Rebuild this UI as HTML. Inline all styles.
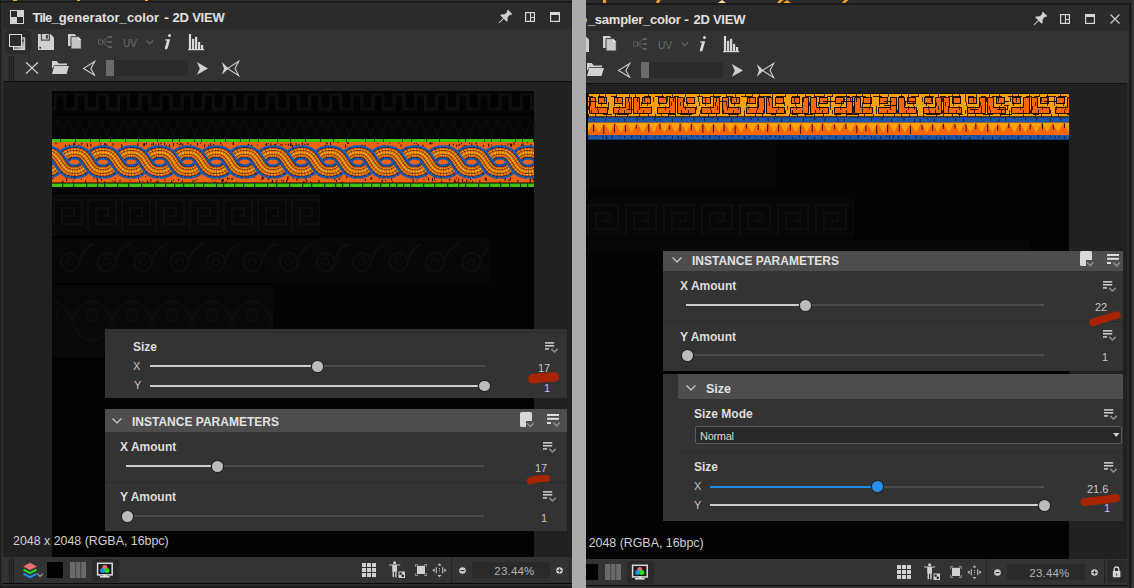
<!DOCTYPE html>
<html><head><meta charset="utf-8">
<style>
*{margin:0;padding:0;box-sizing:border-box}
html,body{width:1134px;height:588px;overflow:hidden;background:#2b2b2b;font-family:"Liberation Sans",sans-serif;color:#d2d2d2}
.a{position:absolute}
.t{position:absolute;white-space:nowrap;line-height:1}
svg{position:absolute;overflow:hidden}
</style></head><body>

<!-- ================= LEFT PANEL ================= -->
<div class="a" style="left:0;top:0;width:572px;height:588px;background:#2b2b2b"></div>
<div class="a" style="left:0;top:0;width:572px;height:1px;background:#2f2f2f"></div>
<div class="a" style="left:0;top:1px;width:572px;height:1px;background:#171717"></div>
<div class="a" style="left:0;top:2px;width:572px;height:1px;background:#1f1f1f"></div>
<div class="a" style="left:1px;top:3px;width:571px;height:1px;background:#2f2f2f"></div>
<div class="a" style="left:13px;top:0;width:4px;height:1.4px;background:#f0a83a"></div>
<div class="a" style="left:77px;top:0;width:3px;height:1.4px;background:#f0a83a"></div>
<div class="a" style="left:145px;top:0;width:3px;height:1.4px;background:#f0a83a"></div>
<div class="a" style="left:0;top:0;width:1px;height:588px;background:#1c1c1c"></div>
<div class="a" style="left:1px;top:3px;width:2px;height:583px;background:#2e2e2e"></div>
<!-- title bar -->
<div class="a" style="left:3px;top:4px;width:569px;height:25px;background:#2b2b2b"></div>
<!-- toolbar -->
<div class="a" style="left:3px;top:29px;width:569px;height:52px;background:#333333"></div>
<div class="a" style="left:3px;top:81px;width:569px;height:1px;background:#0e0e0e"></div>
<!-- viewport -->
<div class="a" style="left:3px;top:82px;width:569px;height:475px;background:#212121"></div>
<!-- image -->
<div class="a" style="left:52px;top:91px;width:482px;height:466px;background:#030303"></div>
<!-- bottom bar -->
<div class="a" style="left:3px;top:557px;width:569px;height:26px;background:#333333"></div>
<div class="a" style="left:3px;top:583px;width:569px;height:1px;background:#0a0a0a"></div>
<div class="a" style="left:1px;top:584px;width:571px;height:2px;background:#2e2e2e"></div>
<div class="a" style="left:0;top:586px;width:572px;height:2px;background:#1c1c1c"></div>

<!-- ================= SPLITTER ================= -->
<div class="a" style="left:572px;top:0;width:14px;height:588px;background:#ababab"></div>

<!-- ================= RIGHT PANEL ================= -->
<div class="a" style="left:586px;top:0;width:548px;height:588px;background:#2b2b2b"></div>
<div class="a" style="left:586px;top:3px;width:545px;height:2px;background:#1a1a1a"></div>
<div class="a" style="left:1129px;top:3px;width:2px;height:585px;background:#1a1a1a"></div>
<div class="a" style="left:1131px;top:0;width:3px;height:588px;background:#333333"></div><div class="a" style="left:1131px;top:0;width:1px;height:588px;background:#2a2a2a"></div>
<svg style="left:586px;top:0" width="548" height="3" viewBox="0 0 548 3"><path d="M17,0 h3 v3 h-3 z M71,0 h3.5 l-1.5,3 h-3 z M197,3 l4,-3 l4,3 z M194,3 h-3 l2.5,-3 h4 z M259,3 h-3 l2.5,-3 h4 z" fill="#f5a020"/><path d="M132,3 l4,-3 l4,3 z" fill="#ffdca8"/></svg>
<!-- title bar -->
<div class="a" style="left:586px;top:5px;width:543px;height:26px;background:#2b2b2b"></div>
<!-- toolbar -->
<div class="a" style="left:586px;top:31px;width:543px;height:52px;background:#333333"></div>
<div class="a" style="left:586px;top:83px;width:541px;height:1px;background:#0e0e0e"></div>
<!-- viewport -->
<div class="a" style="left:586px;top:84px;width:541px;height:475px;background:#212121"></div>
<div class="a" style="left:1127px;top:84px;width:2px;height:504px;background:#2a2a2a"></div>
<!-- image -->
<div class="a" style="left:586px;top:93px;width:483px;height:466px;background:#030303"></div>
<!-- bottom bar -->
<div class="a" style="left:586px;top:559px;width:541px;height:26px;background:#333333"></div>
<div class="a" style="left:586px;top:585px;width:541px;height:1px;background:#0a0a0a"></div>
<div class="a" style="left:586px;top:586px;width:543px;height:2px;background:#2e2e2e"></div>

<svg style="left:52px;top:93px" width="482" height="20" viewBox="0 0 482 20"><path d="M0,16 H3.0 V2 H13.0 V16 H21.2 H24.2 V2 H34.2 V16 H42.4 H45.4 V2 H55.4 V16 H63.6 H66.6 V2 H76.6 V16 H84.8 H87.8 V2 H97.8 V16 H106.0 H109.0 V2 H119.0 V16 H127.2 H130.2 V2 H140.2 V16 H148.4 H151.4 V2 H161.4 V16 H169.6 H172.6 V2 H182.6 V16 H190.8 H193.8 V2 H203.8 V16 H212.0 H215.0 V2 H225.0 V16 H233.2 H236.2 V2 H246.2 V16 H254.4 H257.4 V2 H267.4 V16 H275.6 H278.6 V2 H288.6 V16 H296.8 H299.8 V2 H309.8 V16 H318.0 H321.0 V2 H331.0 V16 H339.2 H342.2 V2 H352.2 V16 H360.4 H363.4 V2 H373.4 V16 H381.6 H384.6 V2 H394.6 V16 H402.8 H405.8 V2 H415.8 V16 H424.0 H427.0 V2 H437.0 V16 H445.2 H448.2 V2 H458.2 V16 H466.4 H469.4 V2 H479.4 V16 H487.6 H490.6 V2 H500.6 V16 H508.8" fill="none" stroke="#0e0e0e" stroke-width="3.2"/><path d="M0,19 H482" stroke="#0a0a0a" stroke-width="1"/></svg>
<svg style="left:52px;top:116px" width="482" height="22" viewBox="0 0 482 22"><rect width="482" height="22" fill="#060606"/><path d="M0.0,20 L5.5,3 L11.0,20 M11.0,20 L16.5,3 L22.0,20 M22.0,20 L27.5,3 L33.0,20 M33.0,20 L38.5,3 L44.0,20 M44.0,20 L49.5,3 L55.0,20 M55.0,20 L60.5,3 L66.0,20 M66.0,20 L71.5,3 L77.0,20 M77.0,20 L82.5,3 L88.0,20 M88.0,20 L93.5,3 L99.0,20 M99.0,20 L104.5,3 L110.0,20 M110.0,20 L115.5,3 L121.0,20 M121.0,20 L126.5,3 L132.0,20 M132.0,20 L137.5,3 L143.0,20 M143.0,20 L148.5,3 L154.0,20 M154.0,20 L159.5,3 L165.0,20 M165.0,20 L170.5,3 L176.0,20 M176.0,20 L181.5,3 L187.0,20 M187.0,20 L192.5,3 L198.0,20 M198.0,20 L203.5,3 L209.0,20 M209.0,20 L214.5,3 L220.0,20 M220.0,20 L225.5,3 L231.0,20 M231.0,20 L236.5,3 L242.0,20 M242.0,20 L247.5,3 L253.0,20 M253.0,20 L258.5,3 L264.0,20 M264.0,20 L269.5,3 L275.0,20 M275.0,20 L280.5,3 L286.0,20 M286.0,20 L291.5,3 L297.0,20 M297.0,20 L302.5,3 L308.0,20 M308.0,20 L313.5,3 L319.0,20 M319.0,20 L324.5,3 L330.0,20 M330.0,20 L335.5,3 L341.0,20 M341.0,20 L346.5,3 L352.0,20 M352.0,20 L357.5,3 L363.0,20 M363.0,20 L368.5,3 L374.0,20 M374.0,20 L379.5,3 L385.0,20 M385.0,20 L390.5,3 L396.0,20 M396.0,20 L401.5,3 L407.0,20 M407.0,20 L412.5,3 L418.0,20 M418.0,20 L423.5,3 L429.0,20 M429.0,20 L434.5,3 L440.0,20 M440.0,20 L445.5,3 L451.0,20 M451.0,20 L456.5,3 L462.0,20 M462.0,20 L467.5,3 L473.0,20 M473.0,20 L478.5,3 L484.0,20 " fill="none" stroke="#0b0b0b" stroke-width="1.6"/></svg>
<svg style="left:52px;top:194px" width="268" height="42" viewBox="0 0 268 42"><rect width="268" height="42" fill="#070707"/><path d="M2.0,36 V6 H30.0 V30 H10.0 V14 H22.0 V22 H16.0 M36.0,36 V6 H64.0 V30 H44.0 V14 H56.0 V22 H50.0 M70.0,36 V6 H98.0 V30 H78.0 V14 H90.0 V22 H84.0 M104.0,36 V6 H132.0 V30 H112.0 V14 H124.0 V22 H118.0 M138.0,36 V6 H166.0 V30 H146.0 V14 H158.0 V22 H152.0 M172.0,36 V6 H200.0 V30 H180.0 V14 H192.0 V22 H186.0 M206.0,36 V6 H234.0 V30 H214.0 V14 H226.0 V22 H220.0 M240.0,36 V6 H268.0 V30 H248.0 V14 H260.0 V22 H254.0 " fill="none" stroke="#0e0e0e" stroke-width="2.2"/><path d="M0,40 H268 M0,2 H268" stroke="#0e0e0e" stroke-width="1.5"/></svg>
<svg style="left:52px;top:238px" width="438" height="45" viewBox="0 0 438 45"><rect width="438" height="45" fill="#070707"/><circle cx="18.0" cy="24" r="9" fill="none" stroke="#0e0e0e" stroke-width="2.4"/><circle cx="18.0" cy="24" r="3.5" fill="none" stroke="#0d0d0d" stroke-width="2"/><path d="M27.0,24 Q32.0,8 42.0,6" fill="none" stroke="#0e0e0e" stroke-width="2.4"/><circle cx="54.5" cy="24" r="9" fill="none" stroke="#0e0e0e" stroke-width="2.4"/><circle cx="54.5" cy="24" r="3.5" fill="none" stroke="#0d0d0d" stroke-width="2"/><path d="M63.5,24 Q68.5,8 78.5,6" fill="none" stroke="#0e0e0e" stroke-width="2.4"/><circle cx="91.0" cy="24" r="9" fill="none" stroke="#0e0e0e" stroke-width="2.4"/><circle cx="91.0" cy="24" r="3.5" fill="none" stroke="#0d0d0d" stroke-width="2"/><path d="M100.0,24 Q105.0,8 115.0,6" fill="none" stroke="#0e0e0e" stroke-width="2.4"/><circle cx="127.5" cy="24" r="9" fill="none" stroke="#0e0e0e" stroke-width="2.4"/><circle cx="127.5" cy="24" r="3.5" fill="none" stroke="#0d0d0d" stroke-width="2"/><path d="M136.5,24 Q141.5,8 151.5,6" fill="none" stroke="#0e0e0e" stroke-width="2.4"/><circle cx="164.0" cy="24" r="9" fill="none" stroke="#0e0e0e" stroke-width="2.4"/><circle cx="164.0" cy="24" r="3.5" fill="none" stroke="#0d0d0d" stroke-width="2"/><path d="M173.0,24 Q178.0,8 188.0,6" fill="none" stroke="#0e0e0e" stroke-width="2.4"/><circle cx="200.5" cy="24" r="9" fill="none" stroke="#0e0e0e" stroke-width="2.4"/><circle cx="200.5" cy="24" r="3.5" fill="none" stroke="#0d0d0d" stroke-width="2"/><path d="M209.5,24 Q214.5,8 224.5,6" fill="none" stroke="#0e0e0e" stroke-width="2.4"/><circle cx="237.0" cy="24" r="9" fill="none" stroke="#0e0e0e" stroke-width="2.4"/><circle cx="237.0" cy="24" r="3.5" fill="none" stroke="#0d0d0d" stroke-width="2"/><path d="M246.0,24 Q251.0,8 261.0,6" fill="none" stroke="#0e0e0e" stroke-width="2.4"/><circle cx="273.5" cy="24" r="9" fill="none" stroke="#0e0e0e" stroke-width="2.4"/><circle cx="273.5" cy="24" r="3.5" fill="none" stroke="#0d0d0d" stroke-width="2"/><path d="M282.5,24 Q287.5,8 297.5,6" fill="none" stroke="#0e0e0e" stroke-width="2.4"/><circle cx="310.0" cy="24" r="9" fill="none" stroke="#0e0e0e" stroke-width="2.4"/><circle cx="310.0" cy="24" r="3.5" fill="none" stroke="#0d0d0d" stroke-width="2"/><path d="M319.0,24 Q324.0,8 334.0,6" fill="none" stroke="#0e0e0e" stroke-width="2.4"/><circle cx="346.5" cy="24" r="9" fill="none" stroke="#0e0e0e" stroke-width="2.4"/><circle cx="346.5" cy="24" r="3.5" fill="none" stroke="#0d0d0d" stroke-width="2"/><path d="M355.5,24 Q360.5,8 370.5,6" fill="none" stroke="#0e0e0e" stroke-width="2.4"/><circle cx="383.0" cy="24" r="9" fill="none" stroke="#0e0e0e" stroke-width="2.4"/><circle cx="383.0" cy="24" r="3.5" fill="none" stroke="#0d0d0d" stroke-width="2"/><path d="M392.0,24 Q397.0,8 407.0,6" fill="none" stroke="#0e0e0e" stroke-width="2.4"/><circle cx="419.5" cy="24" r="9" fill="none" stroke="#0e0e0e" stroke-width="2.4"/><circle cx="419.5" cy="24" r="3.5" fill="none" stroke="#0d0d0d" stroke-width="2"/><path d="M428.5,24 Q433.5,8 443.5,6" fill="none" stroke="#0e0e0e" stroke-width="2.4"/></svg>
<svg style="left:52px;top:285px" width="221" height="72" viewBox="0 0 221 72"><rect width="221" height="72" fill="#080808"/><path d="M-20.0,36 C-10.0,10 10.0,10 20.0,36 C30.0,62 50.0,62 60.0,36" fill="none" stroke="#0d0d0d" stroke-width="3"/><circle cx="0.0" cy="30" r="6" fill="none" stroke="#0e0e0e" stroke-width="2.2"/><path d="M20.0,36 C30.0,10 50.0,10 60.0,36 C70.0,62 90.0,62 100.0,36" fill="none" stroke="#0d0d0d" stroke-width="3"/><circle cx="40.0" cy="30" r="6" fill="none" stroke="#0e0e0e" stroke-width="2.2"/><path d="M60.0,36 C70.0,10 90.0,10 100.0,36 C110.0,62 130.0,62 140.0,36" fill="none" stroke="#0d0d0d" stroke-width="3"/><circle cx="80.0" cy="30" r="6" fill="none" stroke="#0e0e0e" stroke-width="2.2"/><path d="M100.0,36 C110.0,10 130.0,10 140.0,36 C150.0,62 170.0,62 180.0,36" fill="none" stroke="#0d0d0d" stroke-width="3"/><circle cx="120.0" cy="30" r="6" fill="none" stroke="#0e0e0e" stroke-width="2.2"/><path d="M140.0,36 C150.0,10 170.0,10 180.0,36 C190.0,62 210.0,62 220.0,36" fill="none" stroke="#0d0d0d" stroke-width="3"/><circle cx="160.0" cy="30" r="6" fill="none" stroke="#0e0e0e" stroke-width="2.2"/><path d="M180.0,36 C190.0,10 210.0,10 220.0,36 C230.0,62 250.0,62 260.0,36" fill="none" stroke="#0d0d0d" stroke-width="3"/><circle cx="200.0" cy="30" r="6" fill="none" stroke="#0e0e0e" stroke-width="2.2"/><path d="M220.0,36 C230.0,10 250.0,10 260.0,36 C270.0,62 290.0,62 300.0,36" fill="none" stroke="#0d0d0d" stroke-width="3"/><circle cx="240.0" cy="30" r="6" fill="none" stroke="#0e0e0e" stroke-width="2.2"/></svg>
<svg style="left:586px;top:140px" width="190" height="48" viewBox="0 0 190 48"><rect width="190" height="48" fill="#060606"/></svg>
<svg style="left:586px;top:199px" width="268" height="40" viewBox="0 0 268 40"><rect width="268" height="40" fill="#070707"/><path d="M2.0,36 V6 H32.0 V30 H10.0 V14 H24.0 V22 H17.0 M40.0,36 V6 H70.0 V30 H48.0 V14 H62.0 V22 H55.0 M78.0,36 V6 H108.0 V30 H86.0 V14 H100.0 V22 H93.0 M116.0,36 V6 H146.0 V30 H124.0 V14 H138.0 V22 H131.0 M154.0,36 V6 H184.0 V30 H162.0 V14 H176.0 V22 H169.0 M192.0,36 V6 H222.0 V30 H200.0 V14 H214.0 V22 H207.0 M230.0,36 V6 H260.0 V30 H238.0 V14 H252.0 V22 H245.0 M268.0,36 V6 H298.0 V30 H276.0 V14 H290.0 V22 H283.0 " fill="none" stroke="#0e0e0e" stroke-width="2.2"/></svg>
<svg style="left:586px;top:240px" width="444" height="11" viewBox="0 0 444 11"><rect width="444" height="11" fill="#070707"/></svg><svg class="a" style="left:52px;top:138px" width="482" height="50" viewBox="0 0 482 50">
<defs><clipPath id="cb"><rect x="0" y="0" width="482" height="50"/></clipPath></defs><g clip-path="url(#cb)">
<rect x="0" y="1" width="482" height="3" fill="#3fc410"/>
<rect x="8" y="1" width="1" height="3" fill="#1a3a08"/>
<rect x="23" y="1" width="1" height="3" fill="#1a3a08"/>
<rect x="38" y="1" width="1" height="3" fill="#1a3a08"/>
<rect x="47" y="1" width="1" height="3" fill="#1a3a08"/>
<rect x="58" y="1" width="1" height="3" fill="#1a3a08"/>
<rect x="73" y="1" width="1" height="3" fill="#1a3a08"/>
<rect x="86" y="1" width="1" height="3" fill="#1a3a08"/>
<rect x="105" y="1" width="1" height="3" fill="#1a3a08"/>
<rect x="120" y="1" width="1" height="3" fill="#1a3a08"/>
<rect x="127" y="1" width="1" height="3" fill="#1a3a08"/>
<rect x="142" y="1" width="1" height="3" fill="#1a3a08"/>
<rect x="149" y="1" width="1" height="3" fill="#1a3a08"/>
<rect x="162" y="1" width="1" height="3" fill="#1a3a08"/>
<rect x="173" y="1" width="1" height="3" fill="#1a3a08"/>
<rect x="188" y="1" width="1" height="3" fill="#1a3a08"/>
<rect x="197" y="1" width="1" height="3" fill="#1a3a08"/>
<rect x="206" y="1" width="1" height="3" fill="#1a3a08"/>
<rect x="225" y="1" width="1" height="3" fill="#1a3a08"/>
<rect x="238" y="1" width="1" height="3" fill="#1a3a08"/>
<rect x="253" y="1" width="1" height="3" fill="#1a3a08"/>
<rect x="268" y="1" width="1" height="3" fill="#1a3a08"/>
<rect x="281" y="1" width="1" height="3" fill="#1a3a08"/>
<rect x="294" y="1" width="1" height="3" fill="#1a3a08"/>
<rect x="313" y="1" width="1" height="3" fill="#1a3a08"/>
<rect x="322" y="1" width="1" height="3" fill="#1a3a08"/>
<rect x="331" y="1" width="1" height="3" fill="#1a3a08"/>
<rect x="350" y="1" width="1" height="3" fill="#1a3a08"/>
<rect x="359" y="1" width="1" height="3" fill="#1a3a08"/>
<rect x="374" y="1" width="1" height="3" fill="#1a3a08"/>
<rect x="387" y="1" width="1" height="3" fill="#1a3a08"/>
<rect x="406" y="1" width="1" height="3" fill="#1a3a08"/>
<rect x="413" y="1" width="1" height="3" fill="#1a3a08"/>
<rect x="432" y="1" width="1" height="3" fill="#1a3a08"/>
<rect x="439" y="1" width="1" height="3" fill="#1a3a08"/>
<rect x="448" y="1" width="1" height="3" fill="#1a3a08"/>
<rect x="463" y="1" width="1" height="3" fill="#1a3a08"/>
<rect x="470" y="1" width="1" height="3" fill="#1a3a08"/>
<rect x="481" y="1" width="1" height="3" fill="#1a3a08"/>
<rect x="0" y="4" width="482" height="40.5" fill="#f0640f"/>
<rect x="376.0" y="39.6" width="1" height="3" fill="#200800"/>
<rect x="379.9" y="42.4" width="1" height="1" fill="#200800"/>
<rect x="423.6" y="4.3" width="1" height="2" fill="#200800"/>
<rect x="465.4" y="41.8" width="1" height="2" fill="#200800"/>
<rect x="244.5" y="40.1" width="1" height="3" fill="#200800"/>
<rect x="112.0" y="5.0" width="1" height="2" fill="#200800"/>
<rect x="477.7" y="39.0" width="1" height="3" fill="#200800"/>
<rect x="436.1" y="5.7" width="1" height="3" fill="#200800"/>
<rect x="400.8" y="5.7" width="1" height="2" fill="#200800"/>
<rect x="411.6" y="7.0" width="1" height="2" fill="#200800"/>
<rect x="432.4" y="40.6" width="1" height="1" fill="#200800"/>
<rect x="21.3" y="38.3" width="1" height="3" fill="#200800"/>
<rect x="424.6" y="6.9" width="1" height="2" fill="#200800"/>
<rect x="3.5" y="4.3" width="1" height="2" fill="#200800"/>
<rect x="140.6" y="42.1" width="1" height="2" fill="#200800"/>
<rect x="173.6" y="43.2" width="1" height="2" fill="#200800"/>
<rect x="419.3" y="5.2" width="1" height="3" fill="#200800"/>
<rect x="468.9" y="6.4" width="1" height="2" fill="#200800"/>
<rect x="210.8" y="39.8" width="1" height="1" fill="#200800"/>
<rect x="380.0" y="39.9" width="1" height="3" fill="#200800"/>
<rect x="284.0" y="41.8" width="1" height="2" fill="#200800"/>
<rect x="170.1" y="41.7" width="1" height="3" fill="#200800"/>
<rect x="235.9" y="5.8" width="1" height="2" fill="#200800"/>
<rect x="121.0" y="41.6" width="1" height="1" fill="#200800"/>
<rect x="175.4" y="40.2" width="1" height="2" fill="#200800"/>
<rect x="379.5" y="4.3" width="1" height="2" fill="#200800"/>
<rect x="241.0" y="39.6" width="1" height="1" fill="#200800"/>
<rect x="326.8" y="38.6" width="1" height="2" fill="#200800"/>
<rect x="325.3" y="4.7" width="1" height="1" fill="#200800"/>
<rect x="162.3" y="43.3" width="1" height="2" fill="#200800"/>
<rect x="108.5" y="4.4" width="1" height="2" fill="#200800"/>
<rect x="388.9" y="39.1" width="1" height="2" fill="#200800"/>
<rect x="389.1" y="42.8" width="1" height="3" fill="#200800"/>
<rect x="62.5" y="42.8" width="1" height="2" fill="#200800"/>
<rect x="166.9" y="40.5" width="1" height="1" fill="#200800"/>
<rect x="443.7" y="38.0" width="1" height="3" fill="#200800"/>
<rect x="458.0" y="39.3" width="1" height="3" fill="#200800"/>
<rect x="360.5" y="6.9" width="1" height="1" fill="#200800"/>
<rect x="413.5" y="6.9" width="1" height="1" fill="#200800"/>
<rect x="16.9" y="6.4" width="1" height="2" fill="#200800"/>
<rect x="278.1" y="4.0" width="1" height="3" fill="#200800"/>
<rect x="144.5" y="41.1" width="1" height="1" fill="#200800"/>
<rect x="452.6" y="40.0" width="1" height="3" fill="#200800"/>
<rect x="230.0" y="6.3" width="1" height="1" fill="#200800"/>
<rect x="257.7" y="39.0" width="1" height="1" fill="#200800"/>
<rect x="396.9" y="41.8" width="1" height="1" fill="#200800"/>
<rect x="364.6" y="41.7" width="1" height="1" fill="#200800"/>
<rect x="227.9" y="6.3" width="1" height="1" fill="#200800"/>
<rect x="22.3" y="4.1" width="1" height="3" fill="#200800"/>
<rect x="41.5" y="39.9" width="1" height="1" fill="#200800"/>
<rect x="169.3" y="41.5" width="1" height="2" fill="#200800"/>
<rect x="92.1" y="5.0" width="1" height="3" fill="#200800"/>
<rect x="348.5" y="6.4" width="1" height="2" fill="#200800"/>
<rect x="222.1" y="6.0" width="1" height="3" fill="#200800"/>
<rect x="427.3" y="41.8" width="1" height="2" fill="#200800"/>
<rect x="458.0" y="5.3" width="1" height="3" fill="#200800"/>
<rect x="130.2" y="5.8" width="1" height="2" fill="#200800"/>
<rect x="62.8" y="40.0" width="1" height="1" fill="#200800"/>
<rect x="223.7" y="42.9" width="1" height="3" fill="#200800"/>
<rect x="52.4" y="5.0" width="1" height="2" fill="#200800"/>
<rect x="69.2" y="6.3" width="1" height="3" fill="#200800"/>
<rect x="47.9" y="6.6" width="1" height="2" fill="#200800"/>
<rect x="405.6" y="43.1" width="1" height="3" fill="#200800"/>
<rect x="459.1" y="5.7" width="1" height="3" fill="#200800"/>
<rect x="246.5" y="6.1" width="1" height="3" fill="#200800"/>
<rect x="29.5" y="5.0" width="1" height="1" fill="#200800"/>
<rect x="481.2" y="40.7" width="1" height="2" fill="#200800"/>
<rect x="177.1" y="40.1" width="1" height="1" fill="#200800"/>
<rect x="180.9" y="4.7" width="1" height="2" fill="#200800"/>
<rect x="333.0" y="42.0" width="1" height="1" fill="#200800"/>
<rect x="309.9" y="6.7" width="1" height="2" fill="#200800"/>
<rect x="360.6" y="41.1" width="1" height="3" fill="#200800"/>
<rect x="346.5" y="4.6" width="1" height="1" fill="#200800"/>
<rect x="282.3" y="39.4" width="1" height="3" fill="#200800"/>
<rect x="340.0" y="43.1" width="1" height="1" fill="#200800"/>
<rect x="148.1" y="4.8" width="1" height="1" fill="#200800"/>
<rect x="274.7" y="4.7" width="1" height="2" fill="#200800"/>
<rect x="477.8" y="41.6" width="1" height="3" fill="#200800"/>
<rect x="402.3" y="41.3" width="1" height="3" fill="#200800"/>
<rect x="34.9" y="6.8" width="1" height="2" fill="#200800"/>
<rect x="439.1" y="6.7" width="1" height="1" fill="#200800"/>
<rect x="411.6" y="39.1" width="1" height="1" fill="#200800"/>
<rect x="90.2" y="43.2" width="1" height="1" fill="#200800"/>
<rect x="417.0" y="4.9" width="1" height="1" fill="#200800"/>
<rect x="44.7" y="39.8" width="1" height="2" fill="#200800"/>
<rect x="279.7" y="38.0" width="1" height="2" fill="#200800"/>
<rect x="210.3" y="39.3" width="1" height="2" fill="#200800"/>
<rect x="60.5" y="5.0" width="1" height="3" fill="#200800"/>
<rect x="208.5" y="41.2" width="1" height="1" fill="#200800"/>
<rect x="254.3" y="42.1" width="1" height="2" fill="#200800"/>
<rect x="142.4" y="41.9" width="1" height="1" fill="#200800"/>
<rect x="363.5" y="6.9" width="1" height="3" fill="#200800"/>
<rect x="238.1" y="5.1" width="1" height="3" fill="#200800"/>
<rect x="311.2" y="39.1" width="1" height="1" fill="#200800"/>
<rect x="52.2" y="43.5" width="1" height="3" fill="#200800"/>
<rect x="144.9" y="4.6" width="1" height="3" fill="#200800"/>
<rect x="33.1" y="42.5" width="1" height="2" fill="#200800"/>
<rect x="48.1" y="4.8" width="1" height="1" fill="#200800"/>
<rect x="230.7" y="42.2" width="1" height="2" fill="#200800"/>
<rect x="455.5" y="5.3" width="1" height="2" fill="#200800"/>
<rect x="240.0" y="7.0" width="1" height="3" fill="#200800"/>
<rect x="54.3" y="6.3" width="1" height="3" fill="#200800"/>
<rect x="91.2" y="5.2" width="1" height="3" fill="#200800"/>
<rect x="293.0" y="6.6" width="1" height="3" fill="#200800"/>
<rect x="86.2" y="40.2" width="1" height="1" fill="#200800"/>
<rect x="406.0" y="40.4" width="1" height="2" fill="#200800"/>
<rect x="266.4" y="41.8" width="1" height="3" fill="#200800"/>
<rect x="233.3" y="5.8" width="1" height="1" fill="#200800"/>
<rect x="371.4" y="41.0" width="1" height="1" fill="#200800"/>
<rect x="93.2" y="38.2" width="1" height="1" fill="#200800"/>
<rect x="272.8" y="6.9" width="1" height="2" fill="#200800"/>
<rect x="381.9" y="38.3" width="1" height="3" fill="#200800"/>
<rect x="112.5" y="41.2" width="1" height="2" fill="#200800"/>
<rect x="158.3" y="5.0" width="1" height="3" fill="#200800"/>
<rect x="373.7" y="38.5" width="1" height="1" fill="#200800"/>
<rect x="449.1" y="6.6" width="1" height="2" fill="#200800"/>
<rect x="152.2" y="6.4" width="1" height="3" fill="#200800"/>
<rect x="77.5" y="42.2" width="1" height="1" fill="#200800"/>
<rect x="312.9" y="40.8" width="1" height="2" fill="#200800"/>
<rect x="87.0" y="42.3" width="1" height="2" fill="#200800"/>
<rect x="215.8" y="5.1" width="1" height="1" fill="#200800"/>
<rect x="124.7" y="5.1" width="1" height="1" fill="#200800"/>
<rect x="100.9" y="4.5" width="1" height="3" fill="#200800"/>
<rect x="13.2" y="39.0" width="1" height="1" fill="#200800"/>
<rect x="28.8" y="40.7" width="1" height="1" fill="#200800"/>
<rect x="339.1" y="40.4" width="1" height="2" fill="#200800"/>
<rect x="12.9" y="6.9" width="1" height="2" fill="#200800"/>
<rect x="228.8" y="41.7" width="1" height="1" fill="#200800"/>
<rect x="286.5" y="39.7" width="1" height="2" fill="#200800"/>
<rect x="235.5" y="38.2" width="1" height="3" fill="#200800"/>
<rect x="478.5" y="38.3" width="1" height="1" fill="#200800"/>
<rect x="285.5" y="4.0" width="1" height="1" fill="#200800"/>
<rect x="82.1" y="38.3" width="1" height="1" fill="#200800"/>
<rect x="433.7" y="40.0" width="1" height="2" fill="#200800"/>
<rect x="453.1" y="39.8" width="1" height="1" fill="#200800"/>
<rect x="456.6" y="40.5" width="1" height="3" fill="#200800"/>
<rect x="161.1" y="6.0" width="1" height="3" fill="#200800"/>
<rect x="416.7" y="43.6" width="1" height="1" fill="#200800"/>
<rect x="174.9" y="39.4" width="1" height="2" fill="#200800"/>
<rect x="129.9" y="42.3" width="1" height="2" fill="#200800"/>
<rect x="20.6" y="42.5" width="1" height="1" fill="#200800"/>
<rect x="365.6" y="6.0" width="1" height="3" fill="#200800"/>
<rect x="406.6" y="5.9" width="1" height="2" fill="#200800"/>
<rect x="224.8" y="41.9" width="1" height="1" fill="#200800"/>
<rect x="34.7" y="5.2" width="1" height="2" fill="#200800"/>
<rect x="274.2" y="4.3" width="1" height="1" fill="#200800"/>
<rect x="331.7" y="6.9" width="1" height="3" fill="#200800"/>
<rect x="474.9" y="4.3" width="1" height="1" fill="#200800"/>
<rect x="410.1" y="41.0" width="1" height="3" fill="#200800"/>
<rect x="377.0" y="5.4" width="1" height="1" fill="#200800"/>
<rect x="288.3" y="38.6" width="1" height="1" fill="#200800"/>
<rect x="52.6" y="5.2" width="1" height="3" fill="#200800"/>
<rect x="234.1" y="42.2" width="1" height="3" fill="#200800"/>
<rect x="318.6" y="39.8" width="1" height="2" fill="#200800"/>
<rect x="99.3" y="5.6" width="1" height="2" fill="#200800"/>
<rect x="166.8" y="38.4" width="1" height="2" fill="#200800"/>
<rect x="377.9" y="4.2" width="1" height="2" fill="#200800"/>
<rect x="403.9" y="39.4" width="1" height="1" fill="#200800"/>
<rect x="121.0" y="5.0" width="1" height="3" fill="#200800"/>
<rect x="105.4" y="42.4" width="1" height="3" fill="#200800"/>
<rect x="258.2" y="43.7" width="1" height="2" fill="#200800"/>
<rect x="430.8" y="6.9" width="1" height="2" fill="#200800"/>
<rect x="461.5" y="4.1" width="1" height="3" fill="#200800"/>
<rect x="72.6" y="38.4" width="1" height="1" fill="#200800"/>
<rect x="93.9" y="4.6" width="1" height="2" fill="#200800"/>
<rect x="225.7" y="4.6" width="1" height="1" fill="#200800"/>
<rect x="214.0" y="6.7" width="1" height="1" fill="#200800"/>
<rect x="234.9" y="39.7" width="1" height="3" fill="#200800"/>
<rect x="179.6" y="39.9" width="1" height="2" fill="#200800"/>
<rect x="253.5" y="40.2" width="1" height="2" fill="#200800"/>
<rect x="14.2" y="40.2" width="1" height="3" fill="#200800"/>
<rect x="116.9" y="6.4" width="1" height="3" fill="#200800"/>
<rect x="255.9" y="5.6" width="1" height="1" fill="#200800"/>
<rect x="98.3" y="40.8" width="1" height="3" fill="#200800"/>
<rect x="16.9" y="38.1" width="1" height="2" fill="#200800"/>
<rect x="402.7" y="42.9" width="1" height="2" fill="#200800"/>
<rect x="126.1" y="41.0" width="1" height="2" fill="#200800"/>
<rect x="21.2" y="5.3" width="1" height="3" fill="#200800"/>
<rect x="119.2" y="42.5" width="1" height="3" fill="#200800"/>
<rect x="361.8" y="5.0" width="1" height="1" fill="#200800"/>
<rect x="21.9" y="38.4" width="1" height="2" fill="#200800"/>
<rect x="251.2" y="43.2" width="1" height="2" fill="#200800"/>
<rect x="249.9" y="4.5" width="1" height="3" fill="#200800"/>
<rect x="49.0" y="40.7" width="1" height="2" fill="#200800"/>
<rect x="218.1" y="38.9" width="1" height="1" fill="#200800"/>
<rect x="251.6" y="43.1" width="1" height="3" fill="#200800"/>
<rect x="295.2" y="4.1" width="1" height="2" fill="#200800"/>
<rect x="60.4" y="42.5" width="1" height="1" fill="#200800"/>
<rect x="209.8" y="38.2" width="1" height="3" fill="#200800"/>
<rect x="215.9" y="40.1" width="1" height="2" fill="#200800"/>
<rect x="152.4" y="43.7" width="1" height="2" fill="#200800"/>
<rect x="294.3" y="38.2" width="1" height="2" fill="#200800"/>
<rect x="199.2" y="6.7" width="1" height="3" fill="#200800"/>
<rect x="38.3" y="5.6" width="1" height="3" fill="#200800"/>
<rect x="404.2" y="6.6" width="1" height="2" fill="#200800"/>
<rect x="129.0" y="5.4" width="1" height="1" fill="#200800"/>
<rect x="113.7" y="6.9" width="1" height="3" fill="#200800"/>
<rect x="478.5" y="6.0" width="1" height="2" fill="#200800"/>
<rect x="26.3" y="6.3" width="1" height="3" fill="#200800"/>
<rect x="396.5" y="6.6" width="1" height="3" fill="#200800"/>
<rect x="103.3" y="6.3" width="1" height="1" fill="#200800"/>
<rect x="135.3" y="4.4" width="1" height="2" fill="#200800"/>
<rect x="169.9" y="6.7" width="1" height="1" fill="#200800"/>
<rect x="452.7" y="7.0" width="1" height="1" fill="#200800"/>
<rect x="170.8" y="40.9" width="1" height="2" fill="#200800"/>
<rect x="10.3" y="42.5" width="1" height="3" fill="#200800"/>
<rect x="196.4" y="5.6" width="1" height="3" fill="#200800"/>
<rect x="219.9" y="42.5" width="1" height="3" fill="#200800"/>
<rect x="408.9" y="4.5" width="1" height="2" fill="#200800"/>
<rect x="128.2" y="4.6" width="1" height="2" fill="#200800"/>
<rect x="296.1" y="4.5" width="1" height="1" fill="#200800"/>
<rect x="382.7" y="42.1" width="1" height="1" fill="#200800"/>
<rect x="223.4" y="5.7" width="1" height="2" fill="#200800"/>
<rect x="219.9" y="41.8" width="1" height="3" fill="#200800"/>
<rect x="289.7" y="43.6" width="1" height="2" fill="#200800"/>
<rect x="470.5" y="4.9" width="1" height="3" fill="#200800"/>
<rect x="479.8" y="39.5" width="1" height="2" fill="#200800"/>
<rect x="218.3" y="5.4" width="1" height="3" fill="#200800"/>
<rect x="254.7" y="5.3" width="1" height="2" fill="#200800"/>
<rect x="205.1" y="6.5" width="1" height="1" fill="#200800"/>
<rect x="411.9" y="43.9" width="1" height="3" fill="#200800"/>
<rect x="103.5" y="43.3" width="1" height="3" fill="#200800"/>
<rect x="418.1" y="40.2" width="1" height="2" fill="#200800"/>
<rect x="243.6" y="5.2" width="1" height="3" fill="#200800"/>
<rect x="238.6" y="5.0" width="1" height="3" fill="#200800"/>
<rect x="0.1" y="39.3" width="1" height="2" fill="#200800"/>
<rect x="94.9" y="42.4" width="1" height="3" fill="#200800"/>
<rect x="214.2" y="5.1" width="1" height="2" fill="#200800"/>
<rect x="163.5" y="41.1" width="1" height="1" fill="#200800"/>
<rect x="229.1" y="6.7" width="1" height="1" fill="#200800"/>
<rect x="397.0" y="5.8" width="1" height="2" fill="#200800"/>
<rect x="184.5" y="43.9" width="1" height="2" fill="#200800"/>
<rect x="67.5" y="41.8" width="1" height="2" fill="#200800"/>
<rect x="138.3" y="5.9" width="1" height="1" fill="#200800"/>
<rect x="212.9" y="6.3" width="1" height="1" fill="#200800"/>
<rect x="156.4" y="6.7" width="1" height="3" fill="#200800"/>
<rect x="159.8" y="41.5" width="1" height="1" fill="#200800"/>
<rect x="312.5" y="6.9" width="1" height="3" fill="#200800"/>
<rect x="252.4" y="5.7" width="1" height="2" fill="#200800"/>
<rect x="397.3" y="40.4" width="1" height="2" fill="#200800"/>
<rect x="318.8" y="39.2" width="1" height="2" fill="#200800"/>
<rect x="433.7" y="41.2" width="1" height="2" fill="#200800"/>
<rect x="370.5" y="6.7" width="1" height="2" fill="#200800"/>
<rect x="28.9" y="5.3" width="1" height="2" fill="#200800"/>
<rect x="420.0" y="42.9" width="1" height="1" fill="#200800"/>
<rect x="447.4" y="43.1" width="1" height="1" fill="#200800"/>
<rect x="363.8" y="5.0" width="1" height="1" fill="#200800"/>
<rect x="193.4" y="39.1" width="1" height="2" fill="#200800"/>
<rect x="126.9" y="6.1" width="1" height="1" fill="#200800"/>
<rect x="106.2" y="5.3" width="1" height="2" fill="#200800"/>
<rect x="337.2" y="4.6" width="1" height="1" fill="#200800"/>
<rect x="329.7" y="41.6" width="1" height="3" fill="#200800"/>
<rect x="85.4" y="4.9" width="1" height="3" fill="#200800"/>
<rect x="414.3" y="41.5" width="1" height="3" fill="#200800"/>
<rect x="433.2" y="39.3" width="1" height="2" fill="#200800"/>
<rect x="195.8" y="5.9" width="1" height="3" fill="#200800"/>
<rect x="202.0" y="38.9" width="1" height="1" fill="#200800"/>
<rect x="168.2" y="4.4" width="1" height="2" fill="#200800"/>
<rect x="180.7" y="4.1" width="1" height="3" fill="#200800"/>
<rect x="45.1" y="41.3" width="1" height="3" fill="#200800"/>
<rect x="0" y="45.5" width="482" height="3.5" fill="#3fc410"/>
<rect x="10" y="45.5" width="1.2" height="3.5" fill="#102a04"/>
<rect x="21" y="45.5" width="1.2" height="3.5" fill="#102a04"/>
<rect x="34" y="45.5" width="1.2" height="3.5" fill="#102a04"/>
<rect x="45" y="45.5" width="1.2" height="3.5" fill="#102a04"/>
<rect x="52" y="45.5" width="1.2" height="3.5" fill="#102a04"/>
<rect x="65" y="45.5" width="1.2" height="3.5" fill="#102a04"/>
<rect x="76" y="45.5" width="1.2" height="3.5" fill="#102a04"/>
<rect x="89" y="45.5" width="1.2" height="3.5" fill="#102a04"/>
<rect x="102" y="45.5" width="1.2" height="3.5" fill="#102a04"/>
<rect x="113" y="45.5" width="1.2" height="3.5" fill="#102a04"/>
<rect x="122" y="45.5" width="1.2" height="3.5" fill="#102a04"/>
<rect x="131" y="45.5" width="1.2" height="3.5" fill="#102a04"/>
<rect x="142" y="45.5" width="1.2" height="3.5" fill="#102a04"/>
<rect x="151" y="45.5" width="1.2" height="3.5" fill="#102a04"/>
<rect x="164" y="45.5" width="1.2" height="3.5" fill="#102a04"/>
<rect x="171" y="45.5" width="1.2" height="3.5" fill="#102a04"/>
<rect x="182" y="45.5" width="1.2" height="3.5" fill="#102a04"/>
<rect x="191" y="45.5" width="1.2" height="3.5" fill="#102a04"/>
<rect x="202" y="45.5" width="1.2" height="3.5" fill="#102a04"/>
<rect x="215" y="45.5" width="1.2" height="3.5" fill="#102a04"/>
<rect x="224" y="45.5" width="1.2" height="3.5" fill="#102a04"/>
<rect x="237" y="45.5" width="1.2" height="3.5" fill="#102a04"/>
<rect x="250" y="45.5" width="1.2" height="3.5" fill="#102a04"/>
<rect x="259" y="45.5" width="1.2" height="3.5" fill="#102a04"/>
<rect x="272" y="45.5" width="1.2" height="3.5" fill="#102a04"/>
<rect x="283" y="45.5" width="1.2" height="3.5" fill="#102a04"/>
<rect x="290" y="45.5" width="1.2" height="3.5" fill="#102a04"/>
<rect x="297" y="45.5" width="1.2" height="3.5" fill="#102a04"/>
<rect x="310" y="45.5" width="1.2" height="3.5" fill="#102a04"/>
<rect x="319" y="45.5" width="1.2" height="3.5" fill="#102a04"/>
<rect x="328" y="45.5" width="1.2" height="3.5" fill="#102a04"/>
<rect x="337" y="45.5" width="1.2" height="3.5" fill="#102a04"/>
<rect x="344" y="45.5" width="1.2" height="3.5" fill="#102a04"/>
<rect x="351" y="45.5" width="1.2" height="3.5" fill="#102a04"/>
<rect x="358" y="45.5" width="1.2" height="3.5" fill="#102a04"/>
<rect x="371" y="45.5" width="1.2" height="3.5" fill="#102a04"/>
<rect x="382" y="45.5" width="1.2" height="3.5" fill="#102a04"/>
<rect x="395" y="45.5" width="1.2" height="3.5" fill="#102a04"/>
<rect x="406" y="45.5" width="1.2" height="3.5" fill="#102a04"/>
<rect x="413" y="45.5" width="1.2" height="3.5" fill="#102a04"/>
<rect x="426" y="45.5" width="1.2" height="3.5" fill="#102a04"/>
<rect x="437" y="45.5" width="1.2" height="3.5" fill="#102a04"/>
<rect x="448" y="45.5" width="1.2" height="3.5" fill="#102a04"/>
<rect x="457" y="45.5" width="1.2" height="3.5" fill="#102a04"/>
<rect x="468" y="45.5" width="1.2" height="3.5" fill="#102a04"/>
<rect x="475" y="45.5" width="1.2" height="3.5" fill="#102a04"/>
<rect x="484" y="45.5" width="1.2" height="3.5" fill="#102a04"/>
<path d="M561.21,33.60 L563.23,33.50 L565.26,33.19 L567.28,32.56 L569.31,31.46 L571.33,29.69 L573.36,27.14 L575.38,24.00 L577.41,20.86 L579.43,18.31 L581.46,16.54 L583.48,15.44 L585.51,14.81 L587.53,14.50 L589.56,14.40 L591.58,14.50 L593.61,14.81 L595.63,15.44 L597.66,16.54 L599.68,18.31 L601.71,20.86 L603.74,24.00 L605.76,27.14 L607.79,29.69 L609.81,31.46 L611.84,32.56 L613.86,33.19 L615.89,33.50 L617.91,33.60" fill="none" stroke="#1f5cb4" stroke-width="14.5"/>
<path d="M561.21,33.60 L563.23,33.50 L565.26,33.19 L567.28,32.56 L569.31,31.46 L571.33,29.69 L573.36,27.14 L575.38,24.00 L577.41,20.86 L579.43,18.31 L581.46,16.54 L583.48,15.44 L585.51,14.81 L587.53,14.50 L589.56,14.40 L591.58,14.50 L593.61,14.81 L595.63,15.44 L597.66,16.54 L599.68,18.31 L601.71,20.86 L603.74,24.00 L605.76,27.14 L607.79,29.69 L609.81,31.46 L611.84,32.56 L613.86,33.19 L615.89,33.50 L617.91,33.60" fill="none" stroke="#1a0c04" stroke-width="9.6"/>
<path d="M561.21,33.60 L563.23,33.50 L565.26,33.19 L567.28,32.56 L569.31,31.46 L571.33,29.69 L573.36,27.14 L575.38,24.00 L577.41,20.86 L579.43,18.31 L581.46,16.54 L583.48,15.44 L585.51,14.81 L587.53,14.50 L589.56,14.40 L591.58,14.50 L593.61,14.81 L595.63,15.44 L597.66,16.54 L599.68,18.31 L601.71,20.86 L603.74,24.00 L605.76,27.14 L607.79,29.69 L609.81,31.46 L611.84,32.56 L613.86,33.19 L615.89,33.50 L617.91,33.60" fill="none" stroke="#ee640f" stroke-width="9.0"/>
<path d="M561.21,33.60 L563.23,33.50 L565.26,33.19 L567.28,32.56 L569.31,31.46 L571.33,29.69 L573.36,27.14 L575.38,24.00 L577.41,20.86 L579.43,18.31 L581.46,16.54 L583.48,15.44 L585.51,14.81 L587.53,14.50 L589.56,14.40 L591.58,14.50 L593.61,14.81 L595.63,15.44 L597.66,16.54 L599.68,18.31 L601.71,20.86 L603.74,24.00 L605.76,27.14 L607.79,29.69 L609.81,31.46 L611.84,32.56 L613.86,33.19 L615.89,33.50 L617.91,33.60" fill="none" stroke="#f7ac12" stroke-width="6.6"/>
<path d="M561.21,33.60 L563.23,33.50 L565.26,33.19 L567.28,32.56 L569.31,31.46 L571.33,29.69 L573.36,27.14 L575.38,24.00 L577.41,20.86 L579.43,18.31 L581.46,16.54 L583.48,15.44 L585.51,14.81 L587.53,14.50 L589.56,14.40 L591.58,14.50 L593.61,14.81 L595.63,15.44 L597.66,16.54 L599.68,18.31 L601.71,20.86 L603.74,24.00 L605.76,27.14 L607.79,29.69 L609.81,31.46 L611.84,32.56 L613.86,33.19 L615.89,33.50 L617.91,33.60" fill="none" stroke="#2a1004" stroke-width="4.6"/>
<path d="M561.21,33.60 L563.23,33.50 L565.26,33.19 L567.28,32.56 L569.31,31.46 L571.33,29.69 L573.36,27.14 L575.38,24.00 L577.41,20.86 L579.43,18.31 L581.46,16.54 L583.48,15.44 L585.51,14.81 L587.53,14.50 L589.56,14.40 L591.58,14.50 L593.61,14.81 L595.63,15.44 L597.66,16.54 L599.68,18.31 L601.71,20.86 L603.74,24.00 L605.76,27.14 L607.79,29.69 L609.81,31.46 L611.84,32.56 L613.86,33.19 L615.89,33.50 L617.91,33.60" fill="none" stroke="#ee640f" stroke-width="4.0"/>
<path d="M561.21,33.60 L563.23,33.50 L565.26,33.19 L567.28,32.56 L569.31,31.46 L571.33,29.69 L573.36,27.14 L575.38,24.00 L577.41,20.86 L579.43,18.31 L581.46,16.54 L583.48,15.44 L585.51,14.81 L587.53,14.50 L589.56,14.40 L591.58,14.50 L593.61,14.81 L595.63,15.44 L597.66,16.54 L599.68,18.31 L601.71,20.86 L603.74,24.00 L605.76,27.14 L607.79,29.69 L609.81,31.46 L611.84,32.56 L613.86,33.19 L615.89,33.50 L617.91,33.60" fill="none" stroke="#f7ac12" stroke-width="1.8"/>
<path d="M561.21,33.60 L563.23,33.50 L565.26,33.19 L567.28,32.56 L569.31,31.46 L571.33,29.69 L573.36,27.14 L575.38,24.00 L577.41,20.86 L579.43,18.31 L581.46,16.54 L583.48,15.44 L585.51,14.81 L587.53,14.50 L589.56,14.40 L591.58,14.50 L593.61,14.81 L595.63,15.44 L597.66,16.54 L599.68,18.31 L601.71,20.86 L603.74,24.00 L605.76,27.14 L607.79,29.69 L609.81,31.46 L611.84,32.56 L613.86,33.19 L615.89,33.50 L617.91,33.60" fill="none" stroke="#120804" stroke-width="13" stroke-dasharray="0.7 2.0" opacity="0.35"/>
<path d="M532.85,33.60 L534.88,33.50 L536.90,33.19 L538.93,32.56 L540.95,31.46 L542.98,29.69 L545.00,27.14 L547.03,24.00 L549.05,20.86 L551.08,18.31 L553.11,16.54 L555.13,15.44 L557.16,14.81 L559.18,14.50 L561.21,14.40 L563.23,14.50 L565.26,14.81 L567.28,15.44 L569.31,16.54 L571.33,18.31 L573.36,20.86 L575.38,24.00 L577.41,27.14 L579.43,29.69 L581.46,31.46 L583.48,32.56 L585.51,33.19 L587.53,33.50 L589.56,33.60" fill="none" stroke="#1f5cb4" stroke-width="14.5"/>
<path d="M532.85,33.60 L534.88,33.50 L536.90,33.19 L538.93,32.56 L540.95,31.46 L542.98,29.69 L545.00,27.14 L547.03,24.00 L549.05,20.86 L551.08,18.31 L553.11,16.54 L555.13,15.44 L557.16,14.81 L559.18,14.50 L561.21,14.40 L563.23,14.50 L565.26,14.81 L567.28,15.44 L569.31,16.54 L571.33,18.31 L573.36,20.86 L575.38,24.00 L577.41,27.14 L579.43,29.69 L581.46,31.46 L583.48,32.56 L585.51,33.19 L587.53,33.50 L589.56,33.60" fill="none" stroke="#1a0c04" stroke-width="9.6"/>
<path d="M532.85,33.60 L534.88,33.50 L536.90,33.19 L538.93,32.56 L540.95,31.46 L542.98,29.69 L545.00,27.14 L547.03,24.00 L549.05,20.86 L551.08,18.31 L553.11,16.54 L555.13,15.44 L557.16,14.81 L559.18,14.50 L561.21,14.40 L563.23,14.50 L565.26,14.81 L567.28,15.44 L569.31,16.54 L571.33,18.31 L573.36,20.86 L575.38,24.00 L577.41,27.14 L579.43,29.69 L581.46,31.46 L583.48,32.56 L585.51,33.19 L587.53,33.50 L589.56,33.60" fill="none" stroke="#ee640f" stroke-width="9.0"/>
<path d="M532.85,33.60 L534.88,33.50 L536.90,33.19 L538.93,32.56 L540.95,31.46 L542.98,29.69 L545.00,27.14 L547.03,24.00 L549.05,20.86 L551.08,18.31 L553.11,16.54 L555.13,15.44 L557.16,14.81 L559.18,14.50 L561.21,14.40 L563.23,14.50 L565.26,14.81 L567.28,15.44 L569.31,16.54 L571.33,18.31 L573.36,20.86 L575.38,24.00 L577.41,27.14 L579.43,29.69 L581.46,31.46 L583.48,32.56 L585.51,33.19 L587.53,33.50 L589.56,33.60" fill="none" stroke="#f7ac12" stroke-width="6.6"/>
<path d="M532.85,33.60 L534.88,33.50 L536.90,33.19 L538.93,32.56 L540.95,31.46 L542.98,29.69 L545.00,27.14 L547.03,24.00 L549.05,20.86 L551.08,18.31 L553.11,16.54 L555.13,15.44 L557.16,14.81 L559.18,14.50 L561.21,14.40 L563.23,14.50 L565.26,14.81 L567.28,15.44 L569.31,16.54 L571.33,18.31 L573.36,20.86 L575.38,24.00 L577.41,27.14 L579.43,29.69 L581.46,31.46 L583.48,32.56 L585.51,33.19 L587.53,33.50 L589.56,33.60" fill="none" stroke="#2a1004" stroke-width="4.6"/>
<path d="M532.85,33.60 L534.88,33.50 L536.90,33.19 L538.93,32.56 L540.95,31.46 L542.98,29.69 L545.00,27.14 L547.03,24.00 L549.05,20.86 L551.08,18.31 L553.11,16.54 L555.13,15.44 L557.16,14.81 L559.18,14.50 L561.21,14.40 L563.23,14.50 L565.26,14.81 L567.28,15.44 L569.31,16.54 L571.33,18.31 L573.36,20.86 L575.38,24.00 L577.41,27.14 L579.43,29.69 L581.46,31.46 L583.48,32.56 L585.51,33.19 L587.53,33.50 L589.56,33.60" fill="none" stroke="#ee640f" stroke-width="4.0"/>
<path d="M532.85,33.60 L534.88,33.50 L536.90,33.19 L538.93,32.56 L540.95,31.46 L542.98,29.69 L545.00,27.14 L547.03,24.00 L549.05,20.86 L551.08,18.31 L553.11,16.54 L555.13,15.44 L557.16,14.81 L559.18,14.50 L561.21,14.40 L563.23,14.50 L565.26,14.81 L567.28,15.44 L569.31,16.54 L571.33,18.31 L573.36,20.86 L575.38,24.00 L577.41,27.14 L579.43,29.69 L581.46,31.46 L583.48,32.56 L585.51,33.19 L587.53,33.50 L589.56,33.60" fill="none" stroke="#f7ac12" stroke-width="1.8"/>
<path d="M532.85,33.60 L534.88,33.50 L536.90,33.19 L538.93,32.56 L540.95,31.46 L542.98,29.69 L545.00,27.14 L547.03,24.00 L549.05,20.86 L551.08,18.31 L553.11,16.54 L555.13,15.44 L557.16,14.81 L559.18,14.50 L561.21,14.40 L563.23,14.50 L565.26,14.81 L567.28,15.44 L569.31,16.54 L571.33,18.31 L573.36,20.86 L575.38,24.00 L577.41,27.14 L579.43,29.69 L581.46,31.46 L583.48,32.56 L585.51,33.19 L587.53,33.50 L589.56,33.60" fill="none" stroke="#120804" stroke-width="13" stroke-dasharray="0.7 2.0" opacity="0.35"/>
<path d="M504.50,33.60 L506.53,33.50 L508.55,33.19 L510.58,32.56 L512.60,31.46 L514.63,29.69 L516.65,27.14 L518.68,24.00 L520.70,20.86 L522.73,18.31 L524.75,16.54 L526.78,15.44 L528.80,14.81 L530.83,14.50 L532.85,14.40 L534.88,14.50 L536.90,14.81 L538.93,15.44 L540.95,16.54 L542.98,18.31 L545.00,20.86 L547.03,24.00 L549.05,27.14 L551.08,29.69 L553.11,31.46 L555.13,32.56 L557.16,33.19 L559.18,33.50 L561.21,33.60" fill="none" stroke="#1f5cb4" stroke-width="14.5"/>
<path d="M504.50,33.60 L506.53,33.50 L508.55,33.19 L510.58,32.56 L512.60,31.46 L514.63,29.69 L516.65,27.14 L518.68,24.00 L520.70,20.86 L522.73,18.31 L524.75,16.54 L526.78,15.44 L528.80,14.81 L530.83,14.50 L532.85,14.40 L534.88,14.50 L536.90,14.81 L538.93,15.44 L540.95,16.54 L542.98,18.31 L545.00,20.86 L547.03,24.00 L549.05,27.14 L551.08,29.69 L553.11,31.46 L555.13,32.56 L557.16,33.19 L559.18,33.50 L561.21,33.60" fill="none" stroke="#1a0c04" stroke-width="9.6"/>
<path d="M504.50,33.60 L506.53,33.50 L508.55,33.19 L510.58,32.56 L512.60,31.46 L514.63,29.69 L516.65,27.14 L518.68,24.00 L520.70,20.86 L522.73,18.31 L524.75,16.54 L526.78,15.44 L528.80,14.81 L530.83,14.50 L532.85,14.40 L534.88,14.50 L536.90,14.81 L538.93,15.44 L540.95,16.54 L542.98,18.31 L545.00,20.86 L547.03,24.00 L549.05,27.14 L551.08,29.69 L553.11,31.46 L555.13,32.56 L557.16,33.19 L559.18,33.50 L561.21,33.60" fill="none" stroke="#ee640f" stroke-width="9.0"/>
<path d="M504.50,33.60 L506.53,33.50 L508.55,33.19 L510.58,32.56 L512.60,31.46 L514.63,29.69 L516.65,27.14 L518.68,24.00 L520.70,20.86 L522.73,18.31 L524.75,16.54 L526.78,15.44 L528.80,14.81 L530.83,14.50 L532.85,14.40 L534.88,14.50 L536.90,14.81 L538.93,15.44 L540.95,16.54 L542.98,18.31 L545.00,20.86 L547.03,24.00 L549.05,27.14 L551.08,29.69 L553.11,31.46 L555.13,32.56 L557.16,33.19 L559.18,33.50 L561.21,33.60" fill="none" stroke="#f7ac12" stroke-width="6.6"/>
<path d="M504.50,33.60 L506.53,33.50 L508.55,33.19 L510.58,32.56 L512.60,31.46 L514.63,29.69 L516.65,27.14 L518.68,24.00 L520.70,20.86 L522.73,18.31 L524.75,16.54 L526.78,15.44 L528.80,14.81 L530.83,14.50 L532.85,14.40 L534.88,14.50 L536.90,14.81 L538.93,15.44 L540.95,16.54 L542.98,18.31 L545.00,20.86 L547.03,24.00 L549.05,27.14 L551.08,29.69 L553.11,31.46 L555.13,32.56 L557.16,33.19 L559.18,33.50 L561.21,33.60" fill="none" stroke="#2a1004" stroke-width="4.6"/>
<path d="M504.50,33.60 L506.53,33.50 L508.55,33.19 L510.58,32.56 L512.60,31.46 L514.63,29.69 L516.65,27.14 L518.68,24.00 L520.70,20.86 L522.73,18.31 L524.75,16.54 L526.78,15.44 L528.80,14.81 L530.83,14.50 L532.85,14.40 L534.88,14.50 L536.90,14.81 L538.93,15.44 L540.95,16.54 L542.98,18.31 L545.00,20.86 L547.03,24.00 L549.05,27.14 L551.08,29.69 L553.11,31.46 L555.13,32.56 L557.16,33.19 L559.18,33.50 L561.21,33.60" fill="none" stroke="#ee640f" stroke-width="4.0"/>
<path d="M504.50,33.60 L506.53,33.50 L508.55,33.19 L510.58,32.56 L512.60,31.46 L514.63,29.69 L516.65,27.14 L518.68,24.00 L520.70,20.86 L522.73,18.31 L524.75,16.54 L526.78,15.44 L528.80,14.81 L530.83,14.50 L532.85,14.40 L534.88,14.50 L536.90,14.81 L538.93,15.44 L540.95,16.54 L542.98,18.31 L545.00,20.86 L547.03,24.00 L549.05,27.14 L551.08,29.69 L553.11,31.46 L555.13,32.56 L557.16,33.19 L559.18,33.50 L561.21,33.60" fill="none" stroke="#f7ac12" stroke-width="1.8"/>
<path d="M504.50,33.60 L506.53,33.50 L508.55,33.19 L510.58,32.56 L512.60,31.46 L514.63,29.69 L516.65,27.14 L518.68,24.00 L520.70,20.86 L522.73,18.31 L524.75,16.54 L526.78,15.44 L528.80,14.81 L530.83,14.50 L532.85,14.40 L534.88,14.50 L536.90,14.81 L538.93,15.44 L540.95,16.54 L542.98,18.31 L545.00,20.86 L547.03,24.00 L549.05,27.14 L551.08,29.69 L553.11,31.46 L555.13,32.56 L557.16,33.19 L559.18,33.50 L561.21,33.60" fill="none" stroke="#120804" stroke-width="13" stroke-dasharray="0.7 2.0" opacity="0.35"/>
<path d="M476.15,33.60 L478.17,33.50 L480.20,33.19 L482.22,32.56 L484.25,31.46 L486.27,29.69 L488.30,27.14 L490.32,24.00 L492.35,20.86 L494.37,18.31 L496.40,16.54 L498.42,15.44 L500.45,14.81 L502.47,14.50 L504.50,14.40 L506.53,14.50 L508.55,14.81 L510.58,15.44 L512.60,16.54 L514.63,18.31 L516.65,20.86 L518.68,24.00 L520.70,27.14 L522.73,29.69 L524.75,31.46 L526.78,32.56 L528.80,33.19 L530.83,33.50 L532.85,33.60" fill="none" stroke="#1f5cb4" stroke-width="14.5"/>
<path d="M476.15,33.60 L478.17,33.50 L480.20,33.19 L482.22,32.56 L484.25,31.46 L486.27,29.69 L488.30,27.14 L490.32,24.00 L492.35,20.86 L494.37,18.31 L496.40,16.54 L498.42,15.44 L500.45,14.81 L502.47,14.50 L504.50,14.40 L506.53,14.50 L508.55,14.81 L510.58,15.44 L512.60,16.54 L514.63,18.31 L516.65,20.86 L518.68,24.00 L520.70,27.14 L522.73,29.69 L524.75,31.46 L526.78,32.56 L528.80,33.19 L530.83,33.50 L532.85,33.60" fill="none" stroke="#1a0c04" stroke-width="9.6"/>
<path d="M476.15,33.60 L478.17,33.50 L480.20,33.19 L482.22,32.56 L484.25,31.46 L486.27,29.69 L488.30,27.14 L490.32,24.00 L492.35,20.86 L494.37,18.31 L496.40,16.54 L498.42,15.44 L500.45,14.81 L502.47,14.50 L504.50,14.40 L506.53,14.50 L508.55,14.81 L510.58,15.44 L512.60,16.54 L514.63,18.31 L516.65,20.86 L518.68,24.00 L520.70,27.14 L522.73,29.69 L524.75,31.46 L526.78,32.56 L528.80,33.19 L530.83,33.50 L532.85,33.60" fill="none" stroke="#ee640f" stroke-width="9.0"/>
<path d="M476.15,33.60 L478.17,33.50 L480.20,33.19 L482.22,32.56 L484.25,31.46 L486.27,29.69 L488.30,27.14 L490.32,24.00 L492.35,20.86 L494.37,18.31 L496.40,16.54 L498.42,15.44 L500.45,14.81 L502.47,14.50 L504.50,14.40 L506.53,14.50 L508.55,14.81 L510.58,15.44 L512.60,16.54 L514.63,18.31 L516.65,20.86 L518.68,24.00 L520.70,27.14 L522.73,29.69 L524.75,31.46 L526.78,32.56 L528.80,33.19 L530.83,33.50 L532.85,33.60" fill="none" stroke="#f7ac12" stroke-width="6.6"/>
<path d="M476.15,33.60 L478.17,33.50 L480.20,33.19 L482.22,32.56 L484.25,31.46 L486.27,29.69 L488.30,27.14 L490.32,24.00 L492.35,20.86 L494.37,18.31 L496.40,16.54 L498.42,15.44 L500.45,14.81 L502.47,14.50 L504.50,14.40 L506.53,14.50 L508.55,14.81 L510.58,15.44 L512.60,16.54 L514.63,18.31 L516.65,20.86 L518.68,24.00 L520.70,27.14 L522.73,29.69 L524.75,31.46 L526.78,32.56 L528.80,33.19 L530.83,33.50 L532.85,33.60" fill="none" stroke="#2a1004" stroke-width="4.6"/>
<path d="M476.15,33.60 L478.17,33.50 L480.20,33.19 L482.22,32.56 L484.25,31.46 L486.27,29.69 L488.30,27.14 L490.32,24.00 L492.35,20.86 L494.37,18.31 L496.40,16.54 L498.42,15.44 L500.45,14.81 L502.47,14.50 L504.50,14.40 L506.53,14.50 L508.55,14.81 L510.58,15.44 L512.60,16.54 L514.63,18.31 L516.65,20.86 L518.68,24.00 L520.70,27.14 L522.73,29.69 L524.75,31.46 L526.78,32.56 L528.80,33.19 L530.83,33.50 L532.85,33.60" fill="none" stroke="#ee640f" stroke-width="4.0"/>
<path d="M476.15,33.60 L478.17,33.50 L480.20,33.19 L482.22,32.56 L484.25,31.46 L486.27,29.69 L488.30,27.14 L490.32,24.00 L492.35,20.86 L494.37,18.31 L496.40,16.54 L498.42,15.44 L500.45,14.81 L502.47,14.50 L504.50,14.40 L506.53,14.50 L508.55,14.81 L510.58,15.44 L512.60,16.54 L514.63,18.31 L516.65,20.86 L518.68,24.00 L520.70,27.14 L522.73,29.69 L524.75,31.46 L526.78,32.56 L528.80,33.19 L530.83,33.50 L532.85,33.60" fill="none" stroke="#f7ac12" stroke-width="1.8"/>
<path d="M476.15,33.60 L478.17,33.50 L480.20,33.19 L482.22,32.56 L484.25,31.46 L486.27,29.69 L488.30,27.14 L490.32,24.00 L492.35,20.86 L494.37,18.31 L496.40,16.54 L498.42,15.44 L500.45,14.81 L502.47,14.50 L504.50,14.40 L506.53,14.50 L508.55,14.81 L510.58,15.44 L512.60,16.54 L514.63,18.31 L516.65,20.86 L518.68,24.00 L520.70,27.14 L522.73,29.69 L524.75,31.46 L526.78,32.56 L528.80,33.19 L530.83,33.50 L532.85,33.60" fill="none" stroke="#120804" stroke-width="13" stroke-dasharray="0.7 2.0" opacity="0.35"/>
<path d="M447.79,33.60 L449.82,33.50 L451.84,33.19 L453.87,32.56 L455.89,31.46 L457.92,29.69 L459.95,27.14 L461.97,24.00 L464.00,20.86 L466.02,18.31 L468.05,16.54 L470.07,15.44 L472.10,14.81 L474.12,14.50 L476.15,14.40 L478.17,14.50 L480.20,14.81 L482.22,15.44 L484.25,16.54 L486.27,18.31 L488.30,20.86 L490.32,24.00 L492.35,27.14 L494.37,29.69 L496.40,31.46 L498.42,32.56 L500.45,33.19 L502.47,33.50 L504.50,33.60" fill="none" stroke="#1f5cb4" stroke-width="14.5"/>
<path d="M447.79,33.60 L449.82,33.50 L451.84,33.19 L453.87,32.56 L455.89,31.46 L457.92,29.69 L459.95,27.14 L461.97,24.00 L464.00,20.86 L466.02,18.31 L468.05,16.54 L470.07,15.44 L472.10,14.81 L474.12,14.50 L476.15,14.40 L478.17,14.50 L480.20,14.81 L482.22,15.44 L484.25,16.54 L486.27,18.31 L488.30,20.86 L490.32,24.00 L492.35,27.14 L494.37,29.69 L496.40,31.46 L498.42,32.56 L500.45,33.19 L502.47,33.50 L504.50,33.60" fill="none" stroke="#1a0c04" stroke-width="9.6"/>
<path d="M447.79,33.60 L449.82,33.50 L451.84,33.19 L453.87,32.56 L455.89,31.46 L457.92,29.69 L459.95,27.14 L461.97,24.00 L464.00,20.86 L466.02,18.31 L468.05,16.54 L470.07,15.44 L472.10,14.81 L474.12,14.50 L476.15,14.40 L478.17,14.50 L480.20,14.81 L482.22,15.44 L484.25,16.54 L486.27,18.31 L488.30,20.86 L490.32,24.00 L492.35,27.14 L494.37,29.69 L496.40,31.46 L498.42,32.56 L500.45,33.19 L502.47,33.50 L504.50,33.60" fill="none" stroke="#ee640f" stroke-width="9.0"/>
<path d="M447.79,33.60 L449.82,33.50 L451.84,33.19 L453.87,32.56 L455.89,31.46 L457.92,29.69 L459.95,27.14 L461.97,24.00 L464.00,20.86 L466.02,18.31 L468.05,16.54 L470.07,15.44 L472.10,14.81 L474.12,14.50 L476.15,14.40 L478.17,14.50 L480.20,14.81 L482.22,15.44 L484.25,16.54 L486.27,18.31 L488.30,20.86 L490.32,24.00 L492.35,27.14 L494.37,29.69 L496.40,31.46 L498.42,32.56 L500.45,33.19 L502.47,33.50 L504.50,33.60" fill="none" stroke="#f7ac12" stroke-width="6.6"/>
<path d="M447.79,33.60 L449.82,33.50 L451.84,33.19 L453.87,32.56 L455.89,31.46 L457.92,29.69 L459.95,27.14 L461.97,24.00 L464.00,20.86 L466.02,18.31 L468.05,16.54 L470.07,15.44 L472.10,14.81 L474.12,14.50 L476.15,14.40 L478.17,14.50 L480.20,14.81 L482.22,15.44 L484.25,16.54 L486.27,18.31 L488.30,20.86 L490.32,24.00 L492.35,27.14 L494.37,29.69 L496.40,31.46 L498.42,32.56 L500.45,33.19 L502.47,33.50 L504.50,33.60" fill="none" stroke="#2a1004" stroke-width="4.6"/>
<path d="M447.79,33.60 L449.82,33.50 L451.84,33.19 L453.87,32.56 L455.89,31.46 L457.92,29.69 L459.95,27.14 L461.97,24.00 L464.00,20.86 L466.02,18.31 L468.05,16.54 L470.07,15.44 L472.10,14.81 L474.12,14.50 L476.15,14.40 L478.17,14.50 L480.20,14.81 L482.22,15.44 L484.25,16.54 L486.27,18.31 L488.30,20.86 L490.32,24.00 L492.35,27.14 L494.37,29.69 L496.40,31.46 L498.42,32.56 L500.45,33.19 L502.47,33.50 L504.50,33.60" fill="none" stroke="#ee640f" stroke-width="4.0"/>
<path d="M447.79,33.60 L449.82,33.50 L451.84,33.19 L453.87,32.56 L455.89,31.46 L457.92,29.69 L459.95,27.14 L461.97,24.00 L464.00,20.86 L466.02,18.31 L468.05,16.54 L470.07,15.44 L472.10,14.81 L474.12,14.50 L476.15,14.40 L478.17,14.50 L480.20,14.81 L482.22,15.44 L484.25,16.54 L486.27,18.31 L488.30,20.86 L490.32,24.00 L492.35,27.14 L494.37,29.69 L496.40,31.46 L498.42,32.56 L500.45,33.19 L502.47,33.50 L504.50,33.60" fill="none" stroke="#f7ac12" stroke-width="1.8"/>
<path d="M447.79,33.60 L449.82,33.50 L451.84,33.19 L453.87,32.56 L455.89,31.46 L457.92,29.69 L459.95,27.14 L461.97,24.00 L464.00,20.86 L466.02,18.31 L468.05,16.54 L470.07,15.44 L472.10,14.81 L474.12,14.50 L476.15,14.40 L478.17,14.50 L480.20,14.81 L482.22,15.44 L484.25,16.54 L486.27,18.31 L488.30,20.86 L490.32,24.00 L492.35,27.14 L494.37,29.69 L496.40,31.46 L498.42,32.56 L500.45,33.19 L502.47,33.50 L504.50,33.60" fill="none" stroke="#120804" stroke-width="13" stroke-dasharray="0.7 2.0" opacity="0.35"/>
<path d="M419.44,33.60 L421.47,33.50 L423.49,33.19 L425.52,32.56 L427.54,31.46 L429.57,29.69 L431.59,27.14 L433.62,24.00 L435.64,20.86 L437.67,18.31 L439.69,16.54 L441.72,15.44 L443.74,14.81 L445.77,14.50 L447.79,14.40 L449.82,14.50 L451.84,14.81 L453.87,15.44 L455.89,16.54 L457.92,18.31 L459.95,20.86 L461.97,24.00 L464.00,27.14 L466.02,29.69 L468.05,31.46 L470.07,32.56 L472.10,33.19 L474.12,33.50 L476.15,33.60" fill="none" stroke="#1f5cb4" stroke-width="14.5"/>
<path d="M419.44,33.60 L421.47,33.50 L423.49,33.19 L425.52,32.56 L427.54,31.46 L429.57,29.69 L431.59,27.14 L433.62,24.00 L435.64,20.86 L437.67,18.31 L439.69,16.54 L441.72,15.44 L443.74,14.81 L445.77,14.50 L447.79,14.40 L449.82,14.50 L451.84,14.81 L453.87,15.44 L455.89,16.54 L457.92,18.31 L459.95,20.86 L461.97,24.00 L464.00,27.14 L466.02,29.69 L468.05,31.46 L470.07,32.56 L472.10,33.19 L474.12,33.50 L476.15,33.60" fill="none" stroke="#1a0c04" stroke-width="9.6"/>
<path d="M419.44,33.60 L421.47,33.50 L423.49,33.19 L425.52,32.56 L427.54,31.46 L429.57,29.69 L431.59,27.14 L433.62,24.00 L435.64,20.86 L437.67,18.31 L439.69,16.54 L441.72,15.44 L443.74,14.81 L445.77,14.50 L447.79,14.40 L449.82,14.50 L451.84,14.81 L453.87,15.44 L455.89,16.54 L457.92,18.31 L459.95,20.86 L461.97,24.00 L464.00,27.14 L466.02,29.69 L468.05,31.46 L470.07,32.56 L472.10,33.19 L474.12,33.50 L476.15,33.60" fill="none" stroke="#ee640f" stroke-width="9.0"/>
<path d="M419.44,33.60 L421.47,33.50 L423.49,33.19 L425.52,32.56 L427.54,31.46 L429.57,29.69 L431.59,27.14 L433.62,24.00 L435.64,20.86 L437.67,18.31 L439.69,16.54 L441.72,15.44 L443.74,14.81 L445.77,14.50 L447.79,14.40 L449.82,14.50 L451.84,14.81 L453.87,15.44 L455.89,16.54 L457.92,18.31 L459.95,20.86 L461.97,24.00 L464.00,27.14 L466.02,29.69 L468.05,31.46 L470.07,32.56 L472.10,33.19 L474.12,33.50 L476.15,33.60" fill="none" stroke="#f7ac12" stroke-width="6.6"/>
<path d="M419.44,33.60 L421.47,33.50 L423.49,33.19 L425.52,32.56 L427.54,31.46 L429.57,29.69 L431.59,27.14 L433.62,24.00 L435.64,20.86 L437.67,18.31 L439.69,16.54 L441.72,15.44 L443.74,14.81 L445.77,14.50 L447.79,14.40 L449.82,14.50 L451.84,14.81 L453.87,15.44 L455.89,16.54 L457.92,18.31 L459.95,20.86 L461.97,24.00 L464.00,27.14 L466.02,29.69 L468.05,31.46 L470.07,32.56 L472.10,33.19 L474.12,33.50 L476.15,33.60" fill="none" stroke="#2a1004" stroke-width="4.6"/>
<path d="M419.44,33.60 L421.47,33.50 L423.49,33.19 L425.52,32.56 L427.54,31.46 L429.57,29.69 L431.59,27.14 L433.62,24.00 L435.64,20.86 L437.67,18.31 L439.69,16.54 L441.72,15.44 L443.74,14.81 L445.77,14.50 L447.79,14.40 L449.82,14.50 L451.84,14.81 L453.87,15.44 L455.89,16.54 L457.92,18.31 L459.95,20.86 L461.97,24.00 L464.00,27.14 L466.02,29.69 L468.05,31.46 L470.07,32.56 L472.10,33.19 L474.12,33.50 L476.15,33.60" fill="none" stroke="#ee640f" stroke-width="4.0"/>
<path d="M419.44,33.60 L421.47,33.50 L423.49,33.19 L425.52,32.56 L427.54,31.46 L429.57,29.69 L431.59,27.14 L433.62,24.00 L435.64,20.86 L437.67,18.31 L439.69,16.54 L441.72,15.44 L443.74,14.81 L445.77,14.50 L447.79,14.40 L449.82,14.50 L451.84,14.81 L453.87,15.44 L455.89,16.54 L457.92,18.31 L459.95,20.86 L461.97,24.00 L464.00,27.14 L466.02,29.69 L468.05,31.46 L470.07,32.56 L472.10,33.19 L474.12,33.50 L476.15,33.60" fill="none" stroke="#f7ac12" stroke-width="1.8"/>
<path d="M419.44,33.60 L421.47,33.50 L423.49,33.19 L425.52,32.56 L427.54,31.46 L429.57,29.69 L431.59,27.14 L433.62,24.00 L435.64,20.86 L437.67,18.31 L439.69,16.54 L441.72,15.44 L443.74,14.81 L445.77,14.50 L447.79,14.40 L449.82,14.50 L451.84,14.81 L453.87,15.44 L455.89,16.54 L457.92,18.31 L459.95,20.86 L461.97,24.00 L464.00,27.14 L466.02,29.69 L468.05,31.46 L470.07,32.56 L472.10,33.19 L474.12,33.50 L476.15,33.60" fill="none" stroke="#120804" stroke-width="13" stroke-dasharray="0.7 2.0" opacity="0.35"/>
<path d="M391.09,33.60 L393.11,33.50 L395.14,33.19 L397.16,32.56 L399.19,31.46 L401.21,29.69 L403.24,27.14 L405.26,24.00 L407.29,20.86 L409.32,18.31 L411.34,16.54 L413.37,15.44 L415.39,14.81 L417.42,14.50 L419.44,14.40 L421.47,14.50 L423.49,14.81 L425.52,15.44 L427.54,16.54 L429.57,18.31 L431.59,20.86 L433.62,24.00 L435.64,27.14 L437.67,29.69 L439.69,31.46 L441.72,32.56 L443.74,33.19 L445.77,33.50 L447.79,33.60" fill="none" stroke="#1f5cb4" stroke-width="14.5"/>
<path d="M391.09,33.60 L393.11,33.50 L395.14,33.19 L397.16,32.56 L399.19,31.46 L401.21,29.69 L403.24,27.14 L405.26,24.00 L407.29,20.86 L409.32,18.31 L411.34,16.54 L413.37,15.44 L415.39,14.81 L417.42,14.50 L419.44,14.40 L421.47,14.50 L423.49,14.81 L425.52,15.44 L427.54,16.54 L429.57,18.31 L431.59,20.86 L433.62,24.00 L435.64,27.14 L437.67,29.69 L439.69,31.46 L441.72,32.56 L443.74,33.19 L445.77,33.50 L447.79,33.60" fill="none" stroke="#1a0c04" stroke-width="9.6"/>
<path d="M391.09,33.60 L393.11,33.50 L395.14,33.19 L397.16,32.56 L399.19,31.46 L401.21,29.69 L403.24,27.14 L405.26,24.00 L407.29,20.86 L409.32,18.31 L411.34,16.54 L413.37,15.44 L415.39,14.81 L417.42,14.50 L419.44,14.40 L421.47,14.50 L423.49,14.81 L425.52,15.44 L427.54,16.54 L429.57,18.31 L431.59,20.86 L433.62,24.00 L435.64,27.14 L437.67,29.69 L439.69,31.46 L441.72,32.56 L443.74,33.19 L445.77,33.50 L447.79,33.60" fill="none" stroke="#ee640f" stroke-width="9.0"/>
<path d="M391.09,33.60 L393.11,33.50 L395.14,33.19 L397.16,32.56 L399.19,31.46 L401.21,29.69 L403.24,27.14 L405.26,24.00 L407.29,20.86 L409.32,18.31 L411.34,16.54 L413.37,15.44 L415.39,14.81 L417.42,14.50 L419.44,14.40 L421.47,14.50 L423.49,14.81 L425.52,15.44 L427.54,16.54 L429.57,18.31 L431.59,20.86 L433.62,24.00 L435.64,27.14 L437.67,29.69 L439.69,31.46 L441.72,32.56 L443.74,33.19 L445.77,33.50 L447.79,33.60" fill="none" stroke="#f7ac12" stroke-width="6.6"/>
<path d="M391.09,33.60 L393.11,33.50 L395.14,33.19 L397.16,32.56 L399.19,31.46 L401.21,29.69 L403.24,27.14 L405.26,24.00 L407.29,20.86 L409.32,18.31 L411.34,16.54 L413.37,15.44 L415.39,14.81 L417.42,14.50 L419.44,14.40 L421.47,14.50 L423.49,14.81 L425.52,15.44 L427.54,16.54 L429.57,18.31 L431.59,20.86 L433.62,24.00 L435.64,27.14 L437.67,29.69 L439.69,31.46 L441.72,32.56 L443.74,33.19 L445.77,33.50 L447.79,33.60" fill="none" stroke="#2a1004" stroke-width="4.6"/>
<path d="M391.09,33.60 L393.11,33.50 L395.14,33.19 L397.16,32.56 L399.19,31.46 L401.21,29.69 L403.24,27.14 L405.26,24.00 L407.29,20.86 L409.32,18.31 L411.34,16.54 L413.37,15.44 L415.39,14.81 L417.42,14.50 L419.44,14.40 L421.47,14.50 L423.49,14.81 L425.52,15.44 L427.54,16.54 L429.57,18.31 L431.59,20.86 L433.62,24.00 L435.64,27.14 L437.67,29.69 L439.69,31.46 L441.72,32.56 L443.74,33.19 L445.77,33.50 L447.79,33.60" fill="none" stroke="#ee640f" stroke-width="4.0"/>
<path d="M391.09,33.60 L393.11,33.50 L395.14,33.19 L397.16,32.56 L399.19,31.46 L401.21,29.69 L403.24,27.14 L405.26,24.00 L407.29,20.86 L409.32,18.31 L411.34,16.54 L413.37,15.44 L415.39,14.81 L417.42,14.50 L419.44,14.40 L421.47,14.50 L423.49,14.81 L425.52,15.44 L427.54,16.54 L429.57,18.31 L431.59,20.86 L433.62,24.00 L435.64,27.14 L437.67,29.69 L439.69,31.46 L441.72,32.56 L443.74,33.19 L445.77,33.50 L447.79,33.60" fill="none" stroke="#f7ac12" stroke-width="1.8"/>
<path d="M391.09,33.60 L393.11,33.50 L395.14,33.19 L397.16,32.56 L399.19,31.46 L401.21,29.69 L403.24,27.14 L405.26,24.00 L407.29,20.86 L409.32,18.31 L411.34,16.54 L413.37,15.44 L415.39,14.81 L417.42,14.50 L419.44,14.40 L421.47,14.50 L423.49,14.81 L425.52,15.44 L427.54,16.54 L429.57,18.31 L431.59,20.86 L433.62,24.00 L435.64,27.14 L437.67,29.69 L439.69,31.46 L441.72,32.56 L443.74,33.19 L445.77,33.50 L447.79,33.60" fill="none" stroke="#120804" stroke-width="13" stroke-dasharray="0.7 2.0" opacity="0.35"/>
<path d="M362.74,33.60 L364.76,33.50 L366.79,33.19 L368.81,32.56 L370.84,31.46 L372.86,29.69 L374.89,27.14 L376.91,24.00 L378.94,20.86 L380.96,18.31 L382.99,16.54 L385.01,15.44 L387.04,14.81 L389.06,14.50 L391.09,14.40 L393.11,14.50 L395.14,14.81 L397.16,15.44 L399.19,16.54 L401.21,18.31 L403.24,20.86 L405.26,24.00 L407.29,27.14 L409.32,29.69 L411.34,31.46 L413.37,32.56 L415.39,33.19 L417.42,33.50 L419.44,33.60" fill="none" stroke="#1f5cb4" stroke-width="14.5"/>
<path d="M362.74,33.60 L364.76,33.50 L366.79,33.19 L368.81,32.56 L370.84,31.46 L372.86,29.69 L374.89,27.14 L376.91,24.00 L378.94,20.86 L380.96,18.31 L382.99,16.54 L385.01,15.44 L387.04,14.81 L389.06,14.50 L391.09,14.40 L393.11,14.50 L395.14,14.81 L397.16,15.44 L399.19,16.54 L401.21,18.31 L403.24,20.86 L405.26,24.00 L407.29,27.14 L409.32,29.69 L411.34,31.46 L413.37,32.56 L415.39,33.19 L417.42,33.50 L419.44,33.60" fill="none" stroke="#1a0c04" stroke-width="9.6"/>
<path d="M362.74,33.60 L364.76,33.50 L366.79,33.19 L368.81,32.56 L370.84,31.46 L372.86,29.69 L374.89,27.14 L376.91,24.00 L378.94,20.86 L380.96,18.31 L382.99,16.54 L385.01,15.44 L387.04,14.81 L389.06,14.50 L391.09,14.40 L393.11,14.50 L395.14,14.81 L397.16,15.44 L399.19,16.54 L401.21,18.31 L403.24,20.86 L405.26,24.00 L407.29,27.14 L409.32,29.69 L411.34,31.46 L413.37,32.56 L415.39,33.19 L417.42,33.50 L419.44,33.60" fill="none" stroke="#ee640f" stroke-width="9.0"/>
<path d="M362.74,33.60 L364.76,33.50 L366.79,33.19 L368.81,32.56 L370.84,31.46 L372.86,29.69 L374.89,27.14 L376.91,24.00 L378.94,20.86 L380.96,18.31 L382.99,16.54 L385.01,15.44 L387.04,14.81 L389.06,14.50 L391.09,14.40 L393.11,14.50 L395.14,14.81 L397.16,15.44 L399.19,16.54 L401.21,18.31 L403.24,20.86 L405.26,24.00 L407.29,27.14 L409.32,29.69 L411.34,31.46 L413.37,32.56 L415.39,33.19 L417.42,33.50 L419.44,33.60" fill="none" stroke="#f7ac12" stroke-width="6.6"/>
<path d="M362.74,33.60 L364.76,33.50 L366.79,33.19 L368.81,32.56 L370.84,31.46 L372.86,29.69 L374.89,27.14 L376.91,24.00 L378.94,20.86 L380.96,18.31 L382.99,16.54 L385.01,15.44 L387.04,14.81 L389.06,14.50 L391.09,14.40 L393.11,14.50 L395.14,14.81 L397.16,15.44 L399.19,16.54 L401.21,18.31 L403.24,20.86 L405.26,24.00 L407.29,27.14 L409.32,29.69 L411.34,31.46 L413.37,32.56 L415.39,33.19 L417.42,33.50 L419.44,33.60" fill="none" stroke="#2a1004" stroke-width="4.6"/>
<path d="M362.74,33.60 L364.76,33.50 L366.79,33.19 L368.81,32.56 L370.84,31.46 L372.86,29.69 L374.89,27.14 L376.91,24.00 L378.94,20.86 L380.96,18.31 L382.99,16.54 L385.01,15.44 L387.04,14.81 L389.06,14.50 L391.09,14.40 L393.11,14.50 L395.14,14.81 L397.16,15.44 L399.19,16.54 L401.21,18.31 L403.24,20.86 L405.26,24.00 L407.29,27.14 L409.32,29.69 L411.34,31.46 L413.37,32.56 L415.39,33.19 L417.42,33.50 L419.44,33.60" fill="none" stroke="#ee640f" stroke-width="4.0"/>
<path d="M362.74,33.60 L364.76,33.50 L366.79,33.19 L368.81,32.56 L370.84,31.46 L372.86,29.69 L374.89,27.14 L376.91,24.00 L378.94,20.86 L380.96,18.31 L382.99,16.54 L385.01,15.44 L387.04,14.81 L389.06,14.50 L391.09,14.40 L393.11,14.50 L395.14,14.81 L397.16,15.44 L399.19,16.54 L401.21,18.31 L403.24,20.86 L405.26,24.00 L407.29,27.14 L409.32,29.69 L411.34,31.46 L413.37,32.56 L415.39,33.19 L417.42,33.50 L419.44,33.60" fill="none" stroke="#f7ac12" stroke-width="1.8"/>
<path d="M362.74,33.60 L364.76,33.50 L366.79,33.19 L368.81,32.56 L370.84,31.46 L372.86,29.69 L374.89,27.14 L376.91,24.00 L378.94,20.86 L380.96,18.31 L382.99,16.54 L385.01,15.44 L387.04,14.81 L389.06,14.50 L391.09,14.40 L393.11,14.50 L395.14,14.81 L397.16,15.44 L399.19,16.54 L401.21,18.31 L403.24,20.86 L405.26,24.00 L407.29,27.14 L409.32,29.69 L411.34,31.46 L413.37,32.56 L415.39,33.19 L417.42,33.50 L419.44,33.60" fill="none" stroke="#120804" stroke-width="13" stroke-dasharray="0.7 2.0" opacity="0.35"/>
<path d="M334.38,33.60 L336.41,33.50 L338.43,33.19 L340.46,32.56 L342.48,31.46 L344.51,29.69 L346.53,27.14 L348.56,24.00 L350.58,20.86 L352.61,18.31 L354.63,16.54 L356.66,15.44 L358.68,14.81 L360.71,14.50 L362.74,14.40 L364.76,14.50 L366.79,14.81 L368.81,15.44 L370.84,16.54 L372.86,18.31 L374.89,20.86 L376.91,24.00 L378.94,27.14 L380.96,29.69 L382.99,31.46 L385.01,32.56 L387.04,33.19 L389.06,33.50 L391.09,33.60" fill="none" stroke="#1f5cb4" stroke-width="14.5"/>
<path d="M334.38,33.60 L336.41,33.50 L338.43,33.19 L340.46,32.56 L342.48,31.46 L344.51,29.69 L346.53,27.14 L348.56,24.00 L350.58,20.86 L352.61,18.31 L354.63,16.54 L356.66,15.44 L358.68,14.81 L360.71,14.50 L362.74,14.40 L364.76,14.50 L366.79,14.81 L368.81,15.44 L370.84,16.54 L372.86,18.31 L374.89,20.86 L376.91,24.00 L378.94,27.14 L380.96,29.69 L382.99,31.46 L385.01,32.56 L387.04,33.19 L389.06,33.50 L391.09,33.60" fill="none" stroke="#1a0c04" stroke-width="9.6"/>
<path d="M334.38,33.60 L336.41,33.50 L338.43,33.19 L340.46,32.56 L342.48,31.46 L344.51,29.69 L346.53,27.14 L348.56,24.00 L350.58,20.86 L352.61,18.31 L354.63,16.54 L356.66,15.44 L358.68,14.81 L360.71,14.50 L362.74,14.40 L364.76,14.50 L366.79,14.81 L368.81,15.44 L370.84,16.54 L372.86,18.31 L374.89,20.86 L376.91,24.00 L378.94,27.14 L380.96,29.69 L382.99,31.46 L385.01,32.56 L387.04,33.19 L389.06,33.50 L391.09,33.60" fill="none" stroke="#ee640f" stroke-width="9.0"/>
<path d="M334.38,33.60 L336.41,33.50 L338.43,33.19 L340.46,32.56 L342.48,31.46 L344.51,29.69 L346.53,27.14 L348.56,24.00 L350.58,20.86 L352.61,18.31 L354.63,16.54 L356.66,15.44 L358.68,14.81 L360.71,14.50 L362.74,14.40 L364.76,14.50 L366.79,14.81 L368.81,15.44 L370.84,16.54 L372.86,18.31 L374.89,20.86 L376.91,24.00 L378.94,27.14 L380.96,29.69 L382.99,31.46 L385.01,32.56 L387.04,33.19 L389.06,33.50 L391.09,33.60" fill="none" stroke="#f7ac12" stroke-width="6.6"/>
<path d="M334.38,33.60 L336.41,33.50 L338.43,33.19 L340.46,32.56 L342.48,31.46 L344.51,29.69 L346.53,27.14 L348.56,24.00 L350.58,20.86 L352.61,18.31 L354.63,16.54 L356.66,15.44 L358.68,14.81 L360.71,14.50 L362.74,14.40 L364.76,14.50 L366.79,14.81 L368.81,15.44 L370.84,16.54 L372.86,18.31 L374.89,20.86 L376.91,24.00 L378.94,27.14 L380.96,29.69 L382.99,31.46 L385.01,32.56 L387.04,33.19 L389.06,33.50 L391.09,33.60" fill="none" stroke="#2a1004" stroke-width="4.6"/>
<path d="M334.38,33.60 L336.41,33.50 L338.43,33.19 L340.46,32.56 L342.48,31.46 L344.51,29.69 L346.53,27.14 L348.56,24.00 L350.58,20.86 L352.61,18.31 L354.63,16.54 L356.66,15.44 L358.68,14.81 L360.71,14.50 L362.74,14.40 L364.76,14.50 L366.79,14.81 L368.81,15.44 L370.84,16.54 L372.86,18.31 L374.89,20.86 L376.91,24.00 L378.94,27.14 L380.96,29.69 L382.99,31.46 L385.01,32.56 L387.04,33.19 L389.06,33.50 L391.09,33.60" fill="none" stroke="#ee640f" stroke-width="4.0"/>
<path d="M334.38,33.60 L336.41,33.50 L338.43,33.19 L340.46,32.56 L342.48,31.46 L344.51,29.69 L346.53,27.14 L348.56,24.00 L350.58,20.86 L352.61,18.31 L354.63,16.54 L356.66,15.44 L358.68,14.81 L360.71,14.50 L362.74,14.40 L364.76,14.50 L366.79,14.81 L368.81,15.44 L370.84,16.54 L372.86,18.31 L374.89,20.86 L376.91,24.00 L378.94,27.14 L380.96,29.69 L382.99,31.46 L385.01,32.56 L387.04,33.19 L389.06,33.50 L391.09,33.60" fill="none" stroke="#f7ac12" stroke-width="1.8"/>
<path d="M334.38,33.60 L336.41,33.50 L338.43,33.19 L340.46,32.56 L342.48,31.46 L344.51,29.69 L346.53,27.14 L348.56,24.00 L350.58,20.86 L352.61,18.31 L354.63,16.54 L356.66,15.44 L358.68,14.81 L360.71,14.50 L362.74,14.40 L364.76,14.50 L366.79,14.81 L368.81,15.44 L370.84,16.54 L372.86,18.31 L374.89,20.86 L376.91,24.00 L378.94,27.14 L380.96,29.69 L382.99,31.46 L385.01,32.56 L387.04,33.19 L389.06,33.50 L391.09,33.60" fill="none" stroke="#120804" stroke-width="13" stroke-dasharray="0.7 2.0" opacity="0.35"/>
<path d="M306.03,33.60 L308.05,33.50 L310.08,33.19 L312.11,32.56 L314.13,31.46 L316.16,29.69 L318.18,27.14 L320.21,24.00 L322.23,20.86 L324.26,18.31 L326.28,16.54 L328.31,15.44 L330.33,14.81 L332.36,14.50 L334.38,14.40 L336.41,14.50 L338.43,14.81 L340.46,15.44 L342.48,16.54 L344.51,18.31 L346.53,20.86 L348.56,24.00 L350.58,27.14 L352.61,29.69 L354.63,31.46 L356.66,32.56 L358.68,33.19 L360.71,33.50 L362.74,33.60" fill="none" stroke="#1f5cb4" stroke-width="14.5"/>
<path d="M306.03,33.60 L308.05,33.50 L310.08,33.19 L312.11,32.56 L314.13,31.46 L316.16,29.69 L318.18,27.14 L320.21,24.00 L322.23,20.86 L324.26,18.31 L326.28,16.54 L328.31,15.44 L330.33,14.81 L332.36,14.50 L334.38,14.40 L336.41,14.50 L338.43,14.81 L340.46,15.44 L342.48,16.54 L344.51,18.31 L346.53,20.86 L348.56,24.00 L350.58,27.14 L352.61,29.69 L354.63,31.46 L356.66,32.56 L358.68,33.19 L360.71,33.50 L362.74,33.60" fill="none" stroke="#1a0c04" stroke-width="9.6"/>
<path d="M306.03,33.60 L308.05,33.50 L310.08,33.19 L312.11,32.56 L314.13,31.46 L316.16,29.69 L318.18,27.14 L320.21,24.00 L322.23,20.86 L324.26,18.31 L326.28,16.54 L328.31,15.44 L330.33,14.81 L332.36,14.50 L334.38,14.40 L336.41,14.50 L338.43,14.81 L340.46,15.44 L342.48,16.54 L344.51,18.31 L346.53,20.86 L348.56,24.00 L350.58,27.14 L352.61,29.69 L354.63,31.46 L356.66,32.56 L358.68,33.19 L360.71,33.50 L362.74,33.60" fill="none" stroke="#ee640f" stroke-width="9.0"/>
<path d="M306.03,33.60 L308.05,33.50 L310.08,33.19 L312.11,32.56 L314.13,31.46 L316.16,29.69 L318.18,27.14 L320.21,24.00 L322.23,20.86 L324.26,18.31 L326.28,16.54 L328.31,15.44 L330.33,14.81 L332.36,14.50 L334.38,14.40 L336.41,14.50 L338.43,14.81 L340.46,15.44 L342.48,16.54 L344.51,18.31 L346.53,20.86 L348.56,24.00 L350.58,27.14 L352.61,29.69 L354.63,31.46 L356.66,32.56 L358.68,33.19 L360.71,33.50 L362.74,33.60" fill="none" stroke="#f7ac12" stroke-width="6.6"/>
<path d="M306.03,33.60 L308.05,33.50 L310.08,33.19 L312.11,32.56 L314.13,31.46 L316.16,29.69 L318.18,27.14 L320.21,24.00 L322.23,20.86 L324.26,18.31 L326.28,16.54 L328.31,15.44 L330.33,14.81 L332.36,14.50 L334.38,14.40 L336.41,14.50 L338.43,14.81 L340.46,15.44 L342.48,16.54 L344.51,18.31 L346.53,20.86 L348.56,24.00 L350.58,27.14 L352.61,29.69 L354.63,31.46 L356.66,32.56 L358.68,33.19 L360.71,33.50 L362.74,33.60" fill="none" stroke="#2a1004" stroke-width="4.6"/>
<path d="M306.03,33.60 L308.05,33.50 L310.08,33.19 L312.11,32.56 L314.13,31.46 L316.16,29.69 L318.18,27.14 L320.21,24.00 L322.23,20.86 L324.26,18.31 L326.28,16.54 L328.31,15.44 L330.33,14.81 L332.36,14.50 L334.38,14.40 L336.41,14.50 L338.43,14.81 L340.46,15.44 L342.48,16.54 L344.51,18.31 L346.53,20.86 L348.56,24.00 L350.58,27.14 L352.61,29.69 L354.63,31.46 L356.66,32.56 L358.68,33.19 L360.71,33.50 L362.74,33.60" fill="none" stroke="#ee640f" stroke-width="4.0"/>
<path d="M306.03,33.60 L308.05,33.50 L310.08,33.19 L312.11,32.56 L314.13,31.46 L316.16,29.69 L318.18,27.14 L320.21,24.00 L322.23,20.86 L324.26,18.31 L326.28,16.54 L328.31,15.44 L330.33,14.81 L332.36,14.50 L334.38,14.40 L336.41,14.50 L338.43,14.81 L340.46,15.44 L342.48,16.54 L344.51,18.31 L346.53,20.86 L348.56,24.00 L350.58,27.14 L352.61,29.69 L354.63,31.46 L356.66,32.56 L358.68,33.19 L360.71,33.50 L362.74,33.60" fill="none" stroke="#f7ac12" stroke-width="1.8"/>
<path d="M306.03,33.60 L308.05,33.50 L310.08,33.19 L312.11,32.56 L314.13,31.46 L316.16,29.69 L318.18,27.14 L320.21,24.00 L322.23,20.86 L324.26,18.31 L326.28,16.54 L328.31,15.44 L330.33,14.81 L332.36,14.50 L334.38,14.40 L336.41,14.50 L338.43,14.81 L340.46,15.44 L342.48,16.54 L344.51,18.31 L346.53,20.86 L348.56,24.00 L350.58,27.14 L352.61,29.69 L354.63,31.46 L356.66,32.56 L358.68,33.19 L360.71,33.50 L362.74,33.60" fill="none" stroke="#120804" stroke-width="13" stroke-dasharray="0.7 2.0" opacity="0.35"/>
<path d="M277.68,33.60 L279.70,33.50 L281.73,33.19 L283.75,32.56 L285.78,31.46 L287.80,29.69 L289.83,27.14 L291.85,24.00 L293.88,20.86 L295.90,18.31 L297.93,16.54 L299.95,15.44 L301.98,14.81 L304.00,14.50 L306.03,14.40 L308.05,14.50 L310.08,14.81 L312.11,15.44 L314.13,16.54 L316.16,18.31 L318.18,20.86 L320.21,24.00 L322.23,27.14 L324.26,29.69 L326.28,31.46 L328.31,32.56 L330.33,33.19 L332.36,33.50 L334.38,33.60" fill="none" stroke="#1f5cb4" stroke-width="14.5"/>
<path d="M277.68,33.60 L279.70,33.50 L281.73,33.19 L283.75,32.56 L285.78,31.46 L287.80,29.69 L289.83,27.14 L291.85,24.00 L293.88,20.86 L295.90,18.31 L297.93,16.54 L299.95,15.44 L301.98,14.81 L304.00,14.50 L306.03,14.40 L308.05,14.50 L310.08,14.81 L312.11,15.44 L314.13,16.54 L316.16,18.31 L318.18,20.86 L320.21,24.00 L322.23,27.14 L324.26,29.69 L326.28,31.46 L328.31,32.56 L330.33,33.19 L332.36,33.50 L334.38,33.60" fill="none" stroke="#1a0c04" stroke-width="9.6"/>
<path d="M277.68,33.60 L279.70,33.50 L281.73,33.19 L283.75,32.56 L285.78,31.46 L287.80,29.69 L289.83,27.14 L291.85,24.00 L293.88,20.86 L295.90,18.31 L297.93,16.54 L299.95,15.44 L301.98,14.81 L304.00,14.50 L306.03,14.40 L308.05,14.50 L310.08,14.81 L312.11,15.44 L314.13,16.54 L316.16,18.31 L318.18,20.86 L320.21,24.00 L322.23,27.14 L324.26,29.69 L326.28,31.46 L328.31,32.56 L330.33,33.19 L332.36,33.50 L334.38,33.60" fill="none" stroke="#ee640f" stroke-width="9.0"/>
<path d="M277.68,33.60 L279.70,33.50 L281.73,33.19 L283.75,32.56 L285.78,31.46 L287.80,29.69 L289.83,27.14 L291.85,24.00 L293.88,20.86 L295.90,18.31 L297.93,16.54 L299.95,15.44 L301.98,14.81 L304.00,14.50 L306.03,14.40 L308.05,14.50 L310.08,14.81 L312.11,15.44 L314.13,16.54 L316.16,18.31 L318.18,20.86 L320.21,24.00 L322.23,27.14 L324.26,29.69 L326.28,31.46 L328.31,32.56 L330.33,33.19 L332.36,33.50 L334.38,33.60" fill="none" stroke="#f7ac12" stroke-width="6.6"/>
<path d="M277.68,33.60 L279.70,33.50 L281.73,33.19 L283.75,32.56 L285.78,31.46 L287.80,29.69 L289.83,27.14 L291.85,24.00 L293.88,20.86 L295.90,18.31 L297.93,16.54 L299.95,15.44 L301.98,14.81 L304.00,14.50 L306.03,14.40 L308.05,14.50 L310.08,14.81 L312.11,15.44 L314.13,16.54 L316.16,18.31 L318.18,20.86 L320.21,24.00 L322.23,27.14 L324.26,29.69 L326.28,31.46 L328.31,32.56 L330.33,33.19 L332.36,33.50 L334.38,33.60" fill="none" stroke="#2a1004" stroke-width="4.6"/>
<path d="M277.68,33.60 L279.70,33.50 L281.73,33.19 L283.75,32.56 L285.78,31.46 L287.80,29.69 L289.83,27.14 L291.85,24.00 L293.88,20.86 L295.90,18.31 L297.93,16.54 L299.95,15.44 L301.98,14.81 L304.00,14.50 L306.03,14.40 L308.05,14.50 L310.08,14.81 L312.11,15.44 L314.13,16.54 L316.16,18.31 L318.18,20.86 L320.21,24.00 L322.23,27.14 L324.26,29.69 L326.28,31.46 L328.31,32.56 L330.33,33.19 L332.36,33.50 L334.38,33.60" fill="none" stroke="#ee640f" stroke-width="4.0"/>
<path d="M277.68,33.60 L279.70,33.50 L281.73,33.19 L283.75,32.56 L285.78,31.46 L287.80,29.69 L289.83,27.14 L291.85,24.00 L293.88,20.86 L295.90,18.31 L297.93,16.54 L299.95,15.44 L301.98,14.81 L304.00,14.50 L306.03,14.40 L308.05,14.50 L310.08,14.81 L312.11,15.44 L314.13,16.54 L316.16,18.31 L318.18,20.86 L320.21,24.00 L322.23,27.14 L324.26,29.69 L326.28,31.46 L328.31,32.56 L330.33,33.19 L332.36,33.50 L334.38,33.60" fill="none" stroke="#f7ac12" stroke-width="1.8"/>
<path d="M277.68,33.60 L279.70,33.50 L281.73,33.19 L283.75,32.56 L285.78,31.46 L287.80,29.69 L289.83,27.14 L291.85,24.00 L293.88,20.86 L295.90,18.31 L297.93,16.54 L299.95,15.44 L301.98,14.81 L304.00,14.50 L306.03,14.40 L308.05,14.50 L310.08,14.81 L312.11,15.44 L314.13,16.54 L316.16,18.31 L318.18,20.86 L320.21,24.00 L322.23,27.14 L324.26,29.69 L326.28,31.46 L328.31,32.56 L330.33,33.19 L332.36,33.50 L334.38,33.60" fill="none" stroke="#120804" stroke-width="13" stroke-dasharray="0.7 2.0" opacity="0.35"/>
<path d="M249.32,33.60 L251.35,33.50 L253.37,33.19 L255.40,32.56 L257.42,31.46 L259.45,29.69 L261.47,27.14 L263.50,24.00 L265.53,20.86 L267.55,18.31 L269.58,16.54 L271.60,15.44 L273.63,14.81 L275.65,14.50 L277.68,14.40 L279.70,14.50 L281.73,14.81 L283.75,15.44 L285.78,16.54 L287.80,18.31 L289.83,20.86 L291.85,24.00 L293.88,27.14 L295.90,29.69 L297.93,31.46 L299.95,32.56 L301.98,33.19 L304.00,33.50 L306.03,33.60" fill="none" stroke="#1f5cb4" stroke-width="14.5"/>
<path d="M249.32,33.60 L251.35,33.50 L253.37,33.19 L255.40,32.56 L257.42,31.46 L259.45,29.69 L261.47,27.14 L263.50,24.00 L265.53,20.86 L267.55,18.31 L269.58,16.54 L271.60,15.44 L273.63,14.81 L275.65,14.50 L277.68,14.40 L279.70,14.50 L281.73,14.81 L283.75,15.44 L285.78,16.54 L287.80,18.31 L289.83,20.86 L291.85,24.00 L293.88,27.14 L295.90,29.69 L297.93,31.46 L299.95,32.56 L301.98,33.19 L304.00,33.50 L306.03,33.60" fill="none" stroke="#1a0c04" stroke-width="9.6"/>
<path d="M249.32,33.60 L251.35,33.50 L253.37,33.19 L255.40,32.56 L257.42,31.46 L259.45,29.69 L261.47,27.14 L263.50,24.00 L265.53,20.86 L267.55,18.31 L269.58,16.54 L271.60,15.44 L273.63,14.81 L275.65,14.50 L277.68,14.40 L279.70,14.50 L281.73,14.81 L283.75,15.44 L285.78,16.54 L287.80,18.31 L289.83,20.86 L291.85,24.00 L293.88,27.14 L295.90,29.69 L297.93,31.46 L299.95,32.56 L301.98,33.19 L304.00,33.50 L306.03,33.60" fill="none" stroke="#ee640f" stroke-width="9.0"/>
<path d="M249.32,33.60 L251.35,33.50 L253.37,33.19 L255.40,32.56 L257.42,31.46 L259.45,29.69 L261.47,27.14 L263.50,24.00 L265.53,20.86 L267.55,18.31 L269.58,16.54 L271.60,15.44 L273.63,14.81 L275.65,14.50 L277.68,14.40 L279.70,14.50 L281.73,14.81 L283.75,15.44 L285.78,16.54 L287.80,18.31 L289.83,20.86 L291.85,24.00 L293.88,27.14 L295.90,29.69 L297.93,31.46 L299.95,32.56 L301.98,33.19 L304.00,33.50 L306.03,33.60" fill="none" stroke="#f7ac12" stroke-width="6.6"/>
<path d="M249.32,33.60 L251.35,33.50 L253.37,33.19 L255.40,32.56 L257.42,31.46 L259.45,29.69 L261.47,27.14 L263.50,24.00 L265.53,20.86 L267.55,18.31 L269.58,16.54 L271.60,15.44 L273.63,14.81 L275.65,14.50 L277.68,14.40 L279.70,14.50 L281.73,14.81 L283.75,15.44 L285.78,16.54 L287.80,18.31 L289.83,20.86 L291.85,24.00 L293.88,27.14 L295.90,29.69 L297.93,31.46 L299.95,32.56 L301.98,33.19 L304.00,33.50 L306.03,33.60" fill="none" stroke="#2a1004" stroke-width="4.6"/>
<path d="M249.32,33.60 L251.35,33.50 L253.37,33.19 L255.40,32.56 L257.42,31.46 L259.45,29.69 L261.47,27.14 L263.50,24.00 L265.53,20.86 L267.55,18.31 L269.58,16.54 L271.60,15.44 L273.63,14.81 L275.65,14.50 L277.68,14.40 L279.70,14.50 L281.73,14.81 L283.75,15.44 L285.78,16.54 L287.80,18.31 L289.83,20.86 L291.85,24.00 L293.88,27.14 L295.90,29.69 L297.93,31.46 L299.95,32.56 L301.98,33.19 L304.00,33.50 L306.03,33.60" fill="none" stroke="#ee640f" stroke-width="4.0"/>
<path d="M249.32,33.60 L251.35,33.50 L253.37,33.19 L255.40,32.56 L257.42,31.46 L259.45,29.69 L261.47,27.14 L263.50,24.00 L265.53,20.86 L267.55,18.31 L269.58,16.54 L271.60,15.44 L273.63,14.81 L275.65,14.50 L277.68,14.40 L279.70,14.50 L281.73,14.81 L283.75,15.44 L285.78,16.54 L287.80,18.31 L289.83,20.86 L291.85,24.00 L293.88,27.14 L295.90,29.69 L297.93,31.46 L299.95,32.56 L301.98,33.19 L304.00,33.50 L306.03,33.60" fill="none" stroke="#f7ac12" stroke-width="1.8"/>
<path d="M249.32,33.60 L251.35,33.50 L253.37,33.19 L255.40,32.56 L257.42,31.46 L259.45,29.69 L261.47,27.14 L263.50,24.00 L265.53,20.86 L267.55,18.31 L269.58,16.54 L271.60,15.44 L273.63,14.81 L275.65,14.50 L277.68,14.40 L279.70,14.50 L281.73,14.81 L283.75,15.44 L285.78,16.54 L287.80,18.31 L289.83,20.86 L291.85,24.00 L293.88,27.14 L295.90,29.69 L297.93,31.46 L299.95,32.56 L301.98,33.19 L304.00,33.50 L306.03,33.60" fill="none" stroke="#120804" stroke-width="13" stroke-dasharray="0.7 2.0" opacity="0.35"/>
<path d="M220.97,33.60 L223.00,33.50 L225.02,33.19 L227.05,32.56 L229.07,31.46 L231.10,29.69 L233.12,27.14 L235.15,24.00 L237.17,20.86 L239.20,18.31 L241.22,16.54 L243.25,15.44 L245.27,14.81 L247.30,14.50 L249.32,14.40 L251.35,14.50 L253.37,14.81 L255.40,15.44 L257.42,16.54 L259.45,18.31 L261.47,20.86 L263.50,24.00 L265.53,27.14 L267.55,29.69 L269.58,31.46 L271.60,32.56 L273.63,33.19 L275.65,33.50 L277.68,33.60" fill="none" stroke="#1f5cb4" stroke-width="14.5"/>
<path d="M220.97,33.60 L223.00,33.50 L225.02,33.19 L227.05,32.56 L229.07,31.46 L231.10,29.69 L233.12,27.14 L235.15,24.00 L237.17,20.86 L239.20,18.31 L241.22,16.54 L243.25,15.44 L245.27,14.81 L247.30,14.50 L249.32,14.40 L251.35,14.50 L253.37,14.81 L255.40,15.44 L257.42,16.54 L259.45,18.31 L261.47,20.86 L263.50,24.00 L265.53,27.14 L267.55,29.69 L269.58,31.46 L271.60,32.56 L273.63,33.19 L275.65,33.50 L277.68,33.60" fill="none" stroke="#1a0c04" stroke-width="9.6"/>
<path d="M220.97,33.60 L223.00,33.50 L225.02,33.19 L227.05,32.56 L229.07,31.46 L231.10,29.69 L233.12,27.14 L235.15,24.00 L237.17,20.86 L239.20,18.31 L241.22,16.54 L243.25,15.44 L245.27,14.81 L247.30,14.50 L249.32,14.40 L251.35,14.50 L253.37,14.81 L255.40,15.44 L257.42,16.54 L259.45,18.31 L261.47,20.86 L263.50,24.00 L265.53,27.14 L267.55,29.69 L269.58,31.46 L271.60,32.56 L273.63,33.19 L275.65,33.50 L277.68,33.60" fill="none" stroke="#ee640f" stroke-width="9.0"/>
<path d="M220.97,33.60 L223.00,33.50 L225.02,33.19 L227.05,32.56 L229.07,31.46 L231.10,29.69 L233.12,27.14 L235.15,24.00 L237.17,20.86 L239.20,18.31 L241.22,16.54 L243.25,15.44 L245.27,14.81 L247.30,14.50 L249.32,14.40 L251.35,14.50 L253.37,14.81 L255.40,15.44 L257.42,16.54 L259.45,18.31 L261.47,20.86 L263.50,24.00 L265.53,27.14 L267.55,29.69 L269.58,31.46 L271.60,32.56 L273.63,33.19 L275.65,33.50 L277.68,33.60" fill="none" stroke="#f7ac12" stroke-width="6.6"/>
<path d="M220.97,33.60 L223.00,33.50 L225.02,33.19 L227.05,32.56 L229.07,31.46 L231.10,29.69 L233.12,27.14 L235.15,24.00 L237.17,20.86 L239.20,18.31 L241.22,16.54 L243.25,15.44 L245.27,14.81 L247.30,14.50 L249.32,14.40 L251.35,14.50 L253.37,14.81 L255.40,15.44 L257.42,16.54 L259.45,18.31 L261.47,20.86 L263.50,24.00 L265.53,27.14 L267.55,29.69 L269.58,31.46 L271.60,32.56 L273.63,33.19 L275.65,33.50 L277.68,33.60" fill="none" stroke="#2a1004" stroke-width="4.6"/>
<path d="M220.97,33.60 L223.00,33.50 L225.02,33.19 L227.05,32.56 L229.07,31.46 L231.10,29.69 L233.12,27.14 L235.15,24.00 L237.17,20.86 L239.20,18.31 L241.22,16.54 L243.25,15.44 L245.27,14.81 L247.30,14.50 L249.32,14.40 L251.35,14.50 L253.37,14.81 L255.40,15.44 L257.42,16.54 L259.45,18.31 L261.47,20.86 L263.50,24.00 L265.53,27.14 L267.55,29.69 L269.58,31.46 L271.60,32.56 L273.63,33.19 L275.65,33.50 L277.68,33.60" fill="none" stroke="#ee640f" stroke-width="4.0"/>
<path d="M220.97,33.60 L223.00,33.50 L225.02,33.19 L227.05,32.56 L229.07,31.46 L231.10,29.69 L233.12,27.14 L235.15,24.00 L237.17,20.86 L239.20,18.31 L241.22,16.54 L243.25,15.44 L245.27,14.81 L247.30,14.50 L249.32,14.40 L251.35,14.50 L253.37,14.81 L255.40,15.44 L257.42,16.54 L259.45,18.31 L261.47,20.86 L263.50,24.00 L265.53,27.14 L267.55,29.69 L269.58,31.46 L271.60,32.56 L273.63,33.19 L275.65,33.50 L277.68,33.60" fill="none" stroke="#f7ac12" stroke-width="1.8"/>
<path d="M220.97,33.60 L223.00,33.50 L225.02,33.19 L227.05,32.56 L229.07,31.46 L231.10,29.69 L233.12,27.14 L235.15,24.00 L237.17,20.86 L239.20,18.31 L241.22,16.54 L243.25,15.44 L245.27,14.81 L247.30,14.50 L249.32,14.40 L251.35,14.50 L253.37,14.81 L255.40,15.44 L257.42,16.54 L259.45,18.31 L261.47,20.86 L263.50,24.00 L265.53,27.14 L267.55,29.69 L269.58,31.46 L271.60,32.56 L273.63,33.19 L275.65,33.50 L277.68,33.60" fill="none" stroke="#120804" stroke-width="13" stroke-dasharray="0.7 2.0" opacity="0.35"/>
<path d="M192.62,33.60 L194.64,33.50 L196.67,33.19 L198.69,32.56 L200.72,31.46 L202.74,29.69 L204.77,27.14 L206.79,24.00 L208.82,20.86 L210.84,18.31 L212.87,16.54 L214.89,15.44 L216.92,14.81 L218.95,14.50 L220.97,14.40 L223.00,14.50 L225.02,14.81 L227.05,15.44 L229.07,16.54 L231.10,18.31 L233.12,20.86 L235.15,24.00 L237.17,27.14 L239.20,29.69 L241.22,31.46 L243.25,32.56 L245.27,33.19 L247.30,33.50 L249.32,33.60" fill="none" stroke="#1f5cb4" stroke-width="14.5"/>
<path d="M192.62,33.60 L194.64,33.50 L196.67,33.19 L198.69,32.56 L200.72,31.46 L202.74,29.69 L204.77,27.14 L206.79,24.00 L208.82,20.86 L210.84,18.31 L212.87,16.54 L214.89,15.44 L216.92,14.81 L218.95,14.50 L220.97,14.40 L223.00,14.50 L225.02,14.81 L227.05,15.44 L229.07,16.54 L231.10,18.31 L233.12,20.86 L235.15,24.00 L237.17,27.14 L239.20,29.69 L241.22,31.46 L243.25,32.56 L245.27,33.19 L247.30,33.50 L249.32,33.60" fill="none" stroke="#1a0c04" stroke-width="9.6"/>
<path d="M192.62,33.60 L194.64,33.50 L196.67,33.19 L198.69,32.56 L200.72,31.46 L202.74,29.69 L204.77,27.14 L206.79,24.00 L208.82,20.86 L210.84,18.31 L212.87,16.54 L214.89,15.44 L216.92,14.81 L218.95,14.50 L220.97,14.40 L223.00,14.50 L225.02,14.81 L227.05,15.44 L229.07,16.54 L231.10,18.31 L233.12,20.86 L235.15,24.00 L237.17,27.14 L239.20,29.69 L241.22,31.46 L243.25,32.56 L245.27,33.19 L247.30,33.50 L249.32,33.60" fill="none" stroke="#ee640f" stroke-width="9.0"/>
<path d="M192.62,33.60 L194.64,33.50 L196.67,33.19 L198.69,32.56 L200.72,31.46 L202.74,29.69 L204.77,27.14 L206.79,24.00 L208.82,20.86 L210.84,18.31 L212.87,16.54 L214.89,15.44 L216.92,14.81 L218.95,14.50 L220.97,14.40 L223.00,14.50 L225.02,14.81 L227.05,15.44 L229.07,16.54 L231.10,18.31 L233.12,20.86 L235.15,24.00 L237.17,27.14 L239.20,29.69 L241.22,31.46 L243.25,32.56 L245.27,33.19 L247.30,33.50 L249.32,33.60" fill="none" stroke="#f7ac12" stroke-width="6.6"/>
<path d="M192.62,33.60 L194.64,33.50 L196.67,33.19 L198.69,32.56 L200.72,31.46 L202.74,29.69 L204.77,27.14 L206.79,24.00 L208.82,20.86 L210.84,18.31 L212.87,16.54 L214.89,15.44 L216.92,14.81 L218.95,14.50 L220.97,14.40 L223.00,14.50 L225.02,14.81 L227.05,15.44 L229.07,16.54 L231.10,18.31 L233.12,20.86 L235.15,24.00 L237.17,27.14 L239.20,29.69 L241.22,31.46 L243.25,32.56 L245.27,33.19 L247.30,33.50 L249.32,33.60" fill="none" stroke="#2a1004" stroke-width="4.6"/>
<path d="M192.62,33.60 L194.64,33.50 L196.67,33.19 L198.69,32.56 L200.72,31.46 L202.74,29.69 L204.77,27.14 L206.79,24.00 L208.82,20.86 L210.84,18.31 L212.87,16.54 L214.89,15.44 L216.92,14.81 L218.95,14.50 L220.97,14.40 L223.00,14.50 L225.02,14.81 L227.05,15.44 L229.07,16.54 L231.10,18.31 L233.12,20.86 L235.15,24.00 L237.17,27.14 L239.20,29.69 L241.22,31.46 L243.25,32.56 L245.27,33.19 L247.30,33.50 L249.32,33.60" fill="none" stroke="#ee640f" stroke-width="4.0"/>
<path d="M192.62,33.60 L194.64,33.50 L196.67,33.19 L198.69,32.56 L200.72,31.46 L202.74,29.69 L204.77,27.14 L206.79,24.00 L208.82,20.86 L210.84,18.31 L212.87,16.54 L214.89,15.44 L216.92,14.81 L218.95,14.50 L220.97,14.40 L223.00,14.50 L225.02,14.81 L227.05,15.44 L229.07,16.54 L231.10,18.31 L233.12,20.86 L235.15,24.00 L237.17,27.14 L239.20,29.69 L241.22,31.46 L243.25,32.56 L245.27,33.19 L247.30,33.50 L249.32,33.60" fill="none" stroke="#f7ac12" stroke-width="1.8"/>
<path d="M192.62,33.60 L194.64,33.50 L196.67,33.19 L198.69,32.56 L200.72,31.46 L202.74,29.69 L204.77,27.14 L206.79,24.00 L208.82,20.86 L210.84,18.31 L212.87,16.54 L214.89,15.44 L216.92,14.81 L218.95,14.50 L220.97,14.40 L223.00,14.50 L225.02,14.81 L227.05,15.44 L229.07,16.54 L231.10,18.31 L233.12,20.86 L235.15,24.00 L237.17,27.14 L239.20,29.69 L241.22,31.46 L243.25,32.56 L245.27,33.19 L247.30,33.50 L249.32,33.60" fill="none" stroke="#120804" stroke-width="13" stroke-dasharray="0.7 2.0" opacity="0.35"/>
<path d="M164.26,33.60 L166.29,33.50 L168.32,33.19 L170.34,32.56 L172.37,31.46 L174.39,29.69 L176.42,27.14 L178.44,24.00 L180.47,20.86 L182.49,18.31 L184.52,16.54 L186.54,15.44 L188.57,14.81 L190.59,14.50 L192.62,14.40 L194.64,14.50 L196.67,14.81 L198.69,15.44 L200.72,16.54 L202.74,18.31 L204.77,20.86 L206.79,24.00 L208.82,27.14 L210.84,29.69 L212.87,31.46 L214.89,32.56 L216.92,33.19 L218.95,33.50 L220.97,33.60" fill="none" stroke="#1f5cb4" stroke-width="14.5"/>
<path d="M164.26,33.60 L166.29,33.50 L168.32,33.19 L170.34,32.56 L172.37,31.46 L174.39,29.69 L176.42,27.14 L178.44,24.00 L180.47,20.86 L182.49,18.31 L184.52,16.54 L186.54,15.44 L188.57,14.81 L190.59,14.50 L192.62,14.40 L194.64,14.50 L196.67,14.81 L198.69,15.44 L200.72,16.54 L202.74,18.31 L204.77,20.86 L206.79,24.00 L208.82,27.14 L210.84,29.69 L212.87,31.46 L214.89,32.56 L216.92,33.19 L218.95,33.50 L220.97,33.60" fill="none" stroke="#1a0c04" stroke-width="9.6"/>
<path d="M164.26,33.60 L166.29,33.50 L168.32,33.19 L170.34,32.56 L172.37,31.46 L174.39,29.69 L176.42,27.14 L178.44,24.00 L180.47,20.86 L182.49,18.31 L184.52,16.54 L186.54,15.44 L188.57,14.81 L190.59,14.50 L192.62,14.40 L194.64,14.50 L196.67,14.81 L198.69,15.44 L200.72,16.54 L202.74,18.31 L204.77,20.86 L206.79,24.00 L208.82,27.14 L210.84,29.69 L212.87,31.46 L214.89,32.56 L216.92,33.19 L218.95,33.50 L220.97,33.60" fill="none" stroke="#ee640f" stroke-width="9.0"/>
<path d="M164.26,33.60 L166.29,33.50 L168.32,33.19 L170.34,32.56 L172.37,31.46 L174.39,29.69 L176.42,27.14 L178.44,24.00 L180.47,20.86 L182.49,18.31 L184.52,16.54 L186.54,15.44 L188.57,14.81 L190.59,14.50 L192.62,14.40 L194.64,14.50 L196.67,14.81 L198.69,15.44 L200.72,16.54 L202.74,18.31 L204.77,20.86 L206.79,24.00 L208.82,27.14 L210.84,29.69 L212.87,31.46 L214.89,32.56 L216.92,33.19 L218.95,33.50 L220.97,33.60" fill="none" stroke="#f7ac12" stroke-width="6.6"/>
<path d="M164.26,33.60 L166.29,33.50 L168.32,33.19 L170.34,32.56 L172.37,31.46 L174.39,29.69 L176.42,27.14 L178.44,24.00 L180.47,20.86 L182.49,18.31 L184.52,16.54 L186.54,15.44 L188.57,14.81 L190.59,14.50 L192.62,14.40 L194.64,14.50 L196.67,14.81 L198.69,15.44 L200.72,16.54 L202.74,18.31 L204.77,20.86 L206.79,24.00 L208.82,27.14 L210.84,29.69 L212.87,31.46 L214.89,32.56 L216.92,33.19 L218.95,33.50 L220.97,33.60" fill="none" stroke="#2a1004" stroke-width="4.6"/>
<path d="M164.26,33.60 L166.29,33.50 L168.32,33.19 L170.34,32.56 L172.37,31.46 L174.39,29.69 L176.42,27.14 L178.44,24.00 L180.47,20.86 L182.49,18.31 L184.52,16.54 L186.54,15.44 L188.57,14.81 L190.59,14.50 L192.62,14.40 L194.64,14.50 L196.67,14.81 L198.69,15.44 L200.72,16.54 L202.74,18.31 L204.77,20.86 L206.79,24.00 L208.82,27.14 L210.84,29.69 L212.87,31.46 L214.89,32.56 L216.92,33.19 L218.95,33.50 L220.97,33.60" fill="none" stroke="#ee640f" stroke-width="4.0"/>
<path d="M164.26,33.60 L166.29,33.50 L168.32,33.19 L170.34,32.56 L172.37,31.46 L174.39,29.69 L176.42,27.14 L178.44,24.00 L180.47,20.86 L182.49,18.31 L184.52,16.54 L186.54,15.44 L188.57,14.81 L190.59,14.50 L192.62,14.40 L194.64,14.50 L196.67,14.81 L198.69,15.44 L200.72,16.54 L202.74,18.31 L204.77,20.86 L206.79,24.00 L208.82,27.14 L210.84,29.69 L212.87,31.46 L214.89,32.56 L216.92,33.19 L218.95,33.50 L220.97,33.60" fill="none" stroke="#f7ac12" stroke-width="1.8"/>
<path d="M164.26,33.60 L166.29,33.50 L168.32,33.19 L170.34,32.56 L172.37,31.46 L174.39,29.69 L176.42,27.14 L178.44,24.00 L180.47,20.86 L182.49,18.31 L184.52,16.54 L186.54,15.44 L188.57,14.81 L190.59,14.50 L192.62,14.40 L194.64,14.50 L196.67,14.81 L198.69,15.44 L200.72,16.54 L202.74,18.31 L204.77,20.86 L206.79,24.00 L208.82,27.14 L210.84,29.69 L212.87,31.46 L214.89,32.56 L216.92,33.19 L218.95,33.50 L220.97,33.60" fill="none" stroke="#120804" stroke-width="13" stroke-dasharray="0.7 2.0" opacity="0.35"/>
<path d="M135.91,33.60 L137.94,33.50 L139.96,33.19 L141.99,32.56 L144.01,31.46 L146.04,29.69 L148.06,27.14 L150.09,24.00 L152.11,20.86 L154.14,18.31 L156.16,16.54 L158.19,15.44 L160.21,14.81 L162.24,14.50 L164.26,14.40 L166.29,14.50 L168.32,14.81 L170.34,15.44 L172.37,16.54 L174.39,18.31 L176.42,20.86 L178.44,24.00 L180.47,27.14 L182.49,29.69 L184.52,31.46 L186.54,32.56 L188.57,33.19 L190.59,33.50 L192.62,33.60" fill="none" stroke="#1f5cb4" stroke-width="14.5"/>
<path d="M135.91,33.60 L137.94,33.50 L139.96,33.19 L141.99,32.56 L144.01,31.46 L146.04,29.69 L148.06,27.14 L150.09,24.00 L152.11,20.86 L154.14,18.31 L156.16,16.54 L158.19,15.44 L160.21,14.81 L162.24,14.50 L164.26,14.40 L166.29,14.50 L168.32,14.81 L170.34,15.44 L172.37,16.54 L174.39,18.31 L176.42,20.86 L178.44,24.00 L180.47,27.14 L182.49,29.69 L184.52,31.46 L186.54,32.56 L188.57,33.19 L190.59,33.50 L192.62,33.60" fill="none" stroke="#1a0c04" stroke-width="9.6"/>
<path d="M135.91,33.60 L137.94,33.50 L139.96,33.19 L141.99,32.56 L144.01,31.46 L146.04,29.69 L148.06,27.14 L150.09,24.00 L152.11,20.86 L154.14,18.31 L156.16,16.54 L158.19,15.44 L160.21,14.81 L162.24,14.50 L164.26,14.40 L166.29,14.50 L168.32,14.81 L170.34,15.44 L172.37,16.54 L174.39,18.31 L176.42,20.86 L178.44,24.00 L180.47,27.14 L182.49,29.69 L184.52,31.46 L186.54,32.56 L188.57,33.19 L190.59,33.50 L192.62,33.60" fill="none" stroke="#ee640f" stroke-width="9.0"/>
<path d="M135.91,33.60 L137.94,33.50 L139.96,33.19 L141.99,32.56 L144.01,31.46 L146.04,29.69 L148.06,27.14 L150.09,24.00 L152.11,20.86 L154.14,18.31 L156.16,16.54 L158.19,15.44 L160.21,14.81 L162.24,14.50 L164.26,14.40 L166.29,14.50 L168.32,14.81 L170.34,15.44 L172.37,16.54 L174.39,18.31 L176.42,20.86 L178.44,24.00 L180.47,27.14 L182.49,29.69 L184.52,31.46 L186.54,32.56 L188.57,33.19 L190.59,33.50 L192.62,33.60" fill="none" stroke="#f7ac12" stroke-width="6.6"/>
<path d="M135.91,33.60 L137.94,33.50 L139.96,33.19 L141.99,32.56 L144.01,31.46 L146.04,29.69 L148.06,27.14 L150.09,24.00 L152.11,20.86 L154.14,18.31 L156.16,16.54 L158.19,15.44 L160.21,14.81 L162.24,14.50 L164.26,14.40 L166.29,14.50 L168.32,14.81 L170.34,15.44 L172.37,16.54 L174.39,18.31 L176.42,20.86 L178.44,24.00 L180.47,27.14 L182.49,29.69 L184.52,31.46 L186.54,32.56 L188.57,33.19 L190.59,33.50 L192.62,33.60" fill="none" stroke="#2a1004" stroke-width="4.6"/>
<path d="M135.91,33.60 L137.94,33.50 L139.96,33.19 L141.99,32.56 L144.01,31.46 L146.04,29.69 L148.06,27.14 L150.09,24.00 L152.11,20.86 L154.14,18.31 L156.16,16.54 L158.19,15.44 L160.21,14.81 L162.24,14.50 L164.26,14.40 L166.29,14.50 L168.32,14.81 L170.34,15.44 L172.37,16.54 L174.39,18.31 L176.42,20.86 L178.44,24.00 L180.47,27.14 L182.49,29.69 L184.52,31.46 L186.54,32.56 L188.57,33.19 L190.59,33.50 L192.62,33.60" fill="none" stroke="#ee640f" stroke-width="4.0"/>
<path d="M135.91,33.60 L137.94,33.50 L139.96,33.19 L141.99,32.56 L144.01,31.46 L146.04,29.69 L148.06,27.14 L150.09,24.00 L152.11,20.86 L154.14,18.31 L156.16,16.54 L158.19,15.44 L160.21,14.81 L162.24,14.50 L164.26,14.40 L166.29,14.50 L168.32,14.81 L170.34,15.44 L172.37,16.54 L174.39,18.31 L176.42,20.86 L178.44,24.00 L180.47,27.14 L182.49,29.69 L184.52,31.46 L186.54,32.56 L188.57,33.19 L190.59,33.50 L192.62,33.60" fill="none" stroke="#f7ac12" stroke-width="1.8"/>
<path d="M135.91,33.60 L137.94,33.50 L139.96,33.19 L141.99,32.56 L144.01,31.46 L146.04,29.69 L148.06,27.14 L150.09,24.00 L152.11,20.86 L154.14,18.31 L156.16,16.54 L158.19,15.44 L160.21,14.81 L162.24,14.50 L164.26,14.40 L166.29,14.50 L168.32,14.81 L170.34,15.44 L172.37,16.54 L174.39,18.31 L176.42,20.86 L178.44,24.00 L180.47,27.14 L182.49,29.69 L184.52,31.46 L186.54,32.56 L188.57,33.19 L190.59,33.50 L192.62,33.60" fill="none" stroke="#120804" stroke-width="13" stroke-dasharray="0.7 2.0" opacity="0.35"/>
<path d="M107.56,33.60 L109.58,33.50 L111.61,33.19 L113.63,32.56 L115.66,31.46 L117.68,29.69 L119.71,27.14 L121.74,24.00 L123.76,20.86 L125.79,18.31 L127.81,16.54 L129.84,15.44 L131.86,14.81 L133.89,14.50 L135.91,14.40 L137.94,14.50 L139.96,14.81 L141.99,15.44 L144.01,16.54 L146.04,18.31 L148.06,20.86 L150.09,24.00 L152.11,27.14 L154.14,29.69 L156.16,31.46 L158.19,32.56 L160.21,33.19 L162.24,33.50 L164.26,33.60" fill="none" stroke="#1f5cb4" stroke-width="14.5"/>
<path d="M107.56,33.60 L109.58,33.50 L111.61,33.19 L113.63,32.56 L115.66,31.46 L117.68,29.69 L119.71,27.14 L121.74,24.00 L123.76,20.86 L125.79,18.31 L127.81,16.54 L129.84,15.44 L131.86,14.81 L133.89,14.50 L135.91,14.40 L137.94,14.50 L139.96,14.81 L141.99,15.44 L144.01,16.54 L146.04,18.31 L148.06,20.86 L150.09,24.00 L152.11,27.14 L154.14,29.69 L156.16,31.46 L158.19,32.56 L160.21,33.19 L162.24,33.50 L164.26,33.60" fill="none" stroke="#1a0c04" stroke-width="9.6"/>
<path d="M107.56,33.60 L109.58,33.50 L111.61,33.19 L113.63,32.56 L115.66,31.46 L117.68,29.69 L119.71,27.14 L121.74,24.00 L123.76,20.86 L125.79,18.31 L127.81,16.54 L129.84,15.44 L131.86,14.81 L133.89,14.50 L135.91,14.40 L137.94,14.50 L139.96,14.81 L141.99,15.44 L144.01,16.54 L146.04,18.31 L148.06,20.86 L150.09,24.00 L152.11,27.14 L154.14,29.69 L156.16,31.46 L158.19,32.56 L160.21,33.19 L162.24,33.50 L164.26,33.60" fill="none" stroke="#ee640f" stroke-width="9.0"/>
<path d="M107.56,33.60 L109.58,33.50 L111.61,33.19 L113.63,32.56 L115.66,31.46 L117.68,29.69 L119.71,27.14 L121.74,24.00 L123.76,20.86 L125.79,18.31 L127.81,16.54 L129.84,15.44 L131.86,14.81 L133.89,14.50 L135.91,14.40 L137.94,14.50 L139.96,14.81 L141.99,15.44 L144.01,16.54 L146.04,18.31 L148.06,20.86 L150.09,24.00 L152.11,27.14 L154.14,29.69 L156.16,31.46 L158.19,32.56 L160.21,33.19 L162.24,33.50 L164.26,33.60" fill="none" stroke="#f7ac12" stroke-width="6.6"/>
<path d="M107.56,33.60 L109.58,33.50 L111.61,33.19 L113.63,32.56 L115.66,31.46 L117.68,29.69 L119.71,27.14 L121.74,24.00 L123.76,20.86 L125.79,18.31 L127.81,16.54 L129.84,15.44 L131.86,14.81 L133.89,14.50 L135.91,14.40 L137.94,14.50 L139.96,14.81 L141.99,15.44 L144.01,16.54 L146.04,18.31 L148.06,20.86 L150.09,24.00 L152.11,27.14 L154.14,29.69 L156.16,31.46 L158.19,32.56 L160.21,33.19 L162.24,33.50 L164.26,33.60" fill="none" stroke="#2a1004" stroke-width="4.6"/>
<path d="M107.56,33.60 L109.58,33.50 L111.61,33.19 L113.63,32.56 L115.66,31.46 L117.68,29.69 L119.71,27.14 L121.74,24.00 L123.76,20.86 L125.79,18.31 L127.81,16.54 L129.84,15.44 L131.86,14.81 L133.89,14.50 L135.91,14.40 L137.94,14.50 L139.96,14.81 L141.99,15.44 L144.01,16.54 L146.04,18.31 L148.06,20.86 L150.09,24.00 L152.11,27.14 L154.14,29.69 L156.16,31.46 L158.19,32.56 L160.21,33.19 L162.24,33.50 L164.26,33.60" fill="none" stroke="#ee640f" stroke-width="4.0"/>
<path d="M107.56,33.60 L109.58,33.50 L111.61,33.19 L113.63,32.56 L115.66,31.46 L117.68,29.69 L119.71,27.14 L121.74,24.00 L123.76,20.86 L125.79,18.31 L127.81,16.54 L129.84,15.44 L131.86,14.81 L133.89,14.50 L135.91,14.40 L137.94,14.50 L139.96,14.81 L141.99,15.44 L144.01,16.54 L146.04,18.31 L148.06,20.86 L150.09,24.00 L152.11,27.14 L154.14,29.69 L156.16,31.46 L158.19,32.56 L160.21,33.19 L162.24,33.50 L164.26,33.60" fill="none" stroke="#f7ac12" stroke-width="1.8"/>
<path d="M107.56,33.60 L109.58,33.50 L111.61,33.19 L113.63,32.56 L115.66,31.46 L117.68,29.69 L119.71,27.14 L121.74,24.00 L123.76,20.86 L125.79,18.31 L127.81,16.54 L129.84,15.44 L131.86,14.81 L133.89,14.50 L135.91,14.40 L137.94,14.50 L139.96,14.81 L141.99,15.44 L144.01,16.54 L146.04,18.31 L148.06,20.86 L150.09,24.00 L152.11,27.14 L154.14,29.69 L156.16,31.46 L158.19,32.56 L160.21,33.19 L162.24,33.50 L164.26,33.60" fill="none" stroke="#120804" stroke-width="13" stroke-dasharray="0.7 2.0" opacity="0.35"/>
<path d="M79.21,33.60 L81.23,33.50 L83.26,33.19 L85.28,32.56 L87.31,31.46 L89.33,29.69 L91.36,27.14 L93.38,24.00 L95.41,20.86 L97.43,18.31 L99.46,16.54 L101.48,15.44 L103.51,14.81 L105.53,14.50 L107.56,14.40 L109.58,14.50 L111.61,14.81 L113.63,15.44 L115.66,16.54 L117.68,18.31 L119.71,20.86 L121.74,24.00 L123.76,27.14 L125.79,29.69 L127.81,31.46 L129.84,32.56 L131.86,33.19 L133.89,33.50 L135.91,33.60" fill="none" stroke="#1f5cb4" stroke-width="14.5"/>
<path d="M79.21,33.60 L81.23,33.50 L83.26,33.19 L85.28,32.56 L87.31,31.46 L89.33,29.69 L91.36,27.14 L93.38,24.00 L95.41,20.86 L97.43,18.31 L99.46,16.54 L101.48,15.44 L103.51,14.81 L105.53,14.50 L107.56,14.40 L109.58,14.50 L111.61,14.81 L113.63,15.44 L115.66,16.54 L117.68,18.31 L119.71,20.86 L121.74,24.00 L123.76,27.14 L125.79,29.69 L127.81,31.46 L129.84,32.56 L131.86,33.19 L133.89,33.50 L135.91,33.60" fill="none" stroke="#1a0c04" stroke-width="9.6"/>
<path d="M79.21,33.60 L81.23,33.50 L83.26,33.19 L85.28,32.56 L87.31,31.46 L89.33,29.69 L91.36,27.14 L93.38,24.00 L95.41,20.86 L97.43,18.31 L99.46,16.54 L101.48,15.44 L103.51,14.81 L105.53,14.50 L107.56,14.40 L109.58,14.50 L111.61,14.81 L113.63,15.44 L115.66,16.54 L117.68,18.31 L119.71,20.86 L121.74,24.00 L123.76,27.14 L125.79,29.69 L127.81,31.46 L129.84,32.56 L131.86,33.19 L133.89,33.50 L135.91,33.60" fill="none" stroke="#ee640f" stroke-width="9.0"/>
<path d="M79.21,33.60 L81.23,33.50 L83.26,33.19 L85.28,32.56 L87.31,31.46 L89.33,29.69 L91.36,27.14 L93.38,24.00 L95.41,20.86 L97.43,18.31 L99.46,16.54 L101.48,15.44 L103.51,14.81 L105.53,14.50 L107.56,14.40 L109.58,14.50 L111.61,14.81 L113.63,15.44 L115.66,16.54 L117.68,18.31 L119.71,20.86 L121.74,24.00 L123.76,27.14 L125.79,29.69 L127.81,31.46 L129.84,32.56 L131.86,33.19 L133.89,33.50 L135.91,33.60" fill="none" stroke="#f7ac12" stroke-width="6.6"/>
<path d="M79.21,33.60 L81.23,33.50 L83.26,33.19 L85.28,32.56 L87.31,31.46 L89.33,29.69 L91.36,27.14 L93.38,24.00 L95.41,20.86 L97.43,18.31 L99.46,16.54 L101.48,15.44 L103.51,14.81 L105.53,14.50 L107.56,14.40 L109.58,14.50 L111.61,14.81 L113.63,15.44 L115.66,16.54 L117.68,18.31 L119.71,20.86 L121.74,24.00 L123.76,27.14 L125.79,29.69 L127.81,31.46 L129.84,32.56 L131.86,33.19 L133.89,33.50 L135.91,33.60" fill="none" stroke="#2a1004" stroke-width="4.6"/>
<path d="M79.21,33.60 L81.23,33.50 L83.26,33.19 L85.28,32.56 L87.31,31.46 L89.33,29.69 L91.36,27.14 L93.38,24.00 L95.41,20.86 L97.43,18.31 L99.46,16.54 L101.48,15.44 L103.51,14.81 L105.53,14.50 L107.56,14.40 L109.58,14.50 L111.61,14.81 L113.63,15.44 L115.66,16.54 L117.68,18.31 L119.71,20.86 L121.74,24.00 L123.76,27.14 L125.79,29.69 L127.81,31.46 L129.84,32.56 L131.86,33.19 L133.89,33.50 L135.91,33.60" fill="none" stroke="#ee640f" stroke-width="4.0"/>
<path d="M79.21,33.60 L81.23,33.50 L83.26,33.19 L85.28,32.56 L87.31,31.46 L89.33,29.69 L91.36,27.14 L93.38,24.00 L95.41,20.86 L97.43,18.31 L99.46,16.54 L101.48,15.44 L103.51,14.81 L105.53,14.50 L107.56,14.40 L109.58,14.50 L111.61,14.81 L113.63,15.44 L115.66,16.54 L117.68,18.31 L119.71,20.86 L121.74,24.00 L123.76,27.14 L125.79,29.69 L127.81,31.46 L129.84,32.56 L131.86,33.19 L133.89,33.50 L135.91,33.60" fill="none" stroke="#f7ac12" stroke-width="1.8"/>
<path d="M79.21,33.60 L81.23,33.50 L83.26,33.19 L85.28,32.56 L87.31,31.46 L89.33,29.69 L91.36,27.14 L93.38,24.00 L95.41,20.86 L97.43,18.31 L99.46,16.54 L101.48,15.44 L103.51,14.81 L105.53,14.50 L107.56,14.40 L109.58,14.50 L111.61,14.81 L113.63,15.44 L115.66,16.54 L117.68,18.31 L119.71,20.86 L121.74,24.00 L123.76,27.14 L125.79,29.69 L127.81,31.46 L129.84,32.56 L131.86,33.19 L133.89,33.50 L135.91,33.60" fill="none" stroke="#120804" stroke-width="13" stroke-dasharray="0.7 2.0" opacity="0.35"/>
<path d="M50.85,33.60 L52.88,33.50 L54.90,33.19 L56.93,32.56 L58.95,31.46 L60.98,29.69 L63.00,27.14 L65.03,24.00 L67.05,20.86 L69.08,18.31 L71.11,16.54 L73.13,15.44 L75.16,14.81 L77.18,14.50 L79.21,14.40 L81.23,14.50 L83.26,14.81 L85.28,15.44 L87.31,16.54 L89.33,18.31 L91.36,20.86 L93.38,24.00 L95.41,27.14 L97.43,29.69 L99.46,31.46 L101.48,32.56 L103.51,33.19 L105.53,33.50 L107.56,33.60" fill="none" stroke="#1f5cb4" stroke-width="14.5"/>
<path d="M50.85,33.60 L52.88,33.50 L54.90,33.19 L56.93,32.56 L58.95,31.46 L60.98,29.69 L63.00,27.14 L65.03,24.00 L67.05,20.86 L69.08,18.31 L71.11,16.54 L73.13,15.44 L75.16,14.81 L77.18,14.50 L79.21,14.40 L81.23,14.50 L83.26,14.81 L85.28,15.44 L87.31,16.54 L89.33,18.31 L91.36,20.86 L93.38,24.00 L95.41,27.14 L97.43,29.69 L99.46,31.46 L101.48,32.56 L103.51,33.19 L105.53,33.50 L107.56,33.60" fill="none" stroke="#1a0c04" stroke-width="9.6"/>
<path d="M50.85,33.60 L52.88,33.50 L54.90,33.19 L56.93,32.56 L58.95,31.46 L60.98,29.69 L63.00,27.14 L65.03,24.00 L67.05,20.86 L69.08,18.31 L71.11,16.54 L73.13,15.44 L75.16,14.81 L77.18,14.50 L79.21,14.40 L81.23,14.50 L83.26,14.81 L85.28,15.44 L87.31,16.54 L89.33,18.31 L91.36,20.86 L93.38,24.00 L95.41,27.14 L97.43,29.69 L99.46,31.46 L101.48,32.56 L103.51,33.19 L105.53,33.50 L107.56,33.60" fill="none" stroke="#ee640f" stroke-width="9.0"/>
<path d="M50.85,33.60 L52.88,33.50 L54.90,33.19 L56.93,32.56 L58.95,31.46 L60.98,29.69 L63.00,27.14 L65.03,24.00 L67.05,20.86 L69.08,18.31 L71.11,16.54 L73.13,15.44 L75.16,14.81 L77.18,14.50 L79.21,14.40 L81.23,14.50 L83.26,14.81 L85.28,15.44 L87.31,16.54 L89.33,18.31 L91.36,20.86 L93.38,24.00 L95.41,27.14 L97.43,29.69 L99.46,31.46 L101.48,32.56 L103.51,33.19 L105.53,33.50 L107.56,33.60" fill="none" stroke="#f7ac12" stroke-width="6.6"/>
<path d="M50.85,33.60 L52.88,33.50 L54.90,33.19 L56.93,32.56 L58.95,31.46 L60.98,29.69 L63.00,27.14 L65.03,24.00 L67.05,20.86 L69.08,18.31 L71.11,16.54 L73.13,15.44 L75.16,14.81 L77.18,14.50 L79.21,14.40 L81.23,14.50 L83.26,14.81 L85.28,15.44 L87.31,16.54 L89.33,18.31 L91.36,20.86 L93.38,24.00 L95.41,27.14 L97.43,29.69 L99.46,31.46 L101.48,32.56 L103.51,33.19 L105.53,33.50 L107.56,33.60" fill="none" stroke="#2a1004" stroke-width="4.6"/>
<path d="M50.85,33.60 L52.88,33.50 L54.90,33.19 L56.93,32.56 L58.95,31.46 L60.98,29.69 L63.00,27.14 L65.03,24.00 L67.05,20.86 L69.08,18.31 L71.11,16.54 L73.13,15.44 L75.16,14.81 L77.18,14.50 L79.21,14.40 L81.23,14.50 L83.26,14.81 L85.28,15.44 L87.31,16.54 L89.33,18.31 L91.36,20.86 L93.38,24.00 L95.41,27.14 L97.43,29.69 L99.46,31.46 L101.48,32.56 L103.51,33.19 L105.53,33.50 L107.56,33.60" fill="none" stroke="#ee640f" stroke-width="4.0"/>
<path d="M50.85,33.60 L52.88,33.50 L54.90,33.19 L56.93,32.56 L58.95,31.46 L60.98,29.69 L63.00,27.14 L65.03,24.00 L67.05,20.86 L69.08,18.31 L71.11,16.54 L73.13,15.44 L75.16,14.81 L77.18,14.50 L79.21,14.40 L81.23,14.50 L83.26,14.81 L85.28,15.44 L87.31,16.54 L89.33,18.31 L91.36,20.86 L93.38,24.00 L95.41,27.14 L97.43,29.69 L99.46,31.46 L101.48,32.56 L103.51,33.19 L105.53,33.50 L107.56,33.60" fill="none" stroke="#f7ac12" stroke-width="1.8"/>
<path d="M50.85,33.60 L52.88,33.50 L54.90,33.19 L56.93,32.56 L58.95,31.46 L60.98,29.69 L63.00,27.14 L65.03,24.00 L67.05,20.86 L69.08,18.31 L71.11,16.54 L73.13,15.44 L75.16,14.81 L77.18,14.50 L79.21,14.40 L81.23,14.50 L83.26,14.81 L85.28,15.44 L87.31,16.54 L89.33,18.31 L91.36,20.86 L93.38,24.00 L95.41,27.14 L97.43,29.69 L99.46,31.46 L101.48,32.56 L103.51,33.19 L105.53,33.50 L107.56,33.60" fill="none" stroke="#120804" stroke-width="13" stroke-dasharray="0.7 2.0" opacity="0.35"/>
<path d="M22.50,33.60 L24.53,33.50 L26.55,33.19 L28.58,32.56 L30.60,31.46 L32.63,29.69 L34.65,27.14 L36.68,24.00 L38.70,20.86 L40.73,18.31 L42.75,16.54 L44.78,15.44 L46.80,14.81 L48.83,14.50 L50.85,14.40 L52.88,14.50 L54.90,14.81 L56.93,15.44 L58.95,16.54 L60.98,18.31 L63.00,20.86 L65.03,24.00 L67.05,27.14 L69.08,29.69 L71.11,31.46 L73.13,32.56 L75.16,33.19 L77.18,33.50 L79.21,33.60" fill="none" stroke="#1f5cb4" stroke-width="14.5"/>
<path d="M22.50,33.60 L24.53,33.50 L26.55,33.19 L28.58,32.56 L30.60,31.46 L32.63,29.69 L34.65,27.14 L36.68,24.00 L38.70,20.86 L40.73,18.31 L42.75,16.54 L44.78,15.44 L46.80,14.81 L48.83,14.50 L50.85,14.40 L52.88,14.50 L54.90,14.81 L56.93,15.44 L58.95,16.54 L60.98,18.31 L63.00,20.86 L65.03,24.00 L67.05,27.14 L69.08,29.69 L71.11,31.46 L73.13,32.56 L75.16,33.19 L77.18,33.50 L79.21,33.60" fill="none" stroke="#1a0c04" stroke-width="9.6"/>
<path d="M22.50,33.60 L24.53,33.50 L26.55,33.19 L28.58,32.56 L30.60,31.46 L32.63,29.69 L34.65,27.14 L36.68,24.00 L38.70,20.86 L40.73,18.31 L42.75,16.54 L44.78,15.44 L46.80,14.81 L48.83,14.50 L50.85,14.40 L52.88,14.50 L54.90,14.81 L56.93,15.44 L58.95,16.54 L60.98,18.31 L63.00,20.86 L65.03,24.00 L67.05,27.14 L69.08,29.69 L71.11,31.46 L73.13,32.56 L75.16,33.19 L77.18,33.50 L79.21,33.60" fill="none" stroke="#ee640f" stroke-width="9.0"/>
<path d="M22.50,33.60 L24.53,33.50 L26.55,33.19 L28.58,32.56 L30.60,31.46 L32.63,29.69 L34.65,27.14 L36.68,24.00 L38.70,20.86 L40.73,18.31 L42.75,16.54 L44.78,15.44 L46.80,14.81 L48.83,14.50 L50.85,14.40 L52.88,14.50 L54.90,14.81 L56.93,15.44 L58.95,16.54 L60.98,18.31 L63.00,20.86 L65.03,24.00 L67.05,27.14 L69.08,29.69 L71.11,31.46 L73.13,32.56 L75.16,33.19 L77.18,33.50 L79.21,33.60" fill="none" stroke="#f7ac12" stroke-width="6.6"/>
<path d="M22.50,33.60 L24.53,33.50 L26.55,33.19 L28.58,32.56 L30.60,31.46 L32.63,29.69 L34.65,27.14 L36.68,24.00 L38.70,20.86 L40.73,18.31 L42.75,16.54 L44.78,15.44 L46.80,14.81 L48.83,14.50 L50.85,14.40 L52.88,14.50 L54.90,14.81 L56.93,15.44 L58.95,16.54 L60.98,18.31 L63.00,20.86 L65.03,24.00 L67.05,27.14 L69.08,29.69 L71.11,31.46 L73.13,32.56 L75.16,33.19 L77.18,33.50 L79.21,33.60" fill="none" stroke="#2a1004" stroke-width="4.6"/>
<path d="M22.50,33.60 L24.53,33.50 L26.55,33.19 L28.58,32.56 L30.60,31.46 L32.63,29.69 L34.65,27.14 L36.68,24.00 L38.70,20.86 L40.73,18.31 L42.75,16.54 L44.78,15.44 L46.80,14.81 L48.83,14.50 L50.85,14.40 L52.88,14.50 L54.90,14.81 L56.93,15.44 L58.95,16.54 L60.98,18.31 L63.00,20.86 L65.03,24.00 L67.05,27.14 L69.08,29.69 L71.11,31.46 L73.13,32.56 L75.16,33.19 L77.18,33.50 L79.21,33.60" fill="none" stroke="#ee640f" stroke-width="4.0"/>
<path d="M22.50,33.60 L24.53,33.50 L26.55,33.19 L28.58,32.56 L30.60,31.46 L32.63,29.69 L34.65,27.14 L36.68,24.00 L38.70,20.86 L40.73,18.31 L42.75,16.54 L44.78,15.44 L46.80,14.81 L48.83,14.50 L50.85,14.40 L52.88,14.50 L54.90,14.81 L56.93,15.44 L58.95,16.54 L60.98,18.31 L63.00,20.86 L65.03,24.00 L67.05,27.14 L69.08,29.69 L71.11,31.46 L73.13,32.56 L75.16,33.19 L77.18,33.50 L79.21,33.60" fill="none" stroke="#f7ac12" stroke-width="1.8"/>
<path d="M22.50,33.60 L24.53,33.50 L26.55,33.19 L28.58,32.56 L30.60,31.46 L32.63,29.69 L34.65,27.14 L36.68,24.00 L38.70,20.86 L40.73,18.31 L42.75,16.54 L44.78,15.44 L46.80,14.81 L48.83,14.50 L50.85,14.40 L52.88,14.50 L54.90,14.81 L56.93,15.44 L58.95,16.54 L60.98,18.31 L63.00,20.86 L65.03,24.00 L67.05,27.14 L69.08,29.69 L71.11,31.46 L73.13,32.56 L75.16,33.19 L77.18,33.50 L79.21,33.60" fill="none" stroke="#120804" stroke-width="13" stroke-dasharray="0.7 2.0" opacity="0.35"/>
<path d="M-5.85,33.60 L-3.83,33.50 L-1.80,33.19 L0.22,32.56 L2.25,31.46 L4.27,29.69 L6.30,27.14 L8.32,24.00 L10.35,20.86 L12.37,18.31 L14.40,16.54 L16.42,15.44 L18.45,14.81 L20.47,14.50 L22.50,14.40 L24.53,14.50 L26.55,14.81 L28.58,15.44 L30.60,16.54 L32.63,18.31 L34.65,20.86 L36.68,24.00 L38.70,27.14 L40.73,29.69 L42.75,31.46 L44.78,32.56 L46.80,33.19 L48.83,33.50 L50.85,33.60" fill="none" stroke="#1f5cb4" stroke-width="14.5"/>
<path d="M-5.85,33.60 L-3.83,33.50 L-1.80,33.19 L0.22,32.56 L2.25,31.46 L4.27,29.69 L6.30,27.14 L8.32,24.00 L10.35,20.86 L12.37,18.31 L14.40,16.54 L16.42,15.44 L18.45,14.81 L20.47,14.50 L22.50,14.40 L24.53,14.50 L26.55,14.81 L28.58,15.44 L30.60,16.54 L32.63,18.31 L34.65,20.86 L36.68,24.00 L38.70,27.14 L40.73,29.69 L42.75,31.46 L44.78,32.56 L46.80,33.19 L48.83,33.50 L50.85,33.60" fill="none" stroke="#1a0c04" stroke-width="9.6"/>
<path d="M-5.85,33.60 L-3.83,33.50 L-1.80,33.19 L0.22,32.56 L2.25,31.46 L4.27,29.69 L6.30,27.14 L8.32,24.00 L10.35,20.86 L12.37,18.31 L14.40,16.54 L16.42,15.44 L18.45,14.81 L20.47,14.50 L22.50,14.40 L24.53,14.50 L26.55,14.81 L28.58,15.44 L30.60,16.54 L32.63,18.31 L34.65,20.86 L36.68,24.00 L38.70,27.14 L40.73,29.69 L42.75,31.46 L44.78,32.56 L46.80,33.19 L48.83,33.50 L50.85,33.60" fill="none" stroke="#ee640f" stroke-width="9.0"/>
<path d="M-5.85,33.60 L-3.83,33.50 L-1.80,33.19 L0.22,32.56 L2.25,31.46 L4.27,29.69 L6.30,27.14 L8.32,24.00 L10.35,20.86 L12.37,18.31 L14.40,16.54 L16.42,15.44 L18.45,14.81 L20.47,14.50 L22.50,14.40 L24.53,14.50 L26.55,14.81 L28.58,15.44 L30.60,16.54 L32.63,18.31 L34.65,20.86 L36.68,24.00 L38.70,27.14 L40.73,29.69 L42.75,31.46 L44.78,32.56 L46.80,33.19 L48.83,33.50 L50.85,33.60" fill="none" stroke="#f7ac12" stroke-width="6.6"/>
<path d="M-5.85,33.60 L-3.83,33.50 L-1.80,33.19 L0.22,32.56 L2.25,31.46 L4.27,29.69 L6.30,27.14 L8.32,24.00 L10.35,20.86 L12.37,18.31 L14.40,16.54 L16.42,15.44 L18.45,14.81 L20.47,14.50 L22.50,14.40 L24.53,14.50 L26.55,14.81 L28.58,15.44 L30.60,16.54 L32.63,18.31 L34.65,20.86 L36.68,24.00 L38.70,27.14 L40.73,29.69 L42.75,31.46 L44.78,32.56 L46.80,33.19 L48.83,33.50 L50.85,33.60" fill="none" stroke="#2a1004" stroke-width="4.6"/>
<path d="M-5.85,33.60 L-3.83,33.50 L-1.80,33.19 L0.22,32.56 L2.25,31.46 L4.27,29.69 L6.30,27.14 L8.32,24.00 L10.35,20.86 L12.37,18.31 L14.40,16.54 L16.42,15.44 L18.45,14.81 L20.47,14.50 L22.50,14.40 L24.53,14.50 L26.55,14.81 L28.58,15.44 L30.60,16.54 L32.63,18.31 L34.65,20.86 L36.68,24.00 L38.70,27.14 L40.73,29.69 L42.75,31.46 L44.78,32.56 L46.80,33.19 L48.83,33.50 L50.85,33.60" fill="none" stroke="#ee640f" stroke-width="4.0"/>
<path d="M-5.85,33.60 L-3.83,33.50 L-1.80,33.19 L0.22,32.56 L2.25,31.46 L4.27,29.69 L6.30,27.14 L8.32,24.00 L10.35,20.86 L12.37,18.31 L14.40,16.54 L16.42,15.44 L18.45,14.81 L20.47,14.50 L22.50,14.40 L24.53,14.50 L26.55,14.81 L28.58,15.44 L30.60,16.54 L32.63,18.31 L34.65,20.86 L36.68,24.00 L38.70,27.14 L40.73,29.69 L42.75,31.46 L44.78,32.56 L46.80,33.19 L48.83,33.50 L50.85,33.60" fill="none" stroke="#f7ac12" stroke-width="1.8"/>
<path d="M-5.85,33.60 L-3.83,33.50 L-1.80,33.19 L0.22,32.56 L2.25,31.46 L4.27,29.69 L6.30,27.14 L8.32,24.00 L10.35,20.86 L12.37,18.31 L14.40,16.54 L16.42,15.44 L18.45,14.81 L20.47,14.50 L22.50,14.40 L24.53,14.50 L26.55,14.81 L28.58,15.44 L30.60,16.54 L32.63,18.31 L34.65,20.86 L36.68,24.00 L38.70,27.14 L40.73,29.69 L42.75,31.46 L44.78,32.56 L46.80,33.19 L48.83,33.50 L50.85,33.60" fill="none" stroke="#120804" stroke-width="13" stroke-dasharray="0.7 2.0" opacity="0.35"/>
<path d="M-34.21,33.60 L-32.18,33.50 L-30.16,33.19 L-28.13,32.56 L-26.11,31.46 L-24.08,29.69 L-22.05,27.14 L-20.03,24.00 L-18.00,20.86 L-15.98,18.31 L-13.95,16.54 L-11.93,15.44 L-9.90,14.81 L-7.88,14.50 L-5.85,14.40 L-3.83,14.50 L-1.80,14.81 L0.22,15.44 L2.25,16.54 L4.27,18.31 L6.30,20.86 L8.32,24.00 L10.35,27.14 L12.37,29.69 L14.40,31.46 L16.42,32.56 L18.45,33.19 L20.47,33.50 L22.50,33.60" fill="none" stroke="#1f5cb4" stroke-width="14.5"/>
<path d="M-34.21,33.60 L-32.18,33.50 L-30.16,33.19 L-28.13,32.56 L-26.11,31.46 L-24.08,29.69 L-22.05,27.14 L-20.03,24.00 L-18.00,20.86 L-15.98,18.31 L-13.95,16.54 L-11.93,15.44 L-9.90,14.81 L-7.88,14.50 L-5.85,14.40 L-3.83,14.50 L-1.80,14.81 L0.22,15.44 L2.25,16.54 L4.27,18.31 L6.30,20.86 L8.32,24.00 L10.35,27.14 L12.37,29.69 L14.40,31.46 L16.42,32.56 L18.45,33.19 L20.47,33.50 L22.50,33.60" fill="none" stroke="#1a0c04" stroke-width="9.6"/>
<path d="M-34.21,33.60 L-32.18,33.50 L-30.16,33.19 L-28.13,32.56 L-26.11,31.46 L-24.08,29.69 L-22.05,27.14 L-20.03,24.00 L-18.00,20.86 L-15.98,18.31 L-13.95,16.54 L-11.93,15.44 L-9.90,14.81 L-7.88,14.50 L-5.85,14.40 L-3.83,14.50 L-1.80,14.81 L0.22,15.44 L2.25,16.54 L4.27,18.31 L6.30,20.86 L8.32,24.00 L10.35,27.14 L12.37,29.69 L14.40,31.46 L16.42,32.56 L18.45,33.19 L20.47,33.50 L22.50,33.60" fill="none" stroke="#ee640f" stroke-width="9.0"/>
<path d="M-34.21,33.60 L-32.18,33.50 L-30.16,33.19 L-28.13,32.56 L-26.11,31.46 L-24.08,29.69 L-22.05,27.14 L-20.03,24.00 L-18.00,20.86 L-15.98,18.31 L-13.95,16.54 L-11.93,15.44 L-9.90,14.81 L-7.88,14.50 L-5.85,14.40 L-3.83,14.50 L-1.80,14.81 L0.22,15.44 L2.25,16.54 L4.27,18.31 L6.30,20.86 L8.32,24.00 L10.35,27.14 L12.37,29.69 L14.40,31.46 L16.42,32.56 L18.45,33.19 L20.47,33.50 L22.50,33.60" fill="none" stroke="#f7ac12" stroke-width="6.6"/>
<path d="M-34.21,33.60 L-32.18,33.50 L-30.16,33.19 L-28.13,32.56 L-26.11,31.46 L-24.08,29.69 L-22.05,27.14 L-20.03,24.00 L-18.00,20.86 L-15.98,18.31 L-13.95,16.54 L-11.93,15.44 L-9.90,14.81 L-7.88,14.50 L-5.85,14.40 L-3.83,14.50 L-1.80,14.81 L0.22,15.44 L2.25,16.54 L4.27,18.31 L6.30,20.86 L8.32,24.00 L10.35,27.14 L12.37,29.69 L14.40,31.46 L16.42,32.56 L18.45,33.19 L20.47,33.50 L22.50,33.60" fill="none" stroke="#2a1004" stroke-width="4.6"/>
<path d="M-34.21,33.60 L-32.18,33.50 L-30.16,33.19 L-28.13,32.56 L-26.11,31.46 L-24.08,29.69 L-22.05,27.14 L-20.03,24.00 L-18.00,20.86 L-15.98,18.31 L-13.95,16.54 L-11.93,15.44 L-9.90,14.81 L-7.88,14.50 L-5.85,14.40 L-3.83,14.50 L-1.80,14.81 L0.22,15.44 L2.25,16.54 L4.27,18.31 L6.30,20.86 L8.32,24.00 L10.35,27.14 L12.37,29.69 L14.40,31.46 L16.42,32.56 L18.45,33.19 L20.47,33.50 L22.50,33.60" fill="none" stroke="#ee640f" stroke-width="4.0"/>
<path d="M-34.21,33.60 L-32.18,33.50 L-30.16,33.19 L-28.13,32.56 L-26.11,31.46 L-24.08,29.69 L-22.05,27.14 L-20.03,24.00 L-18.00,20.86 L-15.98,18.31 L-13.95,16.54 L-11.93,15.44 L-9.90,14.81 L-7.88,14.50 L-5.85,14.40 L-3.83,14.50 L-1.80,14.81 L0.22,15.44 L2.25,16.54 L4.27,18.31 L6.30,20.86 L8.32,24.00 L10.35,27.14 L12.37,29.69 L14.40,31.46 L16.42,32.56 L18.45,33.19 L20.47,33.50 L22.50,33.60" fill="none" stroke="#f7ac12" stroke-width="1.8"/>
<path d="M-34.21,33.60 L-32.18,33.50 L-30.16,33.19 L-28.13,32.56 L-26.11,31.46 L-24.08,29.69 L-22.05,27.14 L-20.03,24.00 L-18.00,20.86 L-15.98,18.31 L-13.95,16.54 L-11.93,15.44 L-9.90,14.81 L-7.88,14.50 L-5.85,14.40 L-3.83,14.50 L-1.80,14.81 L0.22,15.44 L2.25,16.54 L4.27,18.31 L6.30,20.86 L8.32,24.00 L10.35,27.14 L12.37,29.69 L14.40,31.46 L16.42,32.56 L18.45,33.19 L20.47,33.50 L22.50,33.60" fill="none" stroke="#120804" stroke-width="13" stroke-dasharray="0.7 2.0" opacity="0.35"/>
<path d="M-62.56,33.60 L-60.53,33.50 L-58.51,33.19 L-56.48,32.56 L-54.46,31.46 L-52.43,29.69 L-50.41,27.14 L-48.38,24.00 L-46.36,20.86 L-44.33,18.31 L-42.31,16.54 L-40.28,15.44 L-38.26,14.81 L-36.23,14.50 L-34.21,14.40 L-32.18,14.50 L-30.16,14.81 L-28.13,15.44 L-26.11,16.54 L-24.08,18.31 L-22.05,20.86 L-20.03,24.00 L-18.00,27.14 L-15.98,29.69 L-13.95,31.46 L-11.93,32.56 L-9.90,33.19 L-7.88,33.50 L-5.85,33.60" fill="none" stroke="#1f5cb4" stroke-width="14.5"/>
<path d="M-62.56,33.60 L-60.53,33.50 L-58.51,33.19 L-56.48,32.56 L-54.46,31.46 L-52.43,29.69 L-50.41,27.14 L-48.38,24.00 L-46.36,20.86 L-44.33,18.31 L-42.31,16.54 L-40.28,15.44 L-38.26,14.81 L-36.23,14.50 L-34.21,14.40 L-32.18,14.50 L-30.16,14.81 L-28.13,15.44 L-26.11,16.54 L-24.08,18.31 L-22.05,20.86 L-20.03,24.00 L-18.00,27.14 L-15.98,29.69 L-13.95,31.46 L-11.93,32.56 L-9.90,33.19 L-7.88,33.50 L-5.85,33.60" fill="none" stroke="#1a0c04" stroke-width="9.6"/>
<path d="M-62.56,33.60 L-60.53,33.50 L-58.51,33.19 L-56.48,32.56 L-54.46,31.46 L-52.43,29.69 L-50.41,27.14 L-48.38,24.00 L-46.36,20.86 L-44.33,18.31 L-42.31,16.54 L-40.28,15.44 L-38.26,14.81 L-36.23,14.50 L-34.21,14.40 L-32.18,14.50 L-30.16,14.81 L-28.13,15.44 L-26.11,16.54 L-24.08,18.31 L-22.05,20.86 L-20.03,24.00 L-18.00,27.14 L-15.98,29.69 L-13.95,31.46 L-11.93,32.56 L-9.90,33.19 L-7.88,33.50 L-5.85,33.60" fill="none" stroke="#ee640f" stroke-width="9.0"/>
<path d="M-62.56,33.60 L-60.53,33.50 L-58.51,33.19 L-56.48,32.56 L-54.46,31.46 L-52.43,29.69 L-50.41,27.14 L-48.38,24.00 L-46.36,20.86 L-44.33,18.31 L-42.31,16.54 L-40.28,15.44 L-38.26,14.81 L-36.23,14.50 L-34.21,14.40 L-32.18,14.50 L-30.16,14.81 L-28.13,15.44 L-26.11,16.54 L-24.08,18.31 L-22.05,20.86 L-20.03,24.00 L-18.00,27.14 L-15.98,29.69 L-13.95,31.46 L-11.93,32.56 L-9.90,33.19 L-7.88,33.50 L-5.85,33.60" fill="none" stroke="#f7ac12" stroke-width="6.6"/>
<path d="M-62.56,33.60 L-60.53,33.50 L-58.51,33.19 L-56.48,32.56 L-54.46,31.46 L-52.43,29.69 L-50.41,27.14 L-48.38,24.00 L-46.36,20.86 L-44.33,18.31 L-42.31,16.54 L-40.28,15.44 L-38.26,14.81 L-36.23,14.50 L-34.21,14.40 L-32.18,14.50 L-30.16,14.81 L-28.13,15.44 L-26.11,16.54 L-24.08,18.31 L-22.05,20.86 L-20.03,24.00 L-18.00,27.14 L-15.98,29.69 L-13.95,31.46 L-11.93,32.56 L-9.90,33.19 L-7.88,33.50 L-5.85,33.60" fill="none" stroke="#2a1004" stroke-width="4.6"/>
<path d="M-62.56,33.60 L-60.53,33.50 L-58.51,33.19 L-56.48,32.56 L-54.46,31.46 L-52.43,29.69 L-50.41,27.14 L-48.38,24.00 L-46.36,20.86 L-44.33,18.31 L-42.31,16.54 L-40.28,15.44 L-38.26,14.81 L-36.23,14.50 L-34.21,14.40 L-32.18,14.50 L-30.16,14.81 L-28.13,15.44 L-26.11,16.54 L-24.08,18.31 L-22.05,20.86 L-20.03,24.00 L-18.00,27.14 L-15.98,29.69 L-13.95,31.46 L-11.93,32.56 L-9.90,33.19 L-7.88,33.50 L-5.85,33.60" fill="none" stroke="#ee640f" stroke-width="4.0"/>
<path d="M-62.56,33.60 L-60.53,33.50 L-58.51,33.19 L-56.48,32.56 L-54.46,31.46 L-52.43,29.69 L-50.41,27.14 L-48.38,24.00 L-46.36,20.86 L-44.33,18.31 L-42.31,16.54 L-40.28,15.44 L-38.26,14.81 L-36.23,14.50 L-34.21,14.40 L-32.18,14.50 L-30.16,14.81 L-28.13,15.44 L-26.11,16.54 L-24.08,18.31 L-22.05,20.86 L-20.03,24.00 L-18.00,27.14 L-15.98,29.69 L-13.95,31.46 L-11.93,32.56 L-9.90,33.19 L-7.88,33.50 L-5.85,33.60" fill="none" stroke="#f7ac12" stroke-width="1.8"/>
<path d="M-62.56,33.60 L-60.53,33.50 L-58.51,33.19 L-56.48,32.56 L-54.46,31.46 L-52.43,29.69 L-50.41,27.14 L-48.38,24.00 L-46.36,20.86 L-44.33,18.31 L-42.31,16.54 L-40.28,15.44 L-38.26,14.81 L-36.23,14.50 L-34.21,14.40 L-32.18,14.50 L-30.16,14.81 L-28.13,15.44 L-26.11,16.54 L-24.08,18.31 L-22.05,20.86 L-20.03,24.00 L-18.00,27.14 L-15.98,29.69 L-13.95,31.46 L-11.93,32.56 L-9.90,33.19 L-7.88,33.50 L-5.85,33.60" fill="none" stroke="#120804" stroke-width="13" stroke-dasharray="0.7 2.0" opacity="0.35"/>
</g></svg>
<svg class="a" style="left:588px;top:93px" width="481" height="47" viewBox="0 0 481 47">
<rect x="0" y="0" width="481" height="24" fill="#ffa20a"/>
<path d="M1.5,4.5 h6 v10 h12 v6 h-18 z" fill="#ff6608" stroke="#140800" stroke-width="1"/>
<rect x="10.5" y="4.5" width="8" height="6" fill="#ff6608" stroke="#140800" stroke-width="1"/>
<path d="M37.5,4.5 h6 v16 h-18 v-6 h12 z" fill="#ff6608" stroke="#140800" stroke-width="1"/>
<rect x="26.5" y="4.5" width="8" height="6" fill="#ff6608" stroke="#140800" stroke-width="1"/>
<path d="M45.5,4.5 h6 v10 h12 v6 h-18 z" fill="#ff6608" stroke="#140800" stroke-width="1"/>
<rect x="54.5" y="4.5" width="8" height="6" fill="#ff6608" stroke="#140800" stroke-width="1"/>
<path d="M81.5,4.5 h6 v16 h-18 v-6 h12 z" fill="#ff6608" stroke="#140800" stroke-width="1"/>
<rect x="70.5" y="4.5" width="8" height="6" fill="#ff6608" stroke="#140800" stroke-width="1"/>
<path d="M89.5,4.5 h6 v10 h12 v6 h-18 z" fill="#ff6608" stroke="#140800" stroke-width="1"/>
<rect x="98.5" y="4.5" width="8" height="6" fill="#ff6608" stroke="#140800" stroke-width="1"/>
<path d="M125.5,4.5 h6 v16 h-18 v-6 h12 z" fill="#ff6608" stroke="#140800" stroke-width="1"/>
<rect x="114.5" y="4.5" width="8" height="6" fill="#ff6608" stroke="#140800" stroke-width="1"/>
<path d="M134.5,4.5 h6 v10 h12 v6 h-18 z" fill="#ff6608" stroke="#140800" stroke-width="1"/>
<rect x="143.5" y="4.5" width="8" height="6" fill="#ff6608" stroke="#140800" stroke-width="1"/>
<path d="M170.5,4.5 h6 v16 h-18 v-6 h12 z" fill="#ff6608" stroke="#140800" stroke-width="1"/>
<rect x="159.5" y="4.5" width="8" height="6" fill="#ff6608" stroke="#140800" stroke-width="1"/>
<path d="M178.5,4.5 h6 v10 h12 v6 h-18 z" fill="#ff6608" stroke="#140800" stroke-width="1"/>
<rect x="187.5" y="4.5" width="8" height="6" fill="#ff6608" stroke="#140800" stroke-width="1"/>
<path d="M214.5,4.5 h6 v16 h-18 v-6 h12 z" fill="#ff6608" stroke="#140800" stroke-width="1"/>
<rect x="203.5" y="4.5" width="8" height="6" fill="#ff6608" stroke="#140800" stroke-width="1"/>
<path d="M222.5,4.5 h6 v10 h12 v6 h-18 z" fill="#ff6608" stroke="#140800" stroke-width="1"/>
<rect x="231.5" y="4.5" width="8" height="6" fill="#ff6608" stroke="#140800" stroke-width="1"/>
<path d="M258.5,4.5 h6 v16 h-18 v-6 h12 z" fill="#ff6608" stroke="#140800" stroke-width="1"/>
<rect x="247.5" y="4.5" width="8" height="6" fill="#ff6608" stroke="#140800" stroke-width="1"/>
<path d="M266.5,4.5 h6 v10 h12 v6 h-18 z" fill="#ff6608" stroke="#140800" stroke-width="1"/>
<rect x="275.5" y="4.5" width="8" height="6" fill="#ff6608" stroke="#140800" stroke-width="1"/>
<path d="M302.5,4.5 h6 v16 h-18 v-6 h12 z" fill="#ff6608" stroke="#140800" stroke-width="1"/>
<rect x="291.5" y="4.5" width="8" height="6" fill="#ff6608" stroke="#140800" stroke-width="1"/>
<path d="M310.5,4.5 h6 v10 h12 v6 h-18 z" fill="#ff6608" stroke="#140800" stroke-width="1"/>
<rect x="319.5" y="4.5" width="8" height="6" fill="#ff6608" stroke="#140800" stroke-width="1"/>
<path d="M347.5,4.5 h6 v16 h-18 v-6 h12 z" fill="#ff6608" stroke="#140800" stroke-width="1"/>
<rect x="336.5" y="4.5" width="8" height="6" fill="#ff6608" stroke="#140800" stroke-width="1"/>
<path d="M355.5,4.5 h6 v10 h12 v6 h-18 z" fill="#ff6608" stroke="#140800" stroke-width="1"/>
<rect x="364.5" y="4.5" width="8" height="6" fill="#ff6608" stroke="#140800" stroke-width="1"/>
<path d="M391.5,4.5 h6 v16 h-18 v-6 h12 z" fill="#ff6608" stroke="#140800" stroke-width="1"/>
<rect x="380.5" y="4.5" width="8" height="6" fill="#ff6608" stroke="#140800" stroke-width="1"/>
<path d="M399.5,4.5 h6 v10 h12 v6 h-18 z" fill="#ff6608" stroke="#140800" stroke-width="1"/>
<rect x="408.5" y="4.5" width="8" height="6" fill="#ff6608" stroke="#140800" stroke-width="1"/>
<path d="M435.5,4.5 h6 v16 h-18 v-6 h12 z" fill="#ff6608" stroke="#140800" stroke-width="1"/>
<rect x="424.5" y="4.5" width="8" height="6" fill="#ff6608" stroke="#140800" stroke-width="1"/>
<path d="M443.5,4.5 h6 v10 h12 v6 h-18 z" fill="#ff6608" stroke="#140800" stroke-width="1"/>
<rect x="452.5" y="4.5" width="8" height="6" fill="#ff6608" stroke="#140800" stroke-width="1"/>
<path d="M479.5,4.5 h6 v16 h-18 v-6 h12 z" fill="#ff6608" stroke="#140800" stroke-width="1"/>
<rect x="468.5" y="4.5" width="8" height="6" fill="#ff6608" stroke="#140800" stroke-width="1"/>
<path d="M487.5,4.5 h6 v10 h12 v6 h-18 z" fill="#ff6608" stroke="#140800" stroke-width="1"/>
<rect x="496.5" y="4.5" width="8" height="6" fill="#ff6608" stroke="#140800" stroke-width="1"/>
<path d="M0,3.5 h5 M10,3.5 h6 M23,3.5 h6 M56,3.5 h7 M67,3.5 h9 M78,3.5 h5 M86,3.5 h5 M109,3.5 h6 M122,3.5 h11 M139,3.5 h6 M153,3.5 h11 M170,3.5 h13 M188,3.5 h10 M204,3.5 h8 M217,3.5 h6 M226,3.5 h10 M239,3.5 h6 M248,3.5 h14 M264,3.5 h14 M285,3.5 h9 M311,3.5 h5 M323,3.5 h8 M337,3.5 h9 M352,3.5 h6 M360,3.5 h13 M380,3.5 h6 M393,3.5 h5 M404,3.5 h10 M420,3.5 h14 M438,3.5 h6 M446,3.5 h5 M458,3.5 h10 M470,3.5 h9 M0,8.5 h9 M131,8.5 h8 M235,8.5 h12 M253,8.5 h13 M296,8.5 h8 M317,8.5 h10 M417,8.5 h4 M456,8.5 h12 M296,12.5 h13 M416,12.5 h5 M39,16.5 h7 M382,16.5 h8 M409,16.5 h11 M15,21.5 h9 M29,21.5 h12 M80,21.5 h8 M92,21.5 h12 M140,21.5 h11 M183,21.5 h5 M204,21.5 h5 M216,21.5 h9 M246,21.5 h7 M258,21.5 h13 M338,21.5 h14 M370,21.5 h5 M395,21.5 h10 M412,21.5 h12 M445,21.5 h6 M479,21.5 h12 " stroke="#140800" stroke-width="1" fill="none" opacity="0.9"/>
<path d="M0.5,0 V4 M11.5,0 V4 M17.5,0 V4 M28.5,0 V4 M41.5,0 V4 M47.5,0 V4 M60.5,0 V4 M74.5,0 V4 M84.5,0 V4 M97.5,0 V4 M111.5,0 V4 M125.5,0 V4 M138.5,0 V4 M147.5,0 V4 M157.5,0 V4 M164.5,0 V4 M171.5,0 V4 M184.5,0 V4 M197.5,0 V4 M209.5,0 V4 M217.5,0 V4 M226.5,0 V4 M236.5,0 V4 M244.5,0 V4 M258.5,0 V4 M268.5,0 V4 M274.5,0 V4 M282.5,0 V4 M291.5,0 V4 M300.5,0 V4 M313.5,0 V4 M320.5,0 V4 M330.5,0 V4 M341.5,0 V4 M350.5,0 V4 M364.5,0 V4 M371.5,0 V4 M377.5,0 V4 M388.5,0 V4 M401.5,0 V4 M411.5,0 V4 M424.5,0 V4 M430.5,0 V4 M441.5,0 V4 M451.5,0 V4 M459.5,0 V4 M472.5,0 V4 M2.5,4 V9 M16.5,4 V9 M29.5,4 V9 M40.5,4 V9 M49.5,4 V9 M56.5,4 V9 M65.5,4 V9 M79.5,4 V9 M85.5,4 V9 M96.5,4 V9 M110.5,4 V9 M117.5,4 V9 M128.5,4 V9 M134.5,4 V9 M142.5,4 V9 M148.5,4 V9 M161.5,4 V9 M169.5,4 V9 M180.5,4 V9 M187.5,4 V9 M195.5,4 V9 M206.5,4 V9 M215.5,4 V9 M228.5,4 V9 M242.5,4 V9 M256.5,4 V9 M262.5,4 V9 M268.5,4 V9 M282.5,4 V9 M291.5,4 V9 M302.5,4 V9 M310.5,4 V9 M320.5,4 V9 M334.5,4 V9 M343.5,4 V9 M354.5,4 V9 M365.5,4 V9 M377.5,4 V9 M385.5,4 V9 M398.5,4 V9 M410.5,4 V9 M422.5,4 V9 M428.5,4 V9 M441.5,4 V9 M453.5,4 V9 M459.5,4 V9 M466.5,4 V9 M476.5,4 V9 M2.5,9 V13 M13.5,9 V13 M20.5,9 V13 M26.5,9 V13 M34.5,9 V13 M41.5,9 V13 M53.5,9 V13 M59.5,9 V13 M71.5,9 V13 M83.5,9 V13 M92.5,9 V13 M99.5,9 V13 M111.5,9 V13 M117.5,9 V13 M127.5,9 V13 M138.5,9 V13 M146.5,9 V13 M158.5,9 V13 M169.5,9 V13 M181.5,9 V13 M187.5,9 V13 M196.5,9 V13 M207.5,9 V13 M221.5,9 V13 M230.5,9 V13 M242.5,9 V13 M253.5,9 V13 M264.5,9 V13 M274.5,9 V13 M282.5,9 V13 M291.5,9 V13 M302.5,9 V13 M308.5,9 V13 M317.5,9 V13 M325.5,9 V13 M338.5,9 V13 M348.5,9 V13 M357.5,9 V13 M365.5,9 V13 M378.5,9 V13 M392.5,9 V13 M405.5,9 V13 M413.5,9 V13 M425.5,9 V13 M435.5,9 V13 M447.5,9 V13 M459.5,9 V13 M466.5,9 V13 M475.5,9 V13 M0.5,13 V17 M9.5,13 V17 M20.5,13 V17 M31.5,13 V17 M41.5,13 V17 M51.5,13 V17 M63.5,13 V17 M77.5,13 V17 M89.5,13 V17 M97.5,13 V17 M108.5,13 V17 M122.5,13 V17 M129.5,13 V17 M139.5,13 V17 M150.5,13 V17 M160.5,13 V17 M169.5,13 V17 M178.5,13 V17 M190.5,13 V17 M199.5,13 V17 M208.5,13 V17 M222.5,13 V17 M231.5,13 V17 M242.5,13 V17 M252.5,13 V17 M265.5,13 V17 M274.5,13 V17 M281.5,13 V17 M288.5,13 V17 M302.5,13 V17 M308.5,13 V17 M320.5,13 V17 M326.5,13 V17 M340.5,13 V17 M350.5,13 V17 M360.5,13 V17 M371.5,13 V17 M379.5,13 V17 M393.5,13 V17 M401.5,13 V17 M411.5,13 V17 M419.5,13 V17 M432.5,13 V17 M444.5,13 V17 M454.5,13 V17 M468.5,13 V17 M477.5,13 V17 M3.5,17 V21 M10.5,17 V21 M19.5,17 V21 M30.5,17 V21 M36.5,17 V21 M49.5,17 V21 M55.5,17 V21 M69.5,17 V21 M81.5,17 V21 M93.5,17 V21 M100.5,17 V21 M112.5,17 V21 M123.5,17 V21 M135.5,17 V21 M145.5,17 V21 M156.5,17 V21 M168.5,17 V21 M175.5,17 V21 M188.5,17 V21 M197.5,17 V21 M204.5,17 V21 M214.5,17 V21 M227.5,17 V21 M234.5,17 V21 M244.5,17 V21 M258.5,17 V21 M265.5,17 V21 M274.5,17 V21 M288.5,17 V21 M299.5,17 V21 M309.5,17 V21 M318.5,17 V21 M329.5,17 V21 M341.5,17 V21 M347.5,17 V21 M354.5,17 V21 M360.5,17 V21 M368.5,17 V21 M377.5,17 V21 M386.5,17 V21 M393.5,17 V21 M402.5,17 V21 M413.5,17 V21 M421.5,17 V21 M435.5,17 V21 M442.5,17 V21 M450.5,17 V21 M462.5,17 V21 M476.5,17 V21 M0.5,21 V24 M7.5,21 V24 M18.5,21 V24 M27.5,21 V24 M39.5,21 V24 M51.5,21 V24 M60.5,21 V24 M67.5,21 V24 M73.5,21 V24 M80.5,21 V24 M87.5,21 V24 M101.5,21 V24 M111.5,21 V24 M120.5,21 V24 M128.5,21 V24 M141.5,21 V24 M149.5,21 V24 M156.5,21 V24 M167.5,21 V24 M174.5,21 V24 M187.5,21 V24 M201.5,21 V24 M209.5,21 V24 M217.5,21 V24 M226.5,21 V24 M235.5,21 V24 M248.5,21 V24 M258.5,21 V24 M270.5,21 V24 M276.5,21 V24 M285.5,21 V24 M295.5,21 V24 M306.5,21 V24 M313.5,21 V24 M321.5,21 V24 M329.5,21 V24 M335.5,21 V24 M348.5,21 V24 M355.5,21 V24 M364.5,21 V24 M371.5,21 V24 M379.5,21 V24 M387.5,21 V24 M401.5,21 V24 M412.5,21 V24 M421.5,21 V24 M435.5,21 V24 M447.5,21 V24 M453.5,21 V24 M463.5,21 V24 M470.5,21 V24 " stroke="#140800" stroke-width="1" fill="none" opacity="0.8"/>
<rect x="0" y="24" width="481" height="5.5" fill="#1d57ab"/>
<path d="M0.0,24.5 v2.4 M6.1,25.9 v2.7 M17.8,25.8 v1.7 M30.7,25.9 v1.8 M36.9,25.6 v3.7 M49.0,24.8 v2.8 M55.1,24.5 v2.3 M66.8,24.2 v3.8 M72.0,25.9 v1.7 M84.4,25.6 v3.9 M93.6,25.4 v1.9 M106.1,24.2 v3.7 M116.5,24.1 v3.8 M124.3,24.1 v1.8 M129.6,24.6 v3.1 M143.5,25.3 v3.6 M155.9,25.4 v2.2 M163.1,24.3 v2.6 M170.0,25.5 v2.0 M180.2,25.1 v2.9 M186.6,24.5 v3.1 M193.5,25.3 v3.9 M202.0,25.9 v2.8 M215.5,25.1 v3.3 M226.6,24.4 v2.6 M236.9,24.9 v3.0 M250.0,25.6 v3.4 M256.3,25.4 v2.9 M269.8,24.0 v1.5 M283.6,24.7 v3.1 M293.9,24.8 v2.3 M303.9,26.0 v2.6 M316.1,24.6 v3.1 M326.5,25.5 v3.6 M332.2,25.9 v2.8 M339.6,24.9 v1.3 M346.6,25.7 v3.1 M359.4,24.3 v1.3 M367.8,25.0 v3.1 M375.5,25.5 v2.8 M383.1,25.6 v1.2 M393.5,24.4 v1.1 M402.8,25.0 v2.8 M411.1,25.9 v3.4 M417.5,24.0 v3.9 M426.2,24.2 v1.5 M437.5,24.4 v2.1 M448.6,24.7 v3.0 M462.2,25.6 v2.9 M472.8,24.6 v2.9 " stroke="#0a1426" stroke-width="0.9" fill="none"/>
<rect x="0" y="29.5" width="481" height="12.5" fill="#ffa20a"/>
<path d="M-1.5,42 L5.5,30 L12.4,42 z M9.4,42 L16.4,30 L23.4,42 z M20.4,42 L27.3,30 L34.3,42 z M31.3,42 L38.3,30 L45.2,42 z M42.2,42 L49.2,30 L56.2,42 z M53.2,42 L60.1,30 L67.1,42 z M64.1,42 L71.1,30 L78.0,42 z M75.0,42 L82.0,30 L89.0,42 z M86.0,42 L92.9,30 L99.9,42 z M96.9,42 L103.9,30 L110.8,42 z M107.8,42 L114.8,30 L121.8,42 z M118.8,42 L125.7,30 L132.7,42 z M129.7,42 L136.6,30 L143.6,42 z M140.6,42 L147.6,30 L154.5,42 z M151.5,42 L158.5,30 L165.5,42 z M162.5,42 L169.4,30 L176.4,42 z M173.4,42 L180.4,30 L187.3,42 z M184.3,42 L191.3,30 L198.3,42 z M195.3,42 L202.2,30 L209.2,42 z M206.2,42 L213.2,30 L220.1,42 z M217.1,42 L224.1,30 L231.1,42 z M228.1,42 L235.0,30 L242.0,42 z M239.0,42 L246.0,30 L252.9,42 z M249.9,42 L256.9,30 L263.9,42 z M260.9,42 L267.8,30 L274.8,42 z M271.8,42 L278.8,30 L285.7,42 z M282.7,42 L289.7,30 L296.7,42 z M293.7,42 L300.6,30 L307.6,42 z M304.6,42 L311.6,30 L318.5,42 z M315.5,42 L322.5,30 L329.5,42 z M326.5,42 L333.4,30 L340.4,42 z M337.4,42 L344.4,30 L351.3,42 z M348.3,42 L355.3,30 L362.2,42 z M359.2,42 L366.2,30 L373.2,42 z M370.2,42 L377.1,30 L384.1,42 z M381.1,42 L388.1,30 L395.0,42 z M392.0,42 L399.0,30 L406.0,42 z M403.0,42 L409.9,30 L416.9,42 z M413.9,42 L420.9,30 L427.8,42 z M424.8,42 L431.8,30 L438.8,42 z M435.8,42 L442.7,30 L449.7,42 z M446.7,42 L453.7,30 L460.6,42 z M457.6,42 L464.6,30 L471.6,42 z M468.6,42 L475.5,30 L482.5,42 z M479.5,42 L486.5,30 L493.4,42 z " fill="#ff6608"/>
<path d="M5.6,31.5 v7.8 M15.8,32.1 v8.9 M26.4,30.8 v8.9 M37.4,32.5 v6.9 M48.3,31.9 v4.0 M60.8,30.9 v8.6 M71.9,30.4 v6.0 M81.3,32.3 v4.5 M92.1,30.3 v8.3 M103.3,31.0 v6.2 M114.9,31.2 v8.7 M125.4,31.4 v8.3 M136.1,30.5 v8.2 M147.2,32.7 v8.1 M158.3,31.0 v4.5 M170.2,31.3 v5.7 M179.7,30.7 v8.4 M190.6,31.7 v7.1 M202.3,31.5 v6.0 M212.6,32.5 v8.5 M224.2,30.8 v8.6 M234.4,30.5 v7.1 M246.6,31.7 v4.5 M257.9,30.5 v5.7 M268.8,32.4 v7.8 M277.9,32.6 v6.0 M288.7,32.4 v8.7 M299.7,31.4 v8.5 M311.2,30.9 v7.9 M322.4,33.0 v8.3 M334.1,32.1 v5.0 M344.7,31.7 v6.4 M355.4,30.9 v5.0 M367.0,31.1 v4.5 M378.1,31.5 v7.4 M387.8,30.4 v5.7 M399.7,30.8 v8.6 M409.6,32.7 v4.9 M420.8,30.4 v4.7 M431.9,31.1 v6.7 M442.2,30.9 v5.6 M454.5,30.2 v6.1 M465.3,31.7 v5.3 M476.5,30.3 v4.7 M485.5,31.3 v8.3 " fill="none" stroke="#140800" stroke-width="0.9"/>
<rect x="0" y="42" width="481" height="4.7" fill="#1d57ab"/>
<path d="M0.0,42.6 v1.6 M7.8,42.2 v1.0 M14.8,42.2 v2.1 M18.6,43.2 v2.7 M24.4,42.5 v2.2 M31.6,42.1 v1.5 M36.8,43.0 v1.5 M43.8,42.5 v2.8 M48.9,42.4 v1.2 M52.6,42.4 v2.8 M58.1,42.9 v2.9 M66.9,43.5 v1.5 M71.9,43.0 v1.5 M77.0,42.4 v1.5 M84.5,43.2 v1.9 M90.3,43.2 v2.4 M93.4,43.7 v1.9 M98.5,43.9 v2.5 M103.6,42.0 v1.9 M109.2,42.7 v1.2 M115.7,42.5 v2.5 M121.9,42.6 v2.7 M127.6,42.2 v1.6 M130.9,42.9 v2.8 M139.5,43.3 v1.3 M144.0,42.4 v1.7 M150.8,42.0 v2.0 M156.3,43.3 v2.7 M161.7,43.2 v1.5 M167.4,43.3 v1.1 M173.5,43.0 v1.4 M178.0,43.6 v1.7 M182.2,42.6 v2.0 M187.6,42.7 v1.6 M191.9,43.0 v2.2 M195.4,43.2 v1.6 M204.3,43.9 v1.3 M211.5,42.7 v1.2 M219.7,43.8 v2.6 M226.5,44.0 v2.1 M233.6,43.3 v2.7 M241.7,42.6 v1.4 M248.0,43.2 v1.7 M256.2,43.7 v2.4 M262.4,43.4 v1.4 M270.2,42.3 v2.8 M277.0,42.6 v1.4 M283.6,42.9 v2.4 M287.2,43.8 v1.9 M292.8,43.5 v2.2 M298.5,42.6 v1.9 M301.6,42.5 v2.7 M305.4,42.2 v2.7 M310.6,43.1 v2.2 M317.9,42.6 v2.5 M320.9,43.7 v1.6 M327.7,42.6 v2.5 M332.9,43.2 v1.6 M340.9,43.6 v1.4 M348.5,43.9 v1.5 M352.6,43.9 v2.9 M356.4,43.6 v2.9 M361.0,43.6 v1.6 M368.7,43.0 v1.9 M372.4,43.3 v2.4 M377.2,42.1 v1.2 M381.7,44.0 v2.5 M390.1,43.5 v1.3 M395.4,43.9 v2.7 M404.4,43.6 v2.4 M412.0,43.8 v1.9 M415.2,42.6 v1.0 M419.8,43.2 v1.6 M424.3,42.2 v1.7 M430.4,43.2 v2.9 M433.8,42.5 v1.2 M442.4,43.3 v2.3 M450.3,42.0 v2.8 M455.3,43.3 v1.8 M462.7,42.6 v1.6 M467.2,43.4 v1.9 M471.2,42.7 v2.1 M476.4,43.2 v2.7 " stroke="#0a1426" stroke-width="0.9" fill="none"/>
<path d="M0,0.5 H481 M0,23.8 H481" stroke="#140800" stroke-width="1"/>
</svg>

<svg width="0" height="0" style="position:absolute">
<defs>
<symbol id="menuS" viewBox="0 0 14 11">
<rect x="0" y="0.2" width="9.2" height="1.4" fill="#dcdcdc"/>
<rect x="0" y="3.1" width="9.2" height="1.4" fill="#dcdcdc"/>
<rect x="0" y="6.2" width="4" height="1.4" fill="#dcdcdc"/>
<path d="M6.3,6.9 L9.5,10 L12.7,6.9" fill="none" stroke="#8e8e8e" stroke-width="1.5"/>
</symbol>
<symbol id="menuH" viewBox="0 0 14 13">
<rect x="0" y="0" width="12" height="2" fill="#dedede"/>
<rect x="0" y="3.8" width="12" height="2" fill="#dedede"/>
<rect x="0" y="8" width="4" height="2" fill="#dedede"/>
<path d="M6.3,8.6 L9.6,11.9 L12.9,8.6" fill="none" stroke="#8e8e8e" stroke-width="1.6"/>
</symbol>
<symbol id="docH" viewBox="0 0 15 16">
<path d="M1.5,0 H10.5 Q12,0 12,1.5 V9 H6 V15 H1.5 Q0,15 0,13.5 V1.5 Q0,0 1.5,0 Z" fill="#d8d8d8"/>
<path d="M7,11.2 L10.3,14.5 L13.6,11.2" fill="none" stroke="#8e8e8e" stroke-width="1.6"/>
</symbol>
<symbol id="chev" viewBox="0 0 10 6">
<path d="M0.5,0.5 L5,5 L9.5,0.5" fill="none" stroke="#cfcfcf" stroke-width="1.2"/>
</symbol>
</defs>
</svg>

<!-- ========== LEFT: Size panel ========== -->
<div class="a" style="left:105px;top:329px;width:462px;height:69px;background:#333333"></div>
<div class="a" style="left:117px;top:332px;width:450px;height:1px;background:#2c2c2c"></div>
<div class="t" style="left:133px;top:341px;font-size:12px;font-weight:bold;color:#dedede">Size</div>
<svg style="left:545px;top:341.5px" width="14" height="11"><use href="#menuS"/></svg>
<div class="t" style="left:133px;top:361px;font-size:11px;color:#c8c8c8">X</div>
<div class="a" style="left:150px;top:365px;width:167px;height:2px;background:#cdcdcd"></div>
<div class="a" style="left:317px;top:365px;width:169px;height:2px;background:#4b4b4b"></div>
<div class="a" style="left:312px;top:361px;width:10.5px;height:10.5px;border-radius:50%;background:#bcbcbc;box-shadow:0 0 0 1.2px #262626"></div>
<div class="t" style="left:538px;top:362.5px;font-size:11px;color:#c8c8c8">17</div>
<div class="t" style="left:134px;top:379.5px;font-size:11px;color:#c8c8c8">Y</div>
<div class="a" style="left:150px;top:384.5px;width:334px;height:2px;background:#cdcdcd"></div>
<div class="a" style="left:479px;top:380.5px;width:10.5px;height:10.5px;border-radius:50%;background:#bcbcbc;box-shadow:0 0 0 1.2px #262626"></div>
<div class="t" style="left:544px;top:382.5px;font-size:11px;color:#c8c8c8">1</div>

<!-- ========== LEFT: Instance parameters ========== -->
<div class="a" style="left:105px;top:409px;width:462px;height:23px;background:#4d4d4d"></div>
<svg style="left:112px;top:418px" width="10" height="6"><use href="#chev"/></svg>
<div class="t" style="left:132px;top:415.5px;font-size:12px;font-weight:bold;color:#e2e2e2">INSTANCE PARAMETERS</div>
<svg style="left:520px;top:411.5px" width="15" height="16"><use href="#docH"/></svg>
<svg style="left:547px;top:414px" width="14" height="13"><use href="#menuH"/></svg>
<div class="a" style="left:105px;top:432px;width:462px;height:99px;background:#333333"></div>
<div class="t" style="left:120px;top:441px;font-size:12px;font-weight:bold;color:#dedede">X Amount</div>
<svg style="left:543px;top:441.5px" width="14" height="11"><use href="#menuS"/></svg>
<div class="a" style="left:126px;top:465px;width:91px;height:2px;background:#cdcdcd"></div>
<div class="a" style="left:217px;top:465px;width:267px;height:2px;background:#4b4b4b"></div>
<div class="a" style="left:211.5px;top:460.5px;width:11px;height:11px;border-radius:50%;background:#bcbcbc;box-shadow:0 0 0 1.2px #262626"></div>
<div class="t" style="left:535px;top:463px;font-size:11px;color:#c8c8c8">17</div>
<div class="a" style="left:105px;top:482px;width:462px;height:1px;background:#2b2b2b"></div>
<div class="t" style="left:120px;top:491px;font-size:12px;font-weight:bold;color:#dedede">Y Amount</div>
<svg style="left:543px;top:490.5px" width="14" height="11"><use href="#menuS"/></svg>
<div class="a" style="left:127px;top:515px;width:357px;height:2px;background:#4b4b4b"></div>
<div class="a" style="left:121.5px;top:510.5px;width:11px;height:11px;border-radius:50%;background:#bcbcbc;box-shadow:0 0 0 1.2px #262626"></div>
<div class="t" style="left:541px;top:513px;font-size:11px;color:#c8c8c8">1</div>

<!-- ========== RIGHT: Instance parameters ========== -->
<div class="a" style="left:663px;top:251px;width:460px;height:20px;background:#4d4d4d"></div>
<svg style="left:672px;top:257px" width="10" height="6"><use href="#chev"/></svg>
<div class="t" style="left:692px;top:255px;font-size:12px;font-weight:bold;color:#e2e2e2">INSTANCE PARAMETERS</div>
<svg style="left:1080px;top:251.2px" width="15" height="16"><use href="#docH"/></svg>
<svg style="left:1107px;top:254px" width="14" height="13"><use href="#menuH"/></svg>
<div class="a" style="left:663px;top:271px;width:460px;height:100px;background:#333333"></div>
<div class="t" style="left:680px;top:280px;font-size:12px;font-weight:bold;color:#dedede">X Amount</div>
<svg style="left:1103px;top:280.5px" width="14" height="11"><use href="#menuS"/></svg>
<div class="a" style="left:686px;top:304px;width:119px;height:2px;background:#cdcdcd"></div>
<div class="a" style="left:805px;top:304px;width:239px;height:2px;background:#4b4b4b"></div>
<div class="a" style="left:799.5px;top:299.5px;width:11px;height:11px;border-radius:50%;background:#bcbcbc;box-shadow:0 0 0 1.2px #262626"></div>
<div class="t" style="left:1095px;top:302px;font-size:11px;color:#c8c8c8">22</div>
<div class="a" style="left:663px;top:321px;width:460px;height:1px;background:#2b2b2b"></div>
<div class="t" style="left:680px;top:331px;font-size:12px;font-weight:bold;color:#dedede">Y Amount</div>
<svg style="left:1103px;top:329.5px" width="14" height="11"><use href="#menuS"/></svg>
<div class="a" style="left:687px;top:354px;width:357px;height:2px;background:#4b4b4b"></div>
<div class="a" style="left:681.5px;top:349.5px;width:11px;height:11px;border-radius:50%;background:#bcbcbc;box-shadow:0 0 0 1.2px #262626"></div>
<div class="t" style="left:1102px;top:352px;font-size:11px;color:#c8c8c8">1</div>

<!-- ========== RIGHT: Size ========== -->
<div class="a" style="left:663px;top:374px;width:460px;height:147px;background:#333333"></div>
<div class="a" style="left:678px;top:374px;width:445px;height:24.5px;background:#4d4d4d"></div>
<svg style="left:686px;top:384.5px" width="10" height="6"><use href="#chev"/></svg>
<div class="t" style="left:706px;top:382.5px;font-size:12.5px;font-weight:bold;color:#e2e2e2">Size</div>
<div class="t" style="left:694px;top:408px;font-size:12px;font-weight:bold;color:#dedede">Size Mode</div>
<svg style="left:1104px;top:408.5px" width="14" height="11"><use href="#menuS"/></svg>
<div class="a" style="left:695px;top:426px;width:427px;height:18px;border:1px solid #5c5c5c;border-radius:2px;background:#282828"></div>
<div class="t" style="left:700px;top:430.5px;font-size:11px;color:#d6d6d6;letter-spacing:-0.3px">Normal</div>
<svg style="left:1113px;top:433px" width="7" height="5"><path d="M0,0 H6.5 L3.25,4 Z" fill="#d0d0d0"/></svg>
<div class="a" style="left:678px;top:452px;width:445px;height:1px;background:#2b2b2b"></div>
<div class="t" style="left:694px;top:461px;font-size:12px;font-weight:bold;color:#dedede">Size</div>
<svg style="left:1104px;top:461.5px" width="14" height="11"><use href="#menuS"/></svg>
<div class="t" style="left:694px;top:481px;font-size:11px;color:#c8c8c8">X</div>
<div class="a" style="left:710px;top:485.5px;width:167px;height:2px;background:#1d8ae8"></div>
<div class="a" style="left:877px;top:485.5px;width:167px;height:2px;background:#4b4b4b"></div>
<div class="a" style="left:871.5px;top:481px;width:11px;height:11px;border-radius:50%;background:#2a8ff2;box-shadow:0 0 0 1.2px #262626"></div>
<div class="t" style="left:1087px;top:484px;font-size:11px;color:#c8c8c8">21.6</div>
<div class="t" style="left:694px;top:499.5px;font-size:11px;color:#c8c8c8">Y</div>
<div class="a" style="left:710px;top:504px;width:334px;height:2px;background:#cdcdcd"></div>
<div class="a" style="left:1038.5px;top:499.5px;width:11px;height:11px;border-radius:50%;background:#bcbcbc;box-shadow:0 0 0 1.2px #262626"></div>
<div class="t" style="left:1104px;top:503px;font-size:11px;color:#c8c8c8">1</div>

<!-- red marks -->
<svg style="left:520px;top:366px" width="46" height="24"><path d="M12.8,12.8 C18,12 28,10.8 34.5,11" stroke="#a82400" stroke-width="9.5" stroke-linecap="round" fill="none"/></svg>
<svg style="left:518px;top:470px" width="40" height="20"><path d="M12.5,10.8 C16,9.3 24,8.3 28.5,8.5" stroke="#a82400" stroke-width="7" stroke-linecap="round" fill="none"/></svg>
<svg style="left:1080px;top:306px" width="50" height="28"><path d="M13,16.5 C19,14 30,11.5 37,9" stroke="#a82400" stroke-width="7.5" stroke-linecap="round" fill="none"/></svg>
<svg style="left:1072px;top:490px" width="56" height="22"><path d="M12.5,12 C20,11 33,10 44,8" stroke="#a82400" stroke-width="8" stroke-linecap="round" fill="none"/></svg>
<div class="a" style="left:0;top:0;width:572px;height:588px;overflow:hidden">
<svg style="left:10.00px;top:10.00px" width="14" height="14" viewBox="0 0 14 14"><rect x="0" y="0" width="14" height="14" fill="#d2d2d2"/><rect x="1" y="1" width="6" height="6" fill="#2b2b2b"/><rect x="7" y="7" width="6" height="6" fill="#2b2b2b"/></svg>
<div class="t" style="left:32.50px;top:10.80px;font-size:13px;font-weight:bold;color:#e0e0e0;letter-spacing:-0.8px">Tile</div>
<div class="t" style="left:51.50px;top:10.80px;font-size:13px;font-weight:bold;color:#e0e0e0;letter-spacing:0.09px">_generator_color</div>
<div class="t" style="left:163.50px;top:10.80px;font-size:13px;font-weight:bold;color:#e0e0e0;transform:scaleX(1.15);transform-origin:0 0">-</div>
<div class="t" style="left:172.60px;top:10.80px;font-size:13px;font-weight:bold;color:#e0e0e0;letter-spacing:-0.23px">2D VIEW</div>
<svg style="left:497.00px;top:9.00px" width="16" height="16" viewBox="0 0 16 16"><g transform="rotate(45 8 8)"><path d="M5,0.8 H11 V2.6 H10 V6.2 L12.6,9 V10.2 H3.4 V9 L6,6.2 V2.6 H5 Z" fill="#d0d0d0"/><rect x="7.5" y="10" width="1" height="6.5" fill="#d0d0d0"/></g></svg>
<svg style="left:525.00px;top:12.00px" width="10" height="10" viewBox="0 0 10 10"><rect x="0.6" y="0.6" width="8.8" height="8.8" fill="none" stroke="#d6d6d6" stroke-width="1.2"/><path d="M5.5,0.5 V9.5 M5.5,5.5 H9.5" stroke="#d6d6d6" stroke-width="1.1"/></svg>
<svg style="left:550.00px;top:12.00px" width="10" height="10" viewBox="0 0 10 10"><rect x="0.6" y="0.6" width="8.8" height="8.8" fill="none" stroke="#d6d6d6" stroke-width="1.2"/><rect x="0.5" y="0.5" width="9" height="2.5" fill="#d6d6d6"/></svg>
<div class="a" style="left:4.50px;top:30.00px;width:26.5px;height:23.7px;background:#2a2a2a;border-radius:5px"></div>
<svg style="left:9.00px;top:34.00px" width="17" height="17" viewBox="0 0 17 17"><defs><linearGradient id="g0" x1="0" y1="0" x2="1" y2="1"><stop offset="0.3" stop-color="#555"/><stop offset="1" stop-color="#e0e0e0"/></linearGradient></defs><rect x="4.5" y="3.8" width="11.2" height="11.8" fill="url(#g0)" stroke="#d8d8d8" stroke-width="1"/><rect x="13" y="6" width="1.5" height="1.5" fill="#333"/><rect x="0.5" y="0.5" width="12" height="12" fill="#2a2a2a" stroke="#d8d8d8" stroke-width="1"/></svg>
<svg style="left:38.00px;top:34.00px" width="16" height="16" viewBox="0 0 16 16"><path d="M0,0 H12.6 L16,3.5 V16 H0 Z" fill="#d0d0d0"/><rect x="2.8" y="0" width="9" height="6.6" fill="#333"/><rect x="3.8" y="0" width="7" height="5.6" fill="#c8c8c8"/><rect x="8.2" y="1" width="1.5" height="3.6" fill="#222"/><rect x="1.4" y="13" width="1.6" height="1.6" fill="#222"/></svg>
<svg style="left:68.00px;top:34.00px" width="14" height="15" viewBox="0 0 14 15"><path d="M0,0 H6.5 L9.5,3 V12 H0 Z" fill="#d0d0d0"/><path d="M3,2.6 H10 L13.3,5.9 V15 H3 Z" fill="#c8c8c8" stroke="#333" stroke-width="0.9"/><path d="M10,2.6 L13.3,5.9 H10 Z" fill="#e6e6e6"/></svg>
<svg style="left:97.00px;top:35.00px" width="16" height="15" viewBox="0 0 16 15"><rect x="1.5" y="5" width="4" height="4" fill="none" stroke="#5c5c5c" stroke-width="1"/><path d="M5.5,7 L11,1.8 M5.5,7 H11 M5.5,7 L11,12.2" stroke="#5c5c5c" stroke-width="1"/><rect x="11" y="1" width="4" height="2" fill="#5c5c5c"/><rect x="11" y="6" width="4" height="2" fill="#5c5c5c"/><rect x="11" y="11" width="4" height="2" fill="#5c5c5c"/></svg>
<div class="t" style="left:123.00px;top:38.60px;font-size:10.2px;color:#6c6c6c;letter-spacing:-0.2px">UV</div>
<svg style="left:145.50px;top:39.50px" width="8" height="5" viewBox="0 0 8 5"><path d="M0.5,0.5 L3.75,3.8 L7,0.5" fill="none" stroke="#6a6a6a" stroke-width="1.1"/></svg>
<svg style="left:163.00px;top:33.00px" width="10" height="18" viewBox="0 0 10 18"><circle cx="6.5" cy="2.5" r="1.5" fill="#d6d6d6"/><path d="M2.3,6.2 H7.2 L4.8,14.8 Q4.4,16.6 3,16.6 Q1.4,16.6 1.9,14.8 L3.9,7.6 H2 Z" fill="#d6d6d6"/></svg>
<svg style="left:187.00px;top:33.00px" width="18" height="18" viewBox="0 0 18 18"><rect x="1.9" y="1" width="2.2" height="16" fill="#d8d8d8"/><rect x="5" y="5.8" width="2.2" height="11" fill="#d8d8d8"/><rect x="8" y="3.8" width="2.2" height="13" fill="#d8d8d8"/><rect x="11" y="8.9" width="2.2" height="8" fill="#d8d8d8"/><rect x="14" y="12" width="2.2" height="5" fill="#d8d8d8"/><rect x="1" y="16" width="16.2" height="1.2" fill="#d8d8d8"/></svg>
<div class="a" style="left:9.00px;top:56.00px;width:1px;height:25px;background:#1c1c1c"></div>
<div class="a" style="left:9.00px;top:558.00px;width:1px;height:25px;background:#1c1c1c"></div>
<div class="a" style="left:11.00px;top:56.00px;width:1px;height:25px;background:#1c1c1c"></div>
<div class="a" style="left:11.00px;top:558.00px;width:1px;height:25px;background:#1c1c1c"></div>
<div class="a" style="left:13.00px;top:56.00px;width:1px;height:25px;background:#1c1c1c"></div>
<div class="a" style="left:13.00px;top:558.00px;width:1px;height:25px;background:#1c1c1c"></div>
<svg style="left:25.00px;top:61.00px" width="14" height="14" viewBox="0 0 14 14"><path d="M1,1.2 L13,12.6 M13,1.2 L1,12.6" stroke="#d0d0d0" stroke-width="1.3"/></svg>
<svg style="left:51.00px;top:60.00px" width="19" height="15" viewBox="0 0 19 15"><path d="M1,1 H5.8 L7.6,3.4 H16 V5.2 H3.4 L1,8.8 Z" fill="#d0d0d0"/><path d="M3.2,5.9 H18 L15.5,14 H1 Z" fill="#d0d0d0"/></svg>
<svg style="left:82.00px;top:60.00px" width="14" height="16" viewBox="0 0 14 16"><path d="M1.6,8.4 L12.6,1.6 L8.8,8.4 L12.6,15.2 Z" fill="none" stroke="#d0d0d0" stroke-width="1.1" stroke-linejoin="miter"/></svg>
<div class="a" style="left:105.50px;top:60.00px;width:82.5px;height:16px;background:#2b2b2b"></div>
<div class="a" style="left:105.50px;top:60.00px;width:8.5px;height:16px;background:#6b6b6b"></div>
<svg style="left:196.00px;top:61.00px" width="13" height="15" viewBox="0 0 13 15"><path d="M0.9,1.1 L12,7.4 L0.9,13.8 L3.8,7.4 Z" fill="#d0d0d0"/></svg>
<svg style="left:221.00px;top:60.00px" width="19" height="17" viewBox="0 0 19 17"><path d="M0.8,2 L7.6,8.4 L0.8,14.8 L3,8.4 Z" fill="#d0d0d0"/><path d="M6.6,8.4 L17.7,1.3 L14,8.4 L17.7,15.6 Z" fill="none" stroke="#d0d0d0" stroke-width="1.1"/></svg>
<div class="t" style="left:13.00px;top:534.50px;font-size:12.4px;color:#d0d0d0">2048 x 2048 (RGBA, 16bpc)</div>
<svg style="left:22.00px;top:562.00px" width="23" height="17" viewBox="0 0 23 17"><path d="M8,0.8 L14.8,4.4 L8,8 L1.2,4.4 Z" fill="#f07070"/><path d="M1.5,7.6 L8,11.2 L14.5,7.6" fill="none" stroke="#22e022" stroke-width="2"/><path d="M1.5,11.8 L8,15.2 L14.5,11.8" fill="none" stroke="#1f8ff0" stroke-width="2"/><path d="M15.2,11.6 L18,14.4 L20.8,11.6" fill="none" stroke="#9a9a9a" stroke-width="1.2"/></svg>
<div class="a" style="left:47.00px;top:562.00px;width:16px;height:16px;background:#000"></div>
<svg style="left:70.00px;top:562.00px" width="16" height="16" viewBox="0 0 16 16"><rect x="0" y="0" width="16" height="16" fill="#6a6a6a"/><rect x="5.3" y="0" width="0.9" height="16" fill="#3c3c3c"/><rect x="10.3" y="0" width="0.9" height="16" fill="#3c3c3c"/></svg>
<div class="a" style="left:92.00px;top:558.50px;width:26.5px;height:23px;background:#2a2a2a;border-radius:4px"></div>
<svg style="left:96.00px;top:562.00px" width="18" height="17" viewBox="0 0 18 17"><rect x="1.6" y="1.3" width="14.6" height="11.6" fill="#1c1c1c" stroke="#dcdcdc" stroke-width="1.5"/><rect x="4" y="14" width="9.6" height="1.6" fill="#dcdcdc"/><rect x="7.5" y="12.5" width="3" height="1.8" fill="#dcdcdc"/><circle cx="8.8" cy="5.6" r="2.5" fill="#f07070"/><circle cx="6.6" cy="8.4" r="2.5" fill="#1f8ff0"/><circle cx="10.9" cy="8.4" r="2.5" fill="#22dd22"/></svg>
<svg style="left:362.00px;top:563.00px" width="15" height="15" viewBox="0 0 15 15"><rect x="0" y="0" width="4" height="4" fill="#d2d2d2"/><rect x="0" y="5" width="4" height="4" fill="#d2d2d2"/><rect x="0" y="10" width="4" height="4" fill="#d2d2d2"/><rect x="5" y="0" width="4" height="4" fill="#d2d2d2"/><rect x="5" y="5" width="4" height="4" fill="#d2d2d2"/><rect x="5" y="10" width="4" height="4" fill="#d2d2d2"/><rect x="10" y="0" width="4" height="4" fill="#d2d2d2"/><rect x="10" y="5" width="4" height="4" fill="#d2d2d2"/><rect x="10" y="10" width="4" height="4" fill="#d2d2d2"/></svg>
<svg style="left:388.00px;top:561.00px" width="18" height="17" viewBox="0 0 18 17"><circle cx="6.6" cy="1.8" r="1.5" fill="#d0d0d0"/><path d="M1,3.4 H12.2 V4.6 H9 V10.6 H8.6 V16.2 H7.2 V10.8 H6 V16.2 H4.6 V10.6 H4.2 V4.6 H1 Z" fill="#d0d0d0"/><rect x="10.5" y="10.5" width="6.5" height="6.5" fill="#cfcfcf"/><rect x="11.5" y="11.5" width="2.2" height="2.2" fill="#222"/><rect x="13.7" y="13.7" width="2.2" height="2.2" fill="#222"/></svg>
<svg style="left:415.00px;top:564.00px" width="12" height="12" viewBox="0 0 12 12"><rect x="2" y="1.8" width="8" height="8.2" fill="#d0d0d0"/><path d="M0.6,3 V0.6 H3 M9,0.6 H11.4 V3 M11.4,9 V11.4 H9 M3,11.4 H0.6 V9" fill="none" stroke="#8a8a8a" stroke-width="1.1"/></svg>
<svg style="left:432.00px;top:563.00px" width="15" height="15" viewBox="0 0 15 15"><path d="M7.5,0.3 L9.5,2.6 H5.5 Z M7.5,14.3 L9.5,12 H5.5 Z M0.3,7.3 L2.6,5.3 V9.3 Z M14.6,7.3 L12.3,5.3 V9.3 Z" fill="#c0c0c0"/><path d="M4.3,4.3 V10.3 M10.7,4.3 V10.3" stroke="#c0c0c0" stroke-width="1.1"/><path d="M7.5,5 V9.6" stroke="#c0c0c0" stroke-width="1" stroke-dasharray="1 1.2"/></svg>
<div class="a" style="left:451.00px;top:557.00px;width:1px;height:26px;background:#232323"></div>
<svg style="left:458.50px;top:567.00px" width="7" height="7" viewBox="0 0 7 7"><circle cx="3.5" cy="3.5" r="3.3" fill="#cdcdcd"/><rect x="1.5" y="3" width="4" height="1.1" fill="#333"/></svg>
<div class="a" style="left:472.00px;top:562.00px;width:77.5px;height:16px;background:#2a2a2a"></div>
<div class="t" style="left:494.30px;top:566.20px;font-size:11.5px;color:#b4b4b4;letter-spacing:0.2px">23.44%</div>
<svg style="left:555.80px;top:567.00px" width="7" height="7" viewBox="0 0 7 7"><circle cx="3.5" cy="3.5" r="3.3" fill="#cdcdcd"/><rect x="1.5" y="3" width="4" height="1.1" fill="#333"/><rect x="3" y="1.5" width="1.1" height="4" fill="#333"/></svg>
<div class="a" style="left:569.00px;top:557.00px;width:1px;height:26px;background:#232323"></div>
</div>
<div class="a" style="left:586px;top:0;width:548px;height:588px;overflow:hidden"><div class="a" style="left:-586px;top:0;width:1134px;height:588px">
<svg style="left:545.00px;top:12.00px" width="14" height="14" viewBox="0 0 14 14"><rect x="0" y="0" width="14" height="14" fill="#d2d2d2"/><rect x="1" y="1" width="6" height="6" fill="#2b2b2b"/><rect x="7" y="7" width="6" height="6" fill="#2b2b2b"/></svg>
<div class="t" style="left:567.50px;top:12.80px;font-size:13px;font-weight:bold;color:#e0e0e0;letter-spacing:-0.8px">Tile</div>
<div class="t" style="left:587.90px;top:12.80px;font-size:13px;font-weight:bold;color:#e0e0e0;letter-spacing:-0.25px">_sampler_color</div>
<div class="t" style="left:684.40px;top:12.80px;font-size:13px;font-weight:bold;color:#e0e0e0;transform:scaleX(1.15);transform-origin:0 0">-</div>
<div class="t" style="left:693.40px;top:12.80px;font-size:13px;font-weight:bold;color:#e0e0e0;letter-spacing:-0.23px">2D VIEW</div>
<svg style="left:1032.00px;top:11.00px" width="16" height="16" viewBox="0 0 16 16"><g transform="rotate(45 8 8)"><path d="M5,0.8 H11 V2.6 H10 V6.2 L12.6,9 V10.2 H3.4 V9 L6,6.2 V2.6 H5 Z" fill="#d0d0d0"/><rect x="7.5" y="10" width="1" height="6.5" fill="#d0d0d0"/></g></svg>
<svg style="left:1060.00px;top:14.00px" width="10" height="10" viewBox="0 0 10 10"><rect x="0.6" y="0.6" width="8.8" height="8.8" fill="none" stroke="#d6d6d6" stroke-width="1.2"/><path d="M5.5,0.5 V9.5 M5.5,5.5 H9.5" stroke="#d6d6d6" stroke-width="1.1"/></svg>
<svg style="left:1085.00px;top:14.00px" width="10" height="10" viewBox="0 0 10 10"><rect x="0.6" y="0.6" width="8.8" height="8.8" fill="none" stroke="#d6d6d6" stroke-width="1.2"/><rect x="0.5" y="0.5" width="9" height="2.5" fill="#d6d6d6"/></svg>
<svg style="left:1110.00px;top:14.00px" width="10" height="10" viewBox="0 0 10 10"><path d="M0.5,0.5 L9.5,9.5 M9.5,0.5 L0.5,9.5" stroke="#d0d0d0" stroke-width="1.2"/></svg>
<div class="a" style="left:539.50px;top:32.00px;width:26.5px;height:23.7px;background:#2a2a2a;border-radius:5px"></div>
<svg style="left:544.00px;top:36.00px" width="17" height="17" viewBox="0 0 17 17"><defs><linearGradient id="g535" x1="0" y1="0" x2="1" y2="1"><stop offset="0.3" stop-color="#555"/><stop offset="1" stop-color="#e0e0e0"/></linearGradient></defs><rect x="4.5" y="3.8" width="11.2" height="11.8" fill="url(#g535)" stroke="#d8d8d8" stroke-width="1"/><rect x="13" y="6" width="1.5" height="1.5" fill="#333"/><rect x="0.5" y="0.5" width="12" height="12" fill="#2a2a2a" stroke="#d8d8d8" stroke-width="1"/></svg>
<svg style="left:573.00px;top:36.00px" width="16" height="16" viewBox="0 0 16 16"><path d="M0,0 H12.6 L16,3.5 V16 H0 Z" fill="#d0d0d0"/><rect x="2.8" y="0" width="9" height="6.6" fill="#333"/><rect x="3.8" y="0" width="7" height="5.6" fill="#c8c8c8"/><rect x="8.2" y="1" width="1.5" height="3.6" fill="#222"/><rect x="1.4" y="13" width="1.6" height="1.6" fill="#222"/></svg>
<svg style="left:603.00px;top:36.00px" width="14" height="15" viewBox="0 0 14 15"><path d="M0,0 H6.5 L9.5,3 V12 H0 Z" fill="#d0d0d0"/><path d="M3,2.6 H10 L13.3,5.9 V15 H3 Z" fill="#c8c8c8" stroke="#333" stroke-width="0.9"/><path d="M10,2.6 L13.3,5.9 H10 Z" fill="#e6e6e6"/></svg>
<svg style="left:632.00px;top:37.00px" width="16" height="15" viewBox="0 0 16 15"><rect x="1.5" y="5" width="4" height="4" fill="none" stroke="#5c5c5c" stroke-width="1"/><path d="M5.5,7 L11,1.8 M5.5,7 H11 M5.5,7 L11,12.2" stroke="#5c5c5c" stroke-width="1"/><rect x="11" y="1" width="4" height="2" fill="#5c5c5c"/><rect x="11" y="6" width="4" height="2" fill="#5c5c5c"/><rect x="11" y="11" width="4" height="2" fill="#5c5c5c"/></svg>
<div class="t" style="left:658.00px;top:40.60px;font-size:10.2px;color:#6c6c6c;letter-spacing:-0.2px">UV</div>
<svg style="left:680.50px;top:41.50px" width="8" height="5" viewBox="0 0 8 5"><path d="M0.5,0.5 L3.75,3.8 L7,0.5" fill="none" stroke="#6a6a6a" stroke-width="1.1"/></svg>
<svg style="left:698.00px;top:35.00px" width="10" height="18" viewBox="0 0 10 18"><circle cx="6.5" cy="2.5" r="1.5" fill="#d6d6d6"/><path d="M2.3,6.2 H7.2 L4.8,14.8 Q4.4,16.6 3,16.6 Q1.4,16.6 1.9,14.8 L3.9,7.6 H2 Z" fill="#d6d6d6"/></svg>
<svg style="left:722.00px;top:35.00px" width="18" height="18" viewBox="0 0 18 18"><rect x="1.9" y="1" width="2.2" height="16" fill="#d8d8d8"/><rect x="5" y="5.8" width="2.2" height="11" fill="#d8d8d8"/><rect x="8" y="3.8" width="2.2" height="13" fill="#d8d8d8"/><rect x="11" y="8.9" width="2.2" height="8" fill="#d8d8d8"/><rect x="14" y="12" width="2.2" height="5" fill="#d8d8d8"/><rect x="1" y="16" width="16.2" height="1.2" fill="#d8d8d8"/></svg>
<div class="a" style="left:544.00px;top:58.00px;width:1px;height:25px;background:#1c1c1c"></div>
<div class="a" style="left:544.00px;top:560.00px;width:1px;height:25px;background:#1c1c1c"></div>
<div class="a" style="left:546.00px;top:58.00px;width:1px;height:25px;background:#1c1c1c"></div>
<div class="a" style="left:546.00px;top:560.00px;width:1px;height:25px;background:#1c1c1c"></div>
<div class="a" style="left:548.00px;top:58.00px;width:1px;height:25px;background:#1c1c1c"></div>
<div class="a" style="left:548.00px;top:560.00px;width:1px;height:25px;background:#1c1c1c"></div>
<svg style="left:560.00px;top:63.00px" width="14" height="14" viewBox="0 0 14 14"><path d="M1,1.2 L13,12.6 M13,1.2 L1,12.6" stroke="#d0d0d0" stroke-width="1.3"/></svg>
<svg style="left:586.00px;top:62.00px" width="19" height="15" viewBox="0 0 19 15"><path d="M1,1 H5.8 L7.6,3.4 H16 V5.2 H3.4 L1,8.8 Z" fill="#d0d0d0"/><path d="M3.2,5.9 H18 L15.5,14 H1 Z" fill="#d0d0d0"/></svg>
<svg style="left:617.00px;top:62.00px" width="14" height="16" viewBox="0 0 14 16"><path d="M1.6,8.4 L12.6,1.6 L8.8,8.4 L12.6,15.2 Z" fill="none" stroke="#d0d0d0" stroke-width="1.1" stroke-linejoin="miter"/></svg>
<div class="a" style="left:640.50px;top:62.00px;width:82.5px;height:16px;background:#2b2b2b"></div>
<div class="a" style="left:640.50px;top:62.00px;width:8.5px;height:16px;background:#6b6b6b"></div>
<svg style="left:731.00px;top:63.00px" width="13" height="15" viewBox="0 0 13 15"><path d="M0.9,1.1 L12,7.4 L0.9,13.8 L3.8,7.4 Z" fill="#d0d0d0"/></svg>
<svg style="left:756.00px;top:62.00px" width="19" height="17" viewBox="0 0 19 17"><path d="M0.8,2 L7.6,8.4 L0.8,14.8 L3,8.4 Z" fill="#d0d0d0"/><path d="M6.6,8.4 L17.7,1.3 L14,8.4 L17.7,15.6 Z" fill="none" stroke="#d0d0d0" stroke-width="1.1"/></svg>
<div class="t" style="left:548.00px;top:536.50px;font-size:12.4px;color:#d0d0d0">2048 x 2048 (RGBA, 16bpc)</div>
<svg style="left:557.00px;top:564.00px" width="23" height="17" viewBox="0 0 23 17"><path d="M8,0.8 L14.8,4.4 L8,8 L1.2,4.4 Z" fill="#f07070"/><path d="M1.5,7.6 L8,11.2 L14.5,7.6" fill="none" stroke="#22e022" stroke-width="2"/><path d="M1.5,11.8 L8,15.2 L14.5,11.8" fill="none" stroke="#1f8ff0" stroke-width="2"/><path d="M15.2,11.6 L18,14.4 L20.8,11.6" fill="none" stroke="#9a9a9a" stroke-width="1.2"/></svg>
<div class="a" style="left:582.00px;top:564.00px;width:16px;height:16px;background:#000"></div>
<svg style="left:605.00px;top:564.00px" width="16" height="16" viewBox="0 0 16 16"><rect x="0" y="0" width="16" height="16" fill="#6a6a6a"/><rect x="5.3" y="0" width="0.9" height="16" fill="#3c3c3c"/><rect x="10.3" y="0" width="0.9" height="16" fill="#3c3c3c"/></svg>
<div class="a" style="left:627.00px;top:560.50px;width:26.5px;height:23px;background:#2a2a2a;border-radius:4px"></div>
<svg style="left:631.00px;top:564.00px" width="18" height="17" viewBox="0 0 18 17"><rect x="1.6" y="1.3" width="14.6" height="11.6" fill="#1c1c1c" stroke="#dcdcdc" stroke-width="1.5"/><rect x="4" y="14" width="9.6" height="1.6" fill="#dcdcdc"/><rect x="7.5" y="12.5" width="3" height="1.8" fill="#dcdcdc"/><circle cx="8.8" cy="5.6" r="2.5" fill="#f07070"/><circle cx="6.6" cy="8.4" r="2.5" fill="#1f8ff0"/><circle cx="10.9" cy="8.4" r="2.5" fill="#22dd22"/></svg>
<svg style="left:897.00px;top:565.00px" width="15" height="15" viewBox="0 0 15 15"><rect x="0" y="0" width="4" height="4" fill="#d2d2d2"/><rect x="0" y="5" width="4" height="4" fill="#d2d2d2"/><rect x="0" y="10" width="4" height="4" fill="#d2d2d2"/><rect x="5" y="0" width="4" height="4" fill="#d2d2d2"/><rect x="5" y="5" width="4" height="4" fill="#d2d2d2"/><rect x="5" y="10" width="4" height="4" fill="#d2d2d2"/><rect x="10" y="0" width="4" height="4" fill="#d2d2d2"/><rect x="10" y="5" width="4" height="4" fill="#d2d2d2"/><rect x="10" y="10" width="4" height="4" fill="#d2d2d2"/></svg>
<svg style="left:923.00px;top:563.00px" width="18" height="17" viewBox="0 0 18 17"><circle cx="6.6" cy="1.8" r="1.5" fill="#d0d0d0"/><path d="M1,3.4 H12.2 V4.6 H9 V10.6 H8.6 V16.2 H7.2 V10.8 H6 V16.2 H4.6 V10.6 H4.2 V4.6 H1 Z" fill="#d0d0d0"/><rect x="10.5" y="10.5" width="6.5" height="6.5" fill="#cfcfcf"/><rect x="11.5" y="11.5" width="2.2" height="2.2" fill="#222"/><rect x="13.7" y="13.7" width="2.2" height="2.2" fill="#222"/></svg>
<svg style="left:950.00px;top:566.00px" width="12" height="12" viewBox="0 0 12 12"><rect x="2" y="1.8" width="8" height="8.2" fill="#d0d0d0"/><path d="M0.6,3 V0.6 H3 M9,0.6 H11.4 V3 M11.4,9 V11.4 H9 M3,11.4 H0.6 V9" fill="none" stroke="#8a8a8a" stroke-width="1.1"/></svg>
<svg style="left:967.00px;top:565.00px" width="15" height="15" viewBox="0 0 15 15"><path d="M7.5,0.3 L9.5,2.6 H5.5 Z M7.5,14.3 L9.5,12 H5.5 Z M0.3,7.3 L2.6,5.3 V9.3 Z M14.6,7.3 L12.3,5.3 V9.3 Z" fill="#c0c0c0"/><path d="M4.3,4.3 V10.3 M10.7,4.3 V10.3" stroke="#c0c0c0" stroke-width="1.1"/><path d="M7.5,5 V9.6" stroke="#c0c0c0" stroke-width="1" stroke-dasharray="1 1.2"/></svg>
<div class="a" style="left:986.00px;top:559.00px;width:1px;height:26px;background:#232323"></div>
<svg style="left:993.50px;top:569.00px" width="7" height="7" viewBox="0 0 7 7"><circle cx="3.5" cy="3.5" r="3.3" fill="#cdcdcd"/><rect x="1.5" y="3" width="4" height="1.1" fill="#333"/></svg>
<div class="a" style="left:1007.00px;top:564.00px;width:77.5px;height:16px;background:#2a2a2a"></div>
<div class="t" style="left:1029.30px;top:568.20px;font-size:11.5px;color:#b4b4b4;letter-spacing:0.2px">23.44%</div>
<svg style="left:1090.80px;top:569.00px" width="7" height="7" viewBox="0 0 7 7"><circle cx="3.5" cy="3.5" r="3.3" fill="#cdcdcd"/><rect x="1.5" y="3" width="4" height="1.1" fill="#333"/><rect x="3" y="1.5" width="1.1" height="4" fill="#333"/></svg>
<div class="a" style="left:1104.00px;top:559.00px;width:1px;height:26px;background:#232323"></div>
<div class="a" style="left:1107.00px;top:560.00px;width:19px;height:23.4px;background:#2a2a2a;border-radius:4px"></div>
<svg style="left:1112.00px;top:566.00px" width="9" height="12" viewBox="0 0 9 12"><path d="M2.2,5 V3.4 Q2.2,1 4.5,1 Q6.8,1 6.8,3.4 V5" fill="none" stroke="#d6d6d6" stroke-width="1.4"/><rect x="0.8" y="5" width="7.6" height="6.3" rx="0.6" fill="#d6d6d6"/><path d="M4.6,6.8 L5.3,9.6 H3.9 Z" fill="#333"/></svg>
</div></div>

</body></html>
